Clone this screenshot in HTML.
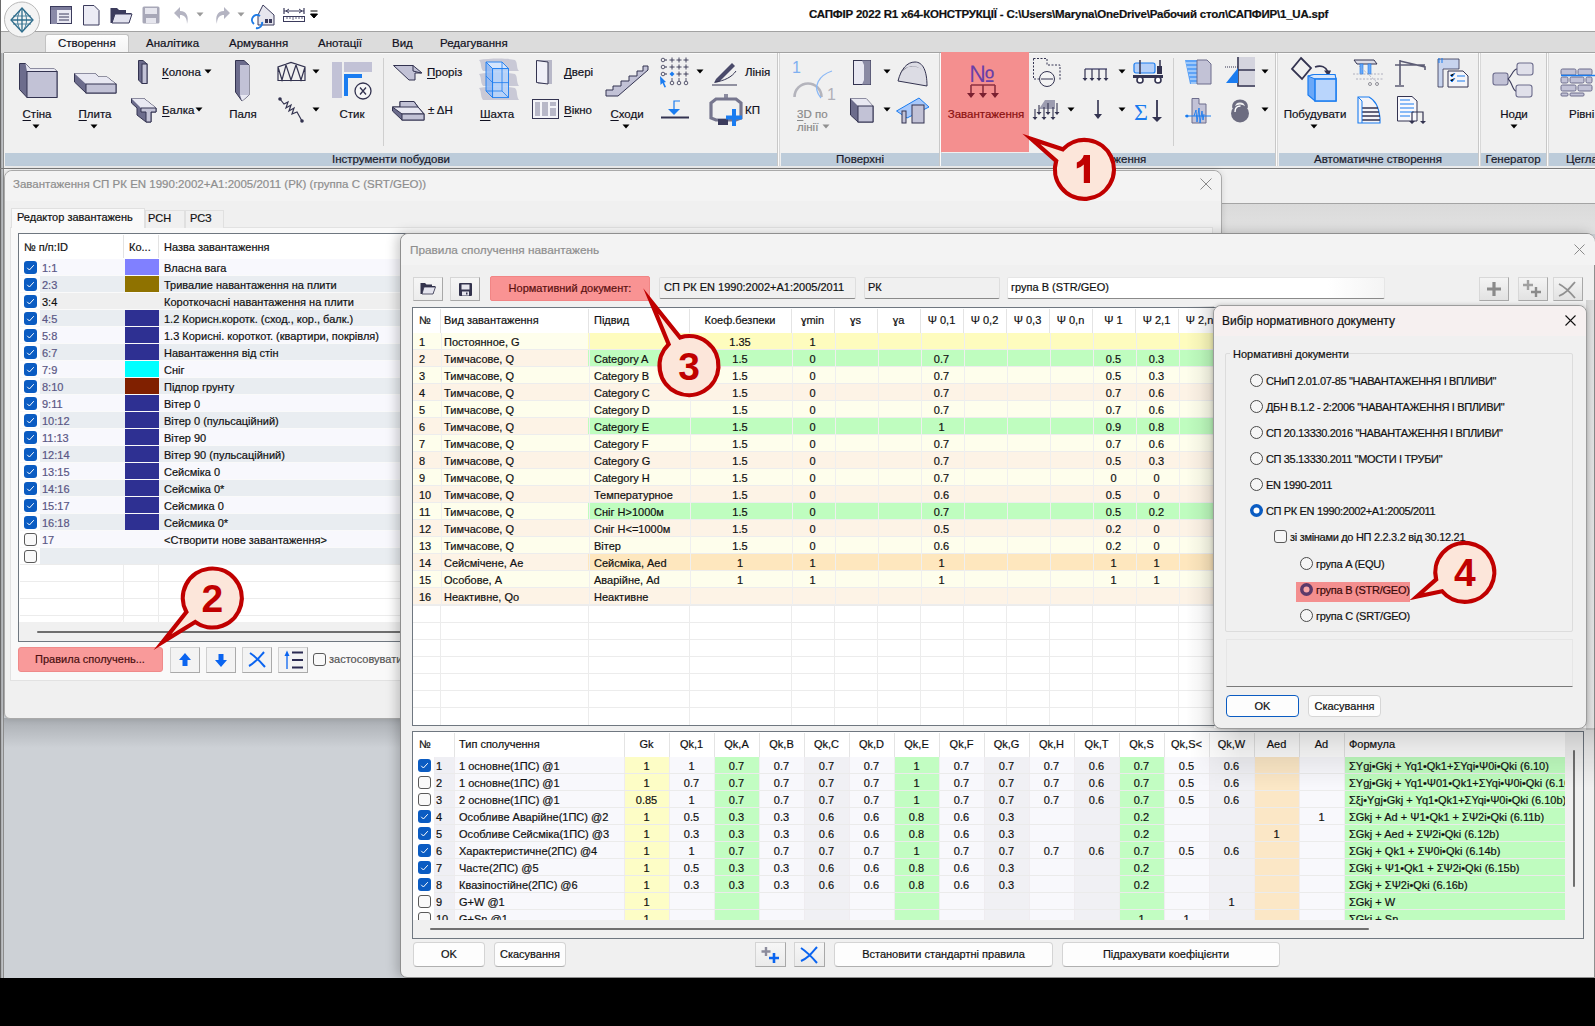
<!DOCTYPE html>
<html><head><meta charset="utf-8">
<style>
*{box-sizing:border-box;margin:0;padding:0}
html,body{width:1595px;height:1026px;overflow:hidden;background:#000}
body{position:relative;font-family:"Liberation Sans",sans-serif;font-size:11px;color:#000}
.a{position:absolute}
.t{position:absolute;white-space:nowrap;line-height:13px;-webkit-text-stroke:0.2px currentColor}
svg{overflow:visible}
</style></head><body>

<div class="a" style="left:0px;top:0px;width:1595px;height:978px;background:#cdd1d6"></div>
<div class="a" style="left:0px;top:0px;width:4px;height:978px;background:linear-gradient(90deg,#6a6a6a 0,#6a6a6a 1px,#a9aaac 1px,#c4c8cc 3px,#8c8c8c 3px)"></div>
<div class="a" style="left:1px;top:0px;width:1594px;height:31px;background:#fff"></div>
<svg class="a" style="left:50px;top:6px;" width="23" height="19" viewBox="0 0 23 19"><rect x="0.5" y="0.5" width="21" height="17" fill="#e9e9f3" stroke="#3b3b5c"/><rect x="1" y="1" width="20" height="3" fill="#7b7b9b"/><rect x="1" y="4" width="6" height="14" fill="#8a8aa8"/><path d="M9 8 H19 M9 11 H19 M9 14 H19" stroke="#3b3b5c" stroke-width="1"/></svg>
<svg class="a" style="left:83px;top:5px;" width="17" height="21" viewBox="0 0 17 21"><path d="M0.5 0.5 H11 L16 5.5 V20 H0.5 Z" fill="#ececf5" stroke="#3b3b5c"/></svg>
<svg class="a" style="left:110px;top:7px;" width="23" height="17" viewBox="0 0 23 17"><path d="M0.5 1 H7 L9 3 H16 V6 H21.5 L19 16 H0.5 Z" fill="#3b3b5c"/><path d="M2 16 L5 7 H22 L19 16 Z" fill="#e2e2ee" stroke="#3b3b5c"/></svg>
<svg class="a" style="left:142px;top:6px;" width="18" height="18" viewBox="0 0 18 18"><rect x="0.5" y="0.5" width="17" height="17" rx="1.5" fill="#a8a8b8"/><rect x="3" y="2" width="12" height="6" fill="#e6e6ee"/><rect x="4" y="12" width="10" height="5" fill="#e6e6ee"/></svg>
<svg class="a" style="left:172px;top:5px;" width="18" height="20" viewBox="0 0 18 20"><path d="M8 2 L2 8 L8 14 V10 C12 10 15 12 15 19 C17 12 15 6 8 6 Z" fill="#b4b4c2"/></svg>
<svg class="a" style="left:196px;top:12px;" width="8" height="5" viewBox="0 0 8 5"><path d="M0.5 0.5 H7.5 L4 4.5 Z" fill="#9a9a9a"/></svg>
<svg class="a" style="left:214px;top:5px;" width="18" height="20" viewBox="0 0 18 20"><path d="M10 2 L16 8 L10 14 V10 C6 10 3 12 3 19 C1 12 3 6 10 6 Z" fill="#b4b4c2"/></svg>
<svg class="a" style="left:237px;top:12px;" width="8" height="5" viewBox="0 0 8 5"><path d="M0.5 0.5 H7.5 L4 4.5 Z" fill="#9a9a9a"/></svg>
<svg class="a" style="left:252px;top:4px;" width="23" height="22" viewBox="0 0 23 22"><path d="M11 1 L22 11 V21 H6 V11 Z" fill="#e6e6ee" stroke="#3b3b5c"/><rect x="13" y="15" width="3" height="4" fill="#3b3b5c"/><rect x="17" y="15" width="3" height="4" fill="#3b3b5c"/><path d="M2 20 A5 5 0 0 1 8 12 M10 18 A5 5 0 0 1 4 24" stroke="#1e7be6" stroke-width="2" fill="none"/></svg>
<svg class="a" style="left:283px;top:8px;" width="22" height="15" viewBox="0 0 22 15"><path d="M1 3 H21 M1 0 V6 M21 0 V6" stroke="#3b3b5c" stroke-width="1.2"/><path d="M3 3 L6 1 M3 3 L6 5 M19 3 L16 1 M19 3 L16 5" stroke="#3b3b5c"/><rect x="0.5" y="8.5" width="21" height="5" fill="#fff" stroke="#3b3b5c"/><path d="M4 9 V11 M7 9 V11 M10 9 V12 M13 9 V11 M16 9 V11 M19 9 V11" stroke="#3b3b5c" stroke-width="0.8"/></svg>
<svg class="a" style="left:310px;top:10px;" width="8" height="10" viewBox="0 0 8 10"><path d="M0.5 1 H7.5 M0.5 4 H7.5 L4 8 Z" stroke="#000" fill="#000" stroke-width="1"/></svg>
<div class="t" style="left:809px;top:8px;font-weight:bold;font-size:11.5px;color:#111;letter-spacing:-0.2px">САПФІР 2022 R1 x64-КОНСТРУКЦІЇ - C:\Users\Maryna\OneDrive\Рабочий стол\САПФИР\1_UA.spf</div>
<div class="a" style="left:1px;top:31px;width:1594px;height:22px;background:#dcdcdc;border-top:1px solid #a2a2a2"></div>
<div class="a" style="left:45px;top:34px;width:84px;height:19px;background:linear-gradient(#fdfdfd,#f3f3f3);border:1px solid #c2c2c2;border-bottom:none;border-radius:3px 3px 0 0"></div>
<div class="t" style="left:58px;top:37px;font-size:11.5px;color:#101020">Створення</div>
<div class="t" style="left:146px;top:37px;font-size:11.5px;color:#101020">Аналітика</div>
<div class="t" style="left:229px;top:37px;font-size:11.5px;color:#101020">Армування</div>
<div class="t" style="left:318px;top:37px;font-size:11.5px;color:#101020">Анотації</div>
<div class="t" style="left:392px;top:37px;font-size:11.5px;color:#101020">Вид</div>
<div class="t" style="left:440px;top:37px;font-size:11.5px;color:#101020">Редагування</div>
<svg class="a" style="left:3px;top:1px;" width="38" height="38" viewBox="0 0 38 38"><circle cx="19" cy="18.5" r="17.5" fill="#f4f4f4" stroke="#b9b9b9" stroke-width="1"/><g fill="none" stroke="#2f6d8c" stroke-width="1.3"><path d="M19 7 L30 19 L19 31 L8 19 Z"/><path d="M19 7 V31 M8 19 H30"/><path d="M19 7 C13 13 13 25 19 31 M19 7 C25 13 25 25 19 31" stroke-width="0.9"/><path d="M10 15 H28 M10 23 H28" stroke-width="0.8"/></g></svg>
<div class="a" style="left:4px;top:52px;width:1591px;height:115px;background:#f0f0f0;border-top:1px solid #a2a2a2"></div>
<div class="a" style="left:4px;top:53px;width:1591px;height:1px;background:#fafafa"></div>
<div class="a" style="left:777px;top:53px;width:3px;height:114px;background:linear-gradient(90deg,#c8c8c8 0,#c8c8c8 1px,#fbfbfb 1px,#fbfbfb 2px,#d8d8d8 2px)"></div>
<div class="a" style="left:939px;top:53px;width:3px;height:114px;background:linear-gradient(90deg,#c8c8c8 0,#c8c8c8 1px,#fbfbfb 1px,#fbfbfb 2px,#d8d8d8 2px)"></div>
<div class="a" style="left:1275px;top:53px;width:3px;height:114px;background:linear-gradient(90deg,#c8c8c8 0,#c8c8c8 1px,#fbfbfb 1px,#fbfbfb 2px,#d8d8d8 2px)"></div>
<div class="a" style="left:1478px;top:53px;width:3px;height:114px;background:linear-gradient(90deg,#c8c8c8 0,#c8c8c8 1px,#fbfbfb 1px,#fbfbfb 2px,#d8d8d8 2px)"></div>
<div class="a" style="left:1546px;top:53px;width:3px;height:114px;background:linear-gradient(90deg,#c8c8c8 0,#c8c8c8 1px,#fbfbfb 1px,#fbfbfb 2px,#d8d8d8 2px)"></div>
<div class="a" style="left:5px;top:153px;width:772px;height:13px;background:#bdccda"></div>
<div class="a" style="left:781px;top:153px;width:158px;height:13px;background:#bdccda"></div>
<div class="a" style="left:941px;top:153px;width:334px;height:13px;background:#bdccda"></div>
<div class="a" style="left:1279px;top:153px;width:199px;height:13px;background:#bdccda"></div>
<div class="a" style="left:1481px;top:153px;width:65px;height:13px;background:#bdccda"></div>
<div class="a" style="left:1549px;top:153px;width:46px;height:13px;background:#bdccda"></div>
<div class="a" style="left:4px;top:166px;width:1591px;height:2px;background:#ececec"></div>
<div class="a" style="left:0px;top:168px;width:1595px;height:1px;background:#7a7a7a"></div>
<div class="a" style="left:4px;top:169px;width:1591px;height:1px;background:#f8f8f8"></div>
<div class="a" style="left:383px;top:58px;width:1px;height:88px;background:#cfcfcf"></div>
<div class="a" style="left:1173px;top:58px;width:1px;height:88px;background:#cfcfcf"></div>
<div class="t" style="left:191.0px;top:153px;width:400px;text-align:center;font-size:11.5px;line-height:13px;color:#1a1a2a">Інструменти побудови</div>
<div class="t" style="left:660.0px;top:153px;width:400px;text-align:center;font-size:11.5px;line-height:13px;color:#1a1a2a">Поверхні</div>
<div class="t" style="left:908.0px;top:153px;width:400px;text-align:center;font-size:11.5px;line-height:13px;color:#1a1a2a">Завантаження</div>
<div class="t" style="left:1178.0px;top:153px;width:400px;text-align:center;font-size:11.5px;line-height:13px;color:#1a1a2a">Автоматичне створення</div>
<div class="t" style="left:1313.0px;top:153px;width:400px;text-align:center;font-size:11.5px;line-height:13px;color:#1a1a2a">Генератор</div>
<div class="t" style="left:1566px;top:153px;font-size:11.5px;line-height:13px;color:#1a1a2a">Цегла</div>
<svg class="a" style="left:19px;top:63px;" width="39" height="36" viewBox="0 0 39 36"><path d="M0.5 0.5 H6.5 L11 5.5 H35 L38 8.5 V34.5 H8 L0.5 26.5 Z" fill="#6c6c8c" stroke="#333350"/><path d="M6.5 0.5 L11 5.5 H35 L38 8.5 H8 Z" fill="#e8e8f2"/><rect x="8" y="8.5" width="30" height="26" fill="#c2c2d6" stroke="#333350"/></svg>
<div class="t" style="left:-163px;top:108px;width:400px;text-align:center;font-size:11.5px;color:#101020"><u style="text-decoration-thickness:1px;text-underline-offset:2px">С</u>тіна</div>
<svg class="a" style="left:32px;top:124px;" width="8" height="5" viewBox="0 0 8 5"><path d="M0.5 0.5 H7.5 L4 4.5 Z" fill="#000"/></svg>
<svg class="a" style="left:74px;top:73px;" width="43" height="21" viewBox="0 0 43 21"><path d="M0.5 0.5 H21 L25 4 H33 L42 11 V20 H12 L0.5 9 Z" fill="#6c6c8c" stroke="#333350"/><path d="M0.5 0.5 H21 L25 4 H33 L42 11 H12 Z" fill="#e8e8f2"/><rect x="12" y="11" width="30" height="9" fill="#c2c2d6" stroke="#333350"/></svg>
<div class="t" style="left:-105px;top:108px;width:400px;text-align:center;font-size:11.5px;color:#101020"><u style="text-decoration-thickness:1px;text-underline-offset:2px">П</u>лита</div>
<svg class="a" style="left:90px;top:124px;" width="8" height="5" viewBox="0 0 8 5"><path d="M0.5 0.5 H7.5 L4 4.5 Z" fill="#000"/></svg>
<svg class="a" style="left:138px;top:60px;" width="10" height="25" viewBox="0 0 10 25"><path d="M0.5 0.5 H5 L9 4 V23.5 H4 L0.5 20 Z" fill="#6c6c8c" stroke="#333350"/><rect x="4" y="4" width="5" height="19.5" fill="#c2c2d6" stroke="#333350"/></svg>
<div class="t" style="left:162px;top:66px;font-size:11.5px;color:#101020"><u style="text-decoration-thickness:1px;text-underline-offset:2px">К</u>олона</div>
<svg class="a" style="left:204px;top:69px;" width="8" height="5" viewBox="0 0 8 5"><path d="M0.5 0.5 H7.5 L4 4.5 Z" fill="#000"/></svg>
<svg class="a" style="left:131px;top:98px;" width="26" height="25" viewBox="0 0 26 25"><path d="M0.5 0.5 H13 L25 10 V14 H20 V24 H15 L6 17 V10 L0.5 5 Z" fill="#6c6c8c" stroke="#333350"/><path d="M0.5 0.5 H13 L25 10 H10 Z" fill="#e8e8f2"/><path d="M10 10 H25 V14 H20 V24 H15 V14 H10 Z" fill="#c2c2d6" stroke="#333350"/></svg>
<div class="t" style="left:162px;top:104px;font-size:11.5px;color:#101020"><u style="text-decoration-thickness:1px;text-underline-offset:2px">Б</u>алка</div>
<svg class="a" style="left:195px;top:107px;" width="8" height="5" viewBox="0 0 8 5"><path d="M0.5 0.5 H7.5 L4 4.5 Z" fill="#000"/></svg>
<svg class="a" style="left:235px;top:60px;" width="15" height="42" viewBox="0 0 15 42"><path d="M0.5 0.5 H9 L14 5 V35 L7 41 L0.5 32 Z" fill="#6c6c8c" stroke="#333350"/><path d="M5 5 H14 V35 H5 Z" fill="#c2c2d6"/><path d="M5 35 H14 L7 41 Z" fill="#e8e8f2"/></svg>
<div class="t" style="left:43.0px;top:108px;width:400px;text-align:center;font-size:11.5px;color:#101020">Паля</div>
<svg class="a" style="left:277px;top:62px;" width="29" height="20" viewBox="0 0 29 20"><path d="M1 18.5 V5 L14 0.5 L28 5 V18.5 Z M1 5 L5 18 L9 3 L14 18 L19 3 L24 18 L28 5" fill="none" stroke="#333350" stroke-width="1.2"/></svg>
<svg class="a" style="left:312px;top:69px;" width="8" height="5" viewBox="0 0 8 5"><path d="M0.5 0.5 H7.5 L4 4.5 Z" fill="#000"/></svg>
<svg class="a" style="left:277px;top:96px;" width="29" height="28" viewBox="0 0 29 28"><circle cx="3" cy="3" r="1.8" fill="#333350"/><circle cx="25" cy="25" r="1.8" fill="#333350"/><path d="M3 3 L7 8 L11 6 L9 12 L14 9 L12 15 L17 12 L15 18 L20 16 L25 25" fill="none" stroke="#333350" stroke-width="1.2"/></svg>
<svg class="a" style="left:312px;top:107px;" width="8" height="5" viewBox="0 0 8 5"><path d="M0.5 0.5 H7.5 L4 4.5 Z" fill="#000"/></svg>
<svg class="a" style="left:332px;top:62px;" width="40" height="38" viewBox="0 0 40 38"><rect x="0" y="0" width="10" height="36" fill="#c2c2d6"/><rect x="12" y="0" width="28" height="10" fill="#c2c2d6"/><path d="M12 12 H30 V16 H16 V34 H12 Z" fill="#1a7cf0"/><circle cx="31" cy="29" r="8" fill="#f7f7f7" stroke="#333350" stroke-width="1.3"/><path d="M28 25.5 L34 32.5 M34 25.5 L28 32.5" stroke="#333350" stroke-width="1.3"/></svg>
<div class="t" style="left:152.0px;top:108px;width:400px;text-align:center;font-size:11.5px;color:#101020">Стик</div>
<svg class="a" style="left:393px;top:65px;" width="30" height="16" viewBox="0 0 30 16"><path d="M0.5 0.5 H20 L29 8 H22 V15 H16 Z" fill="#c2c2d6" stroke="#333350"/><path d="M20 0.5 V6 L28 8" fill="none" stroke="#333350"/></svg>
<div class="t" style="left:427px;top:66px;font-size:11.5px;color:#101020"><u style="text-decoration-thickness:1px;text-underline-offset:2px">П</u>роріз</div>
<svg class="a" style="left:392px;top:101px;" width="33" height="20" viewBox="0 0 33 20"><path d="M0.5 6 H8 V0.5 H22 L26 6 L32 13 V19 H10 L0.5 10 Z" fill="#6c6c8c" stroke="#333350"/><path d="M8 0.5 H22 L26 6 V9 H8 Z" fill="#c2c2d6" stroke="#333350"/><path d="M0.5 6 H26 L32 13 H10 Z" fill="#e8e8f2" stroke="#333350"/><rect x="10" y="13" width="22" height="6" fill="#c2c2d6" stroke="#333350"/></svg>
<div class="t" style="left:428px;top:104px;font-size:11.5px;color:#101020">± ΔH</div>
<svg class="a" style="left:478px;top:58px;" width="41" height="43" viewBox="0 0 41 43"><g fill="#c9c9d6"><path d="M1 2 C12 0 30 0 37 2 C40 5 38 10 41 13 L5 13 C2 9 4 5 1 2 Z"/><path d="M1 16 C12 14 30 14 37 16 C40 19 38 24 41 28 L5 28 C2 24 4 20 1 16 Z"/><path d="M1 30 C12 28 30 28 37 30 C40 33 38 38 41 42 L5 42 C2 38 4 34 1 30 Z"/></g><path d="M8 4 L14.6 10.6 V39.6 L8 33 Z" fill="#8fb9f6" fill-opacity="0.85" stroke="#1a7cf0" stroke-width="0.9"/><path d="M8 4 H24 L30.5 10.6 H14.6 Z" fill="#d4e5fd" stroke="#1a7cf0" stroke-width="0.9"/><rect x="14.6" y="10.6" width="15.9" height="29" fill="#b6d3fb" fill-opacity="0.9" stroke="#1a7cf0" stroke-width="0.9"/><path d="M8 18 L14.6 24.6 H30.5 M24 4 V33 L30.5 39.6 M8 33 H24" fill="none" stroke="#1a7cf0" stroke-width="0.8"/></svg>
<div class="t" style="left:297px;top:108px;width:400px;text-align:center;font-size:11.5px;color:#101020"><u style="text-decoration-thickness:1px;text-underline-offset:2px">Ш</u>ахта</div>
<svg class="a" style="left:536px;top:60px;" width="16" height="25" viewBox="0 0 16 25"><rect x="2" y="0" width="14" height="24" fill="#b8b8c8"/><path d="M0.5 0.5 L12 2 V24 L0.5 22.5 Z" fill="#f0f0f8" stroke="#333350"/></svg>
<div class="t" style="left:564px;top:66px;font-size:11.5px;color:#101020"><u style="text-decoration-thickness:1px;text-underline-offset:2px">Д</u>вері</div>
<svg class="a" style="left:532px;top:99px;" width="27" height="20" viewBox="0 0 27 20"><rect x="0.5" y="0.5" width="26" height="19" fill="#f4f4f8" stroke="#333350"/><rect x="3" y="3" width="5" height="14" fill="#b8b8c8"/><rect x="10" y="3" width="6" height="14" fill="#b8b8c8"/><rect x="18" y="3" width="6" height="4" fill="#b8b8c8"/><rect x="18" y="9" width="6" height="8" fill="#b8b8c8"/></svg>
<div class="t" style="left:564px;top:104px;font-size:11.5px;color:#101020"><u style="text-decoration-thickness:1px;text-underline-offset:2px">В</u>ікно</div>
<svg class="a" style="left:605px;top:65px;" width="44" height="32" viewBox="0 0 44 32"><path d="M1 31 V25 H8 V21 H16 V16 H24 V11 H32 V6 H38 V1 H43 V5 L13 31 Z" fill="#c2c2d6" stroke="#333350"/></svg>
<div class="t" style="left:427px;top:108px;width:400px;text-align:center;font-size:11.5px;color:#101020"><u style="text-decoration-thickness:1px;text-underline-offset:2px">С</u>ходи</div>
<svg class="a" style="left:622px;top:124px;" width="8" height="5" viewBox="0 0 8 5"><path d="M0.5 0.5 H7.5 L4 4.5 Z" fill="#000"/></svg>
<svg class="a" style="left:660px;top:57px;" width="30" height="31" viewBox="0 0 30 31"><circle cx="3" cy="3" r="1.8" fill="none" stroke="#333350" stroke-width="0.8"/><path d="M5 3 H7" stroke="#333350"/><path d="M9.5 3 H14.5 M12 0.5 V5.5" stroke="#333350" stroke-width="0.9"/><path d="M16.5 3 H21.5 M19 0.5 V5.5" stroke="#333350" stroke-width="0.9"/><path d="M23.5 3 H28.5 M26 0.5 V5.5" stroke="#333350" stroke-width="0.9"/><circle cx="3" cy="10" r="1.8" fill="none" stroke="#333350" stroke-width="0.8"/><path d="M5 10 H7" stroke="#333350"/><path d="M9.5 10 H14.5 M12 7.5 V12.5" stroke="#333350" stroke-width="0.9"/><path d="M16.5 10 H21.5 M19 7.5 V12.5" stroke="#333350" stroke-width="0.9"/><path d="M23.5 10 H28.5 M26 7.5 V12.5" stroke="#333350" stroke-width="0.9"/><circle cx="3" cy="17" r="1.8" fill="none" stroke="#333350" stroke-width="0.8"/><path d="M5 17 H7" stroke="#333350"/><path d="M12 14.5 L14.5 17 L12 19.5 L9.5 17 Z" fill="#1a7cf0"/><path d="M16.5 17 H21.5 M19 14.5 V19.5" stroke="#333350" stroke-width="0.9"/><path d="M23.5 17 H28.5 M26 14.5 V19.5" stroke="#333350" stroke-width="0.9"/><circle cx="12" cy="26" r="1.8" fill="none" stroke="#333350" stroke-width="0.8"/><path d="M12 21 V24" stroke="#333350" stroke-width="0.8"/><circle cx="19" cy="26" r="1.8" fill="none" stroke="#333350" stroke-width="0.8"/><path d="M19 21 V24" stroke="#333350" stroke-width="0.8"/><circle cx="26" cy="26" r="1.8" fill="none" stroke="#333350" stroke-width="0.8"/><path d="M26 21 V24" stroke="#333350" stroke-width="0.8"/><path d="M0 19 L6 25 L4 25.5 L6 30 L4.5 30.5 L2.5 26 L0.5 28 Z" fill="#1a7cf0"/></svg>
<svg class="a" style="left:696px;top:69px;" width="8" height="5" viewBox="0 0 8 5"><path d="M0.5 0.5 H7.5 L4 4.5 Z" fill="#000"/></svg>
<svg class="a" style="left:661px;top:100px;" width="29" height="19" viewBox="0 0 29 19"><path d="M0 17.5 H28" stroke="#333350" stroke-width="2"/><path d="M19 1 H13 V9" stroke="#1a7cf0" stroke-width="1.2" fill="none"/><path d="M7 9 H19 L13 15 Z" fill="#1a7cf0"/></svg>
<svg class="a" style="left:712px;top:59px;" width="27" height="26" viewBox="0 0 27 26"><path d="M4 20 L20 4 L23 7 L7 23 L2 24 Z" fill="#4a4a6a"/><path d="M3 23 C12 22 20 18 24 12" stroke="#333350" fill="none"/><path d="M0 26 H25" stroke="#333350"/></svg>
<div class="t" style="left:745px;top:66px;font-size:11.5px;color:#101020">Лінія</div>
<svg class="a" style="left:710px;top:94px;" width="34" height="33" viewBox="0 0 34 33"><rect x="14" y="0" width="4" height="5" fill="#8c8ca0"/><path d="M6 5 H26 L31 9 V24 L26 26 H6 L1 24 V9 Z" fill="none" stroke="#76768e" stroke-width="3.2"/><rect x="8" y="25" width="10" height="6" fill="#3b3b5c"/><path d="M24 15 V32 M16 23.5 H32" stroke="#1a7cf0" stroke-width="4"/></svg>
<div class="t" style="left:745px;top:104px;font-size:11.5px;color:#101020">КП</div>
<svg class="a" style="left:780px;top:50px;" width="60" height="60" viewBox="0 0 60 60"><text x="12" y="22.5" font-family="Liberation Sans" font-size="16" fill="#7fb0f0">1</text><text x="47" y="50" font-family="Liberation Sans" font-size="16" fill="#b0b0b8">1</text><path d="M14.5 47 A13.5 13.5 0 0 1 41.5 47" stroke="#b4b4bc" stroke-width="2.6" fill="none"/><path d="M52 21 C40 25 31 36 41 48" stroke="#8ab8f6" stroke-width="1.3" fill="none"/></svg>
<div class="t" style="left:797px;top:108px;font-size:11.5px;color:#8a8a8a"><u style="text-decoration-thickness:1px;text-underline-offset:2px">3</u>D по</div>
<div class="t" style="left:797px;top:121px;font-size:11.5px;color:#8a8a8a">лінії</div>
<svg class="a" style="left:822px;top:124px;" width="8" height="5" viewBox="0 0 8 5"><path d="M0.5 0.5 H7.5 L4 4.5 Z" fill="#909090"/></svg>
<svg class="a" style="left:853px;top:60px;" width="19" height="26" viewBox="0 0 19 26"><rect x="0.5" y="0.5" width="17" height="24" fill="#e8e8f2" stroke="#333350"/><path d="M9 0.5 H17.5 V24.5 H9 L11 20 V5 Z" fill="#8a8aa4"/></svg>
<svg class="a" style="left:883px;top:69px;" width="8" height="5" viewBox="0 0 8 5"><path d="M0.5 0.5 H7.5 L4 4.5 Z" fill="#000"/></svg>
<svg class="a" style="left:850px;top:98px;" width="24" height="25" viewBox="0 0 24 25"><path d="M0.5 0.5 H16 L23 8 V24 H8 L0.5 17 Z" fill="#6c6c8c" stroke="#333350"/><path d="M0.5 0.5 H16 L23 8 H8 Z" fill="#e8e8f2"/><rect x="8" y="8" width="15" height="16" fill="#c2c2d6" stroke="#333350"/></svg>
<svg class="a" style="left:883px;top:107px;" width="8" height="5" viewBox="0 0 8 5"><path d="M0.5 0.5 H7.5 L4 4.5 Z" fill="#000"/></svg>
<svg class="a" style="left:897px;top:61px;" width="32" height="27" viewBox="0 0 32 27"><path d="M1 20 C4 8 10 1 18 1 C26 1 30 10 30 25 L1 20 Z" fill="#dcdce4" stroke="#333350"/><path d="M3 12 C8 4 20 3 25 9 C22 5 12 4 8 8" fill="#5a5a6a"/></svg>
<svg class="a" style="left:896px;top:97px;" width="34" height="27" viewBox="0 0 34 27"><path d="M0.5 14 L23 1 L33 10 L11 21 Z" fill="#a8c8fa" stroke="#1a7cf0"/><rect x="6" y="14" width="4" height="12" fill="#c2c2d6" stroke="#333350"/><rect x="16" y="8" width="12" height="18" fill="#c2c2d6" stroke="#333350"/></svg>
<div class="a" style="left:941px;top:52px;width:88px;height:100px;background:#f48f8f"></div>
<svg class="a" style="left:966px;top:60px;" width="38" height="38" viewBox="0 0 38 38"><text x="3" y="22" font-family="Liberation Sans" font-size="24" fill="#6a40a8">№</text><path d="M5 25 H29 M5 25 V33 M17 25 V33 M29 25 V33" stroke="#8c3040" stroke-width="1.6" fill="none"/><path d="M1 33 H9 L5 38 Z M13 33 H21 L17 38 Z M25 33 H33 L29 38 Z" fill="#7a2030"/></svg>
<div class="t" style="left:786.0px;top:108px;width:400px;text-align:center;font-size:11.5px;color:#8a1010">Завантаження</div>
<svg class="a" style="left:1033px;top:58px;" width="28" height="29" viewBox="0 0 28 29"><path d="M0.5 0.5 H14 V7 H27 V22" fill="none" stroke="#333350" stroke-dasharray="2 1.5"/><path d="M0.5 0.5 V21 H6" fill="none" stroke="#333350" stroke-dasharray="2 1.5"/><circle cx="14" cy="21" r="7.5" fill="#f4f4f4" stroke="#333350"/><path d="M8 21 H20" stroke="#333350"/></svg>
<svg class="a" style="left:1083px;top:68px;" width="26" height="14" viewBox="0 0 26 14"><path d="M2 1 H24" stroke="#80809a" stroke-width="2"/><path d="M2 1 V11 M9 1 V11 M16 1 V11 M23 1 V11" stroke="#333350" stroke-width="1.2"/><path d="M-0.5 10 H4.5 L2 13 Z M6.5 10 H11.5 L9 13 Z M13.5 10 H18.5 L16 13 Z M20.5 10 H25.5 L23 13 Z" fill="#333350"/></svg>
<svg class="a" style="left:1118px;top:69px;" width="8" height="5" viewBox="0 0 8 5"><path d="M0.5 0.5 H7.5 L4 4.5 Z" fill="#000"/></svg>
<svg class="a" style="left:1133px;top:60px;" width="31" height="24" viewBox="0 0 31 24"><rect x="1" y="3" width="21" height="10" rx="2" fill="#b4cff8" stroke="#1a7cf0" stroke-width="1.2"/><path d="M7 0 V14 M27 0 V14" stroke="#333350" stroke-width="1.5"/><rect x="0" y="15" width="30" height="3" fill="#333350"/><circle cx="7" cy="20" r="3" fill="#fff" stroke="#333350" stroke-width="1.6"/><circle cx="25" cy="20" r="3" fill="#fff" stroke="#333350" stroke-width="1.6"/><path d="M24 6 H29 V14 H24 Z" fill="#333350"/></svg>
<svg class="a" style="left:1033px;top:99px;" width="30" height="22" viewBox="0 0 30 22"><path d="M6 10 L12 1 H22 V10 Z" fill="#9c9cb0"/><path d="M2 10 V19 M11 8 V19 M20 8 V19 M6 6 V14 M15 4 V14 M24 4 V14" stroke="#333350" stroke-width="1.1"/><path d="M-0.5 18 H4.5 L2 21 Z M8.5 18 H13.5 L11 21 Z M17.5 18 H22.5 L20 21 Z M3.5 13 H8.5 L6 16 Z M12.5 13 H17.5 L15 16 Z M21.5 13 H26.5 L24 16 Z" fill="#333350"/></svg>
<svg class="a" style="left:1067px;top:107px;" width="8" height="5" viewBox="0 0 8 5"><path d="M0.5 0.5 H7.5 L4 4.5 Z" fill="#000"/></svg>
<svg class="a" style="left:1093px;top:100px;" width="10" height="20" viewBox="0 0 10 20"><path d="M5 0 V16" stroke="#333350" stroke-width="1.6"/><path d="M1 14 H9 L5 19 Z" fill="#333350"/></svg>
<svg class="a" style="left:1118px;top:107px;" width="8" height="5" viewBox="0 0 8 5"><path d="M0.5 0.5 H7.5 L4 4.5 Z" fill="#000"/></svg>
<svg class="a" style="left:1134px;top:100px;" width="30" height="23" viewBox="0 0 30 23"><text x="0" y="20" font-family="Liberation Serif" font-size="24" fill="#1a7cf0">Σ</text><path d="M23 0 V18" stroke="#333350" stroke-width="1.8"/><path d="M18 17 H28 L23 22 Z" fill="#333350"/></svg>
<svg class="a" style="left:1185px;top:59px;" width="27" height="26" viewBox="0 0 27 26"><path d="M0 1 H12 V25 H5 Z" fill="#5ea3f6"/><path d="M1 4 H12 M2 8 H12 M3 12 H12 M4 16 H12 M5 20 H12 M6 24 H12" stroke="#fff" stroke-width="0.8"/><path d="M12 1 H22 L26 5 V25 H12 Z" fill="#c2c2d6" stroke="#6c6c8c"/></svg>
<svg class="a" style="left:1224px;top:57px;" width="32" height="31" viewBox="0 0 32 31"><rect x="15" y="0" width="16" height="30" fill="#d4d4de"/><path d="M14 0 V29 H31 M14 13 H31" stroke="#333350" stroke-width="1.6" fill="none"/><path d="M1 10 H14" stroke="#333350" stroke-dasharray="1 1"/><path d="M14 11 L2 26 H14 Z" fill="#1a7cf0"/></svg>
<svg class="a" style="left:1261px;top:69px;" width="8" height="5" viewBox="0 0 8 5"><path d="M0.5 0.5 H7.5 L4 4.5 Z" fill="#000"/></svg>
<svg class="a" style="left:1185px;top:98px;" width="27" height="26" viewBox="0 0 27 26"><path d="M7 0.5 H14 V6 H21 V25 H7 Z" fill="#c2c2d6" stroke="#6c6c8c"/><path d="M0 18 H26" stroke="#1a7cf0" stroke-width="1"/><circle cx="2" cy="18" r="1.5" fill="#1a7cf0"/><path d="M9 18 L11 12 L12 24 L14 10 L15 25 L17 13 L18 22 L19 16" stroke="#1a7cf0" fill="none" stroke-width="0.9"/></svg>
<svg class="a" style="left:1230px;top:97px;" width="20" height="27" viewBox="0 0 20 27"><path d="M3.8 11 C2 1.5 18 1.5 16.2 11" stroke="#6c6c80" stroke-width="3" fill="none"/><circle cx="10" cy="16.5" r="9" fill="#6c6c80"/><path d="M5 15 C5 11 7.5 9 10.5 9" stroke="#fff" stroke-width="1.4" fill="none"/></svg>
<svg class="a" style="left:1261px;top:107px;" width="8" height="5" viewBox="0 0 8 5"><path d="M0.5 0.5 H7.5 L4 4.5 Z" fill="#000"/></svg>
<svg class="a" style="left:1291px;top:57px;" width="46" height="46" viewBox="0 0 46 46"><path d="M10 1 L20 11 L11 22 L1 12 Z" fill="none" stroke="#333350" stroke-width="1.8" stroke-linejoin="miter"/><path d="M24 10 C30 8 35 10 37 15" stroke="#333350" stroke-width="1.8" fill="none"/><path d="M33 13.5 H40 L37.5 19.5 Z" fill="#333350"/><path d="M17 19 L23 17.5 H44 L45 22 V44 H24 L17 38 Z" fill="#6aa8f8" stroke="#1a7cf0" stroke-width="1.2"/><path d="M17 19 L23 17.5 H44 L45 22 H24 Z" fill="#d6e6fd" stroke="#1a7cf0" stroke-width="1"/><rect x="24" y="22" width="21" height="22" fill="#b9d5fc" stroke="#1a7cf0" stroke-width="1.5"/></svg>
<div class="t" style="left:1115.0px;top:108px;width:400px;text-align:center;font-size:11.5px;color:#101020">Побудувати</div>
<svg class="a" style="left:1310px;top:124px;" width="8" height="5" viewBox="0 0 8 5"><path d="M0.5 0.5 H7.5 L4 4.5 Z" fill="#000"/></svg>
<svg class="a" style="left:1353px;top:58px;" width="31" height="29" viewBox="0 0 31 29"><path d="M1 2 H21 L24 6 H4 Z" fill="#dcdce6" stroke="#333350"/><rect x="7" y="6" width="3" height="10" fill="#6aa8f8" stroke="#1a7cf0" stroke-width="0.6"/><rect x="15" y="6" width="3" height="10" fill="#6aa8f8" stroke="#1a7cf0" stroke-width="0.6"/><path d="M0 16 H30 M3 21 H30 M6 8 L26 26" stroke="#a0a0b0" stroke-dasharray="2 1.5" stroke-width="0.8"/><circle cx="17" cy="26" r="1.5" fill="none" stroke="#909098"/><circle cx="24" cy="26" r="1.5" fill="none" stroke="#909098"/></svg>
<svg class="a" style="left:1395px;top:59px;" width="31" height="28" viewBox="0 0 31 28"><path d="M5 1 V26 M0 27 H9 M5 2 L30 8 V11 M0 6 H30" stroke="#5c5c74" stroke-width="1.6" fill="none"/></svg>
<svg class="a" style="left:1437px;top:57px;" width="32" height="31" viewBox="0 0 32 31"><path d="M1 2 H22 V12 H6 V30 H1 Z" fill="#c8d4ee" stroke="#333350" stroke-width="0.8"/><path d="M2 1 V6 M5 1 V6" stroke="#1a7cf0"/><path d="M11 14 H26 L31 19 V30 H11 Z" fill="#f4f4f8" stroke="#333350"/><path d="M13 18 L15 20 L18 16 M13 23 L15 25 L18 21 M20 19 H28 M20 24 H28" stroke="#1a7cf0" stroke-width="1"/></svg>
<svg class="a" style="left:1357px;top:96px;" width="25" height="28" viewBox="0 0 25 28"><path d="M1 1 H12 C18 4 22 12 23 22 V27 H1 Z" fill="#f4f4f8" stroke="#1a7cf0" stroke-width="1.1"/><path d="M5 12 H21 M5 16 H22 M5 20 H23 M5 24 H23" stroke="#333350" stroke-width="1.5"/><path d="M1 1 L5 5 V27" stroke="#1a7cf0" fill="none"/></svg>
<svg class="a" style="left:1397px;top:96px;" width="29" height="29" viewBox="0 0 29 29"><path d="M0.5 0.5 H15 L20 5 V25 H0.5 Z" fill="#f8f8fc" stroke="#333350"/><path d="M3 4 H13 M3 8 H17 M3 12 H17 M3 16 H17 M3 20 H13" stroke="#1a7cf0" stroke-width="1.2"/><path d="M15 16 H26 V26 M15 16 V26" stroke="#333350" stroke-width="1.2" fill="none"/><path d="M12 25 H18 L15 28 Z M23 25 H29 L26 28 Z" fill="#333350"/></svg>
<svg class="a" style="left:1491px;top:62px;" width="45" height="38" viewBox="0 0 45 38"><rect x="2" y="11" width="15" height="12" rx="2.5" fill="#c2c2d6" stroke="#6c6c8c" stroke-width="1.1"/><rect x="26" y="1" width="16" height="12" rx="2.5" fill="#e0e0ea" stroke="#6c6c8c" stroke-width="1.1"/><rect x="25" y="23" width="16" height="12" rx="2.5" fill="#e0e0ea" stroke="#6c6c8c" stroke-width="1.1"/><path d="M17 17 C21 14 22 7 26 7 M17 17 C21 20 22 29 25 29" stroke="#3b3b5c" fill="none" stroke-width="1.1"/></svg>
<div class="t" style="left:1314.0px;top:108px;width:400px;text-align:center;font-size:11.5px;color:#101020">Ноди</div>
<svg class="a" style="left:1510px;top:124px;" width="8" height="5" viewBox="0 0 8 5"><path d="M0.5 0.5 H7.5 L4 4.5 Z" fill="#000"/></svg>
<svg class="a" style="left:1560px;top:68px;" width="36" height="29" viewBox="0 0 36 29"><g fill="#c2c2d6" stroke="#6c6c8c" stroke-width="1"><rect x="1" y="1" width="15" height="6" rx="1.5"/><rect x="18" y="1" width="14" height="6" rx="1.5"/><rect x="1" y="9" width="7" height="6" rx="1.5"/><rect x="10" y="9" width="14" height="6" rx="1.5"/><rect x="26" y="9" width="6" height="6" rx="1.5"/><rect x="1" y="17" width="15" height="6" rx="1.5"/><rect x="18" y="17" width="14" height="6" rx="1.5"/><rect x="1" y="25" width="7" height="3" rx="1"/><rect x="10" y="25" width="14" height="3" rx="1"/></g><path d="M1 7.5 H36" stroke="#1a7cf0" stroke-width="1.5"/></svg>
<div class="t" style="left:1569px;top:108px;font-size:11.5px;color:#101020">Рівні</div>
<div class="a" style="left:4px;top:170px;width:1591px;height:34px;background:#f0f0f0"></div>
<div class="a" style="left:4px;top:203px;width:1591px;height:31px;background:linear-gradient(#dadada,#e2e2e2);border-top:1px solid #a4a4a4"></div>
<div class="a" style="left:4px;top:718px;width:396px;height:260px;background:linear-gradient(#a9adb2,#cdd1d6 30px,#cdd1d6)"></div>
<div class="a" style="left:4px;top:170px;width:1218px;height:549px;background:#f0f0f0;border:1px solid #a9a9a9;border-radius:8px 8px 6px 6px;box-shadow:0 0 6px rgba(0,0,0,0.12)"></div>
<div class="a" style="left:5px;top:171px;width:1216px;height:30px;background:#f3f3f3;border-radius:8px 8px 0 0"></div>
<div class="t" style="left:13px;top:178px;font-size:11.5px;color:#8e8e8e">Завантаження СП РК EN 1990:2002+A1:2005/2011 (РК) (группа С (SRT/GEO))</div>
<svg class="a" style="left:1200px;top:178px;" width="12" height="12" viewBox="0 0 12 12"><path d="M0.5 0.5 L11.5 11.5 M11.5 0.5 L0.5 11.5" stroke="#8a8a8a" stroke-width="1"/></svg>
<div class="a" style="left:10px;top:227px;width:1203px;height:454px;background:#f9f9f9;border:1px solid #e2e2e2"></div>
<div class="a" style="left:11px;top:208px;width:134px;height:20px;background:#f9f9f9;border:1px solid #e0e0e0;border-bottom:none"></div>
<div class="a" style="left:145px;top:210px;width:40px;height:18px;background:#f0f0f0;border:1px solid #e0e0e0;border-bottom:none"></div>
<div class="a" style="left:185px;top:210px;width:39px;height:18px;background:#f0f0f0;border:1px solid #e0e0e0;border-bottom:none"></div>
<div class="t" style="left:17px;top:211px;font-size:11px;color:#111">Редактор завантажень</div>
<div class="t" style="left:148px;top:212px;font-size:11px;color:#111">РСН</div>
<div class="t" style="left:190px;top:212px;font-size:11px;color:#111">РСЗ</div>
<div class="a" style="left:18px;top:233px;width:1190px;height:409px;background:#fff;border:1px solid #6f7780;border-right:none"></div>
<div class="a" style="left:123px;top:235px;width:1px;height:23px;background:#e3e3e3"></div>
<div class="a" style="left:158px;top:235px;width:1px;height:23px;background:#e3e3e3"></div>
<div class="t" style="left:24px;top:241px;font-size:11px;color:#111">№ п/п:ID</div>
<div class="t" style="left:129px;top:241px;font-size:11px;color:#111">Ко...</div>
<div class="t" style="left:164px;top:241px;font-size:11px;color:#111">Назва завантаження</div>
<div class="a" style="left:40px;top:259px;width:1168px;height:17px;background:#f8f8fd"></div>
<div class="a" style="left:24px;top:261px;width:13px;height:13px"><svg width="13" height="13" viewBox="0 0 13 13"><rect x="0" y="0" width="13" height="13" rx="3" fill="#0b5cc2"/><path d="M3.2 6.8 L5.4 9 L9.8 4.2" stroke="#fff" stroke-width="1" fill="none"/></svg></div>
<div class="a" style="left:125px;top:259px;width:34px;height:17px;background:#8080ff"></div>
<div class="t" style="left:42px;top:262px;font-size:11px;color:#5a5785">1:1</div>
<div class="t" style="left:164px;top:262px;font-size:11px;color:#111">Власна вага</div>
<div class="a" style="left:20px;top:275px;width:1188px;height:1px;background:#fafafa"></div>
<div class="a" style="left:40px;top:276px;width:1168px;height:17px;background:#e9edf1"></div>
<div class="a" style="left:24px;top:278px;width:13px;height:13px"><svg width="13" height="13" viewBox="0 0 13 13"><rect x="0" y="0" width="13" height="13" rx="3" fill="#0b5cc2"/><path d="M3.2 6.8 L5.4 9 L9.8 4.2" stroke="#fff" stroke-width="1" fill="none"/></svg></div>
<div class="a" style="left:125px;top:276px;width:34px;height:17px;background:#8f7200"></div>
<div class="t" style="left:42px;top:279px;font-size:11px;color:#5a5785">2:3</div>
<div class="t" style="left:164px;top:279px;font-size:11px;color:#111">Тривалие навантаження на плити</div>
<div class="a" style="left:20px;top:292px;width:1188px;height:1px;background:#fafafa"></div>
<div class="a" style="left:40px;top:293px;width:1168px;height:17px;background:#efefef"></div>
<div class="a" style="left:24px;top:295px;width:13px;height:13px"><svg width="13" height="13" viewBox="0 0 13 13"><rect x="0" y="0" width="13" height="13" rx="3" fill="#0b5cc2"/><path d="M3.2 6.8 L5.4 9 L9.8 4.2" stroke="#fff" stroke-width="1" fill="none"/></svg></div>
<div class="t" style="left:42px;top:296px;font-size:11px;color:#111">3:4</div>
<div class="t" style="left:164px;top:296px;font-size:11px;color:#111">Короткочасні навантаження на плити</div>
<div class="a" style="left:20px;top:309px;width:1188px;height:1px;background:#fafafa"></div>
<div class="a" style="left:40px;top:310px;width:1168px;height:17px;background:#e9edf1"></div>
<div class="a" style="left:24px;top:312px;width:13px;height:13px"><svg width="13" height="13" viewBox="0 0 13 13"><rect x="0" y="0" width="13" height="13" rx="3" fill="#0b5cc2"/><path d="M3.2 6.8 L5.4 9 L9.8 4.2" stroke="#fff" stroke-width="1" fill="none"/></svg></div>
<div class="a" style="left:125px;top:310px;width:34px;height:17px;background:#2e3092"></div>
<div class="t" style="left:42px;top:313px;font-size:11px;color:#5a5785">4:5</div>
<div class="t" style="left:164px;top:313px;font-size:11px;color:#111">1.2 Корисн.коротк. (сход., кор., балк.)</div>
<div class="a" style="left:20px;top:326px;width:1188px;height:1px;background:#fafafa"></div>
<div class="a" style="left:40px;top:327px;width:1168px;height:17px;background:#f8f8fd"></div>
<div class="a" style="left:24px;top:329px;width:13px;height:13px"><svg width="13" height="13" viewBox="0 0 13 13"><rect x="0" y="0" width="13" height="13" rx="3" fill="#0b5cc2"/><path d="M3.2 6.8 L5.4 9 L9.8 4.2" stroke="#fff" stroke-width="1" fill="none"/></svg></div>
<div class="a" style="left:125px;top:327px;width:34px;height:17px;background:#2e3092"></div>
<div class="t" style="left:42px;top:330px;font-size:11px;color:#5a5785">5:8</div>
<div class="t" style="left:164px;top:330px;font-size:11px;color:#111">1.3 Корисні. короткот. (квартири, покрівля)</div>
<div class="a" style="left:20px;top:343px;width:1188px;height:1px;background:#fafafa"></div>
<div class="a" style="left:40px;top:344px;width:1168px;height:17px;background:#e9edf1"></div>
<div class="a" style="left:24px;top:346px;width:13px;height:13px"><svg width="13" height="13" viewBox="0 0 13 13"><rect x="0" y="0" width="13" height="13" rx="3" fill="#0b5cc2"/><path d="M3.2 6.8 L5.4 9 L9.8 4.2" stroke="#fff" stroke-width="1" fill="none"/></svg></div>
<div class="a" style="left:125px;top:344px;width:34px;height:17px;background:#2e3092"></div>
<div class="t" style="left:42px;top:347px;font-size:11px;color:#5a5785">6:7</div>
<div class="t" style="left:164px;top:347px;font-size:11px;color:#111">Навантаження від стін</div>
<div class="a" style="left:20px;top:360px;width:1188px;height:1px;background:#fafafa"></div>
<div class="a" style="left:40px;top:361px;width:1168px;height:17px;background:#f8f8fd"></div>
<div class="a" style="left:24px;top:363px;width:13px;height:13px"><svg width="13" height="13" viewBox="0 0 13 13"><rect x="0" y="0" width="13" height="13" rx="3" fill="#0b5cc2"/><path d="M3.2 6.8 L5.4 9 L9.8 4.2" stroke="#fff" stroke-width="1" fill="none"/></svg></div>
<div class="a" style="left:125px;top:361px;width:34px;height:17px;background:#00ffff"></div>
<div class="t" style="left:42px;top:364px;font-size:11px;color:#5a5785">7:9</div>
<div class="t" style="left:164px;top:364px;font-size:11px;color:#111">Сніг</div>
<div class="a" style="left:20px;top:377px;width:1188px;height:1px;background:#fafafa"></div>
<div class="a" style="left:40px;top:378px;width:1168px;height:17px;background:#e9edf1"></div>
<div class="a" style="left:24px;top:380px;width:13px;height:13px"><svg width="13" height="13" viewBox="0 0 13 13"><rect x="0" y="0" width="13" height="13" rx="3" fill="#0b5cc2"/><path d="M3.2 6.8 L5.4 9 L9.8 4.2" stroke="#fff" stroke-width="1" fill="none"/></svg></div>
<div class="a" style="left:125px;top:378px;width:34px;height:17px;background:#802000"></div>
<div class="t" style="left:42px;top:381px;font-size:11px;color:#5a5785">8:10</div>
<div class="t" style="left:164px;top:381px;font-size:11px;color:#111">Підпор грунту</div>
<div class="a" style="left:20px;top:394px;width:1188px;height:1px;background:#fafafa"></div>
<div class="a" style="left:40px;top:395px;width:1168px;height:17px;background:#f8f8fd"></div>
<div class="a" style="left:24px;top:397px;width:13px;height:13px"><svg width="13" height="13" viewBox="0 0 13 13"><rect x="0" y="0" width="13" height="13" rx="3" fill="#0b5cc2"/><path d="M3.2 6.8 L5.4 9 L9.8 4.2" stroke="#fff" stroke-width="1" fill="none"/></svg></div>
<div class="a" style="left:125px;top:395px;width:34px;height:17px;background:#2e3092"></div>
<div class="t" style="left:42px;top:398px;font-size:11px;color:#5a5785">9:11</div>
<div class="t" style="left:164px;top:398px;font-size:11px;color:#111">Вітер 0</div>
<div class="a" style="left:20px;top:411px;width:1188px;height:1px;background:#fafafa"></div>
<div class="a" style="left:40px;top:412px;width:1168px;height:17px;background:#e9edf1"></div>
<div class="a" style="left:24px;top:414px;width:13px;height:13px"><svg width="13" height="13" viewBox="0 0 13 13"><rect x="0" y="0" width="13" height="13" rx="3" fill="#0b5cc2"/><path d="M3.2 6.8 L5.4 9 L9.8 4.2" stroke="#fff" stroke-width="1" fill="none"/></svg></div>
<div class="a" style="left:125px;top:412px;width:34px;height:17px;background:#2e3092"></div>
<div class="t" style="left:42px;top:415px;font-size:11px;color:#5a5785">10:12</div>
<div class="t" style="left:164px;top:415px;font-size:11px;color:#111">Вітер 0 (пульсаційний)</div>
<div class="a" style="left:20px;top:428px;width:1188px;height:1px;background:#fafafa"></div>
<div class="a" style="left:40px;top:429px;width:1168px;height:17px;background:#f8f8fd"></div>
<div class="a" style="left:24px;top:431px;width:13px;height:13px"><svg width="13" height="13" viewBox="0 0 13 13"><rect x="0" y="0" width="13" height="13" rx="3" fill="#0b5cc2"/><path d="M3.2 6.8 L5.4 9 L9.8 4.2" stroke="#fff" stroke-width="1" fill="none"/></svg></div>
<div class="a" style="left:125px;top:429px;width:34px;height:17px;background:#2e3092"></div>
<div class="t" style="left:42px;top:432px;font-size:11px;color:#5a5785">11:13</div>
<div class="t" style="left:164px;top:432px;font-size:11px;color:#111">Вітер 90</div>
<div class="a" style="left:20px;top:445px;width:1188px;height:1px;background:#fafafa"></div>
<div class="a" style="left:40px;top:446px;width:1168px;height:17px;background:#e9edf1"></div>
<div class="a" style="left:24px;top:448px;width:13px;height:13px"><svg width="13" height="13" viewBox="0 0 13 13"><rect x="0" y="0" width="13" height="13" rx="3" fill="#0b5cc2"/><path d="M3.2 6.8 L5.4 9 L9.8 4.2" stroke="#fff" stroke-width="1" fill="none"/></svg></div>
<div class="a" style="left:125px;top:446px;width:34px;height:17px;background:#2e3092"></div>
<div class="t" style="left:42px;top:449px;font-size:11px;color:#5a5785">12:14</div>
<div class="t" style="left:164px;top:449px;font-size:11px;color:#111">Вітер 90 (пульсаційний)</div>
<div class="a" style="left:20px;top:462px;width:1188px;height:1px;background:#fafafa"></div>
<div class="a" style="left:40px;top:463px;width:1168px;height:17px;background:#f8f8fd"></div>
<div class="a" style="left:24px;top:465px;width:13px;height:13px"><svg width="13" height="13" viewBox="0 0 13 13"><rect x="0" y="0" width="13" height="13" rx="3" fill="#0b5cc2"/><path d="M3.2 6.8 L5.4 9 L9.8 4.2" stroke="#fff" stroke-width="1" fill="none"/></svg></div>
<div class="a" style="left:125px;top:463px;width:34px;height:17px;background:#2e3092"></div>
<div class="t" style="left:42px;top:466px;font-size:11px;color:#5a5785">13:15</div>
<div class="t" style="left:164px;top:466px;font-size:11px;color:#111">Сейсміка 0</div>
<div class="a" style="left:20px;top:479px;width:1188px;height:1px;background:#fafafa"></div>
<div class="a" style="left:40px;top:480px;width:1168px;height:17px;background:#e9edf1"></div>
<div class="a" style="left:24px;top:482px;width:13px;height:13px"><svg width="13" height="13" viewBox="0 0 13 13"><rect x="0" y="0" width="13" height="13" rx="3" fill="#0b5cc2"/><path d="M3.2 6.8 L5.4 9 L9.8 4.2" stroke="#fff" stroke-width="1" fill="none"/></svg></div>
<div class="a" style="left:125px;top:480px;width:34px;height:17px;background:#2e3092"></div>
<div class="t" style="left:42px;top:483px;font-size:11px;color:#5a5785">14:16</div>
<div class="t" style="left:164px;top:483px;font-size:11px;color:#111">Сейсміка 0*</div>
<div class="a" style="left:20px;top:496px;width:1188px;height:1px;background:#fafafa"></div>
<div class="a" style="left:40px;top:497px;width:1168px;height:17px;background:#f8f8fd"></div>
<div class="a" style="left:24px;top:499px;width:13px;height:13px"><svg width="13" height="13" viewBox="0 0 13 13"><rect x="0" y="0" width="13" height="13" rx="3" fill="#0b5cc2"/><path d="M3.2 6.8 L5.4 9 L9.8 4.2" stroke="#fff" stroke-width="1" fill="none"/></svg></div>
<div class="a" style="left:125px;top:497px;width:34px;height:17px;background:#2e3092"></div>
<div class="t" style="left:42px;top:500px;font-size:11px;color:#5a5785">15:17</div>
<div class="t" style="left:164px;top:500px;font-size:11px;color:#111">Сейсмика 0</div>
<div class="a" style="left:20px;top:513px;width:1188px;height:1px;background:#fafafa"></div>
<div class="a" style="left:40px;top:514px;width:1168px;height:17px;background:#e9edf1"></div>
<div class="a" style="left:24px;top:516px;width:13px;height:13px"><svg width="13" height="13" viewBox="0 0 13 13"><rect x="0" y="0" width="13" height="13" rx="3" fill="#0b5cc2"/><path d="M3.2 6.8 L5.4 9 L9.8 4.2" stroke="#fff" stroke-width="1" fill="none"/></svg></div>
<div class="a" style="left:125px;top:514px;width:34px;height:17px;background:#2e3092"></div>
<div class="t" style="left:42px;top:517px;font-size:11px;color:#5a5785">16:18</div>
<div class="t" style="left:164px;top:517px;font-size:11px;color:#111">Сейсмика 0*</div>
<div class="a" style="left:20px;top:530px;width:1188px;height:1px;background:#fafafa"></div>
<div class="a" style="left:40px;top:531px;width:1168px;height:17px;background:#f8f8fd"></div>
<div class="a" style="left:24px;top:533px;width:13px;height:13px"><svg width="13" height="13" viewBox="0 0 13 13"><rect x="0.5" y="0.5" width="12" height="12" rx="2.5" fill="#f9f9f9" stroke="#5a5a5a" stroke-width="1"/></svg></div>
<div class="t" style="left:42px;top:534px;font-size:11px;color:#5a5785">17</div>
<div class="t" style="left:164px;top:534px;font-size:11px;color:#111">&lt;Створити нове завантаження&gt;</div>
<div class="a" style="left:20px;top:547px;width:1188px;height:1px;background:#fafafa"></div>
<div class="a" style="left:40px;top:548px;width:1168px;height:17px;background:#e9edf1"></div>
<div class="a" style="left:20px;top:548px;width:20px;height:17px;background:#fff"></div>
<div class="a" style="left:24px;top:550px;width:13px;height:13px"><svg width="13" height="13" viewBox="0 0 13 13"><rect x="0.5" y="0.5" width="12" height="12" rx="2.5" fill="#f9f9f9" stroke="#5a5a5a" stroke-width="1"/></svg></div>
<div class="t" style="left:42px;top:551px;font-size:11px;color:#5a5785"></div>
<div class="t" style="left:164px;top:551px;font-size:11px;color:#111"></div>
<div class="a" style="left:20px;top:564px;width:1188px;height:1px;background:#fafafa"></div>
<div class="a" style="left:20px;top:564px;width:1188px;height:1px;background:#ececec"></div>
<div class="a" style="left:20px;top:581px;width:1188px;height:1px;background:#ececec"></div>
<div class="a" style="left:20px;top:598px;width:1188px;height:1px;background:#ececec"></div>
<div class="a" style="left:20px;top:615px;width:1188px;height:1px;background:#ececec"></div>
<div class="a" style="left:123px;top:564px;width:1px;height:58px;background:#ececec"></div>
<div class="a" style="left:158px;top:564px;width:1px;height:58px;background:#ececec"></div>
<div class="a" style="left:19px;top:622px;width:1189px;height:19px;background:#f0f0f0"></div>
<div class="a" style="left:37px;top:631px;width:1172px;height:2px;background:#6e6e6e;border-radius:1px"></div>
<div class="a" style="left:18px;top:641px;width:1190px;height:1px;background:#6f7780"></div>
<div class="a" style="left:18px;top:647px;width:145px;height:25px;background:#f99a9a;border:1px solid #ef8a8a;border-radius:3px"></div>
<div class="t" style="left:-110.0px;top:653px;width:400px;text-align:center;font-size:11px;color:#4a1010">Правила сполучень...</div>
<div class="a" style="left:170px;top:647px;width:30px;height:26px;background:#f3f3f3;border:1px solid #d0d0d0;border-bottom:1px solid #aaa;border-right:1px solid #aaa"></div>
<div class="a" style="left:206px;top:647px;width:30px;height:26px;background:#f3f3f3;border:1px solid #d0d0d0;border-bottom:1px solid #aaa;border-right:1px solid #aaa"></div>
<div class="a" style="left:242px;top:647px;width:30px;height:26px;background:#f3f3f3;border:1px solid #d0d0d0;border-bottom:1px solid #aaa;border-right:1px solid #aaa"></div>
<div class="a" style="left:278px;top:647px;width:30px;height:26px;background:#f3f3f3;border:1px solid #d0d0d0;border-bottom:1px solid #aaa;border-right:1px solid #aaa"></div>
<svg class="a" style="left:178px;top:653px;" width="14" height="14" viewBox="0 0 14 14"><path d="M7 0 L13 7 H9.5 V13 H4.5 V7 H1 Z" fill="#0a64f0"/></svg>
<svg class="a" style="left:214px;top:653px;" width="14" height="14" viewBox="0 0 14 14"><path d="M7 14 L13 7 H9.5 V1 H4.5 V7 H1 Z" fill="#0a64f0"/></svg>
<svg class="a" style="left:248px;top:651px;" width="18" height="17" viewBox="0 0 18 17"><path d="M2 2 C8 6 12 10 17 16 M16 1 C10 8 7 12 1 15" stroke="#0a64f0" stroke-width="2" fill="none"/></svg>
<svg class="a" style="left:283px;top:650px;" width="21" height="20" viewBox="0 0 21 20"><path d="M4 3 V19" stroke="#0a64f0" stroke-width="1.3"/><path d="M1.5 6 L4 0.5 L6.5 6 Z" fill="#0a64f0"/><path d="M9 2.5 H20 M9 10 H20 M9 17.5 H20" stroke="#2b2b52" stroke-width="2"/></svg>
<div class="a" style="left:313px;top:653px;width:13px;height:13px"><svg width="13" height="13" viewBox="0 0 13 13"><rect x="0.5" y="0.5" width="12" height="12" rx="2.5" fill="#f9f9f9" stroke="#5a5a5a" stroke-width="1"/></svg></div>
<div class="t" style="left:329px;top:653px;font-size:11px;color:#555">застосовувати</div>
<div class="a" style="left:400px;top:233px;width:1195px;height:745px;background:#f0f0f0;border:1px solid #8f8f8f;border-radius:8px 8px 0 7px;box-shadow:-3px 0 12px rgba(0,0,0,0.22)"></div>
<div class="a" style="left:401px;top:234px;width:1194px;height:31px;background:#f3f3f3;border-radius:8px 8px 0 0"></div>
<div class="t" style="left:410px;top:244px;font-size:11.8px;color:#8e8e8e">Правила сполучення навантажень</div>
<svg class="a" style="left:1574px;top:244px;" width="11" height="11" viewBox="0 0 11 11"><path d="M0.5 0.5 L10.5 10.5 M10.5 0.5 L0.5 10.5" stroke="#8a8a8a" stroke-width="1"/></svg>
<div class="a" style="left:413px;top:277px;width:30px;height:24px;background:linear-gradient(#f6f6f6,#ececec);border:1px solid #d6d6d6;border-right:1px solid #a8a8a8;border-bottom:1px solid #a8a8a8"></div>
<div class="a" style="left:450px;top:277px;width:30px;height:24px;background:linear-gradient(#f6f6f6,#ececec);border:1px solid #d6d6d6;border-right:1px solid #a8a8a8;border-bottom:1px solid #a8a8a8"></div>
<svg class="a" style="left:420px;top:282px;" width="16" height="13" viewBox="0 0 16 13"><path d="M0.5 1 H5 L6.5 2.5 H12 V4 H15.5 L13 12 H0.5 Z" fill="#33334d"/><path d="M2 12 L4 5 H15.5 L13 12 Z" fill="#e4e4ee" stroke="#33334d" stroke-width="0.8"/></svg>
<svg class="a" style="left:459px;top:283px;" width="13" height="13" viewBox="0 0 13 13"><rect x="0" y="0" width="13" height="13" rx="1" fill="#33334d"/><rect x="2.5" y="1.5" width="8" height="5" fill="#e6e6ee"/><rect x="3" y="8.5" width="7" height="4" fill="#e6e6ee"/><rect x="7" y="9.5" width="1.5" height="2" fill="#33334d"/></svg>
<div class="a" style="left:490px;top:276px;width:160px;height:25px;background:#f99393;border:1px solid #f18585;border-radius:2px"></div>
<div class="t" style="left:370.0px;top:282px;width:400px;text-align:center;font-size:11px;color:#5a1010">Нормативний документ:</div>
<div class="a" style="left:659px;top:277px;width:197px;height:22px;background:#f0f0f0;border:1px solid #dedede;border-bottom:1px solid #8a8a8a;border-radius:2px"></div>
<div class="t" style="left:664px;top:281px;font-size:11px;color:#111">СП РК EN 1990:2002+A1:2005/2011</div>
<div class="a" style="left:864px;top:277px;width:136px;height:22px;background:#f0f0f0;border:1px solid #dedede;border-bottom:1px solid #8a8a8a;border-radius:2px"></div>
<div class="t" style="left:868px;top:281px;font-size:11px;color:#111">РК</div>
<div class="a" style="left:1007px;top:277px;width:378px;height:22px;background:linear-gradient(90deg,#fff 85%,#f4f4f4);border:1px solid #e6e6e6;border-bottom:1px solid #8a8a8a;border-radius:2px"></div>
<div class="t" style="left:1011px;top:281px;font-size:11px;color:#111">група В (STR/GEO)</div>
<div class="a" style="left:1479px;top:277px;width:30px;height:24px;background:linear-gradient(#f4f4f4,#e2e2e2);border:1px solid #d8d8d8;border-right:1px solid #a8a8a8;border-bottom:1px solid #a8a8a8"></div>
<div class="a" style="left:1518px;top:277px;width:30px;height:24px;background:linear-gradient(#f4f4f4,#e2e2e2);border:1px solid #d8d8d8;border-right:1px solid #a8a8a8;border-bottom:1px solid #a8a8a8"></div>
<div class="a" style="left:1553px;top:277px;width:30px;height:24px;background:linear-gradient(#f4f4f4,#e2e2e2);border:1px solid #d8d8d8;border-right:1px solid #a8a8a8;border-bottom:1px solid #a8a8a8"></div>
<svg class="a" style="left:1486px;top:281px;" width="16" height="16" viewBox="0 0 16 16"><path d="M8 1 V15 M1 8 H15" stroke="#8a8a8a" stroke-width="3.2"/></svg>
<svg class="a" style="left:1522px;top:279px;" width="22" height="20" viewBox="0 0 22 20"><path d="M6 1 V11 M1 6 H11" stroke="#a0a0a0" stroke-width="2.4"/><path d="M14 8 V18 M9 13 H19" stroke="#8a8a8a" stroke-width="2.4"/></svg>
<svg class="a" style="left:1558px;top:281px;" width="20" height="18" viewBox="0 0 20 18"><path d="M1 3 C7 6 11 10 17 17 M17 1 C11 8 8 12 1 15" stroke="#909090" stroke-width="1.8" fill="none"/></svg>
<div class="a" style="left:412px;top:307px;width:1171px;height:419px;background:#fff;border:1px solid #6f7780;border-right:none"></div>
<div class="a" style="left:440px;top:309px;width:1px;height:24px;background:#e4e4e4"></div>
<div class="a" style="left:588px;top:309px;width:1px;height:24px;background:#e4e4e4"></div>
<div class="a" style="left:689px;top:309px;width:1px;height:24px;background:#e4e4e4"></div>
<div class="a" style="left:791px;top:309px;width:1px;height:24px;background:#e4e4e4"></div>
<div class="a" style="left:834px;top:309px;width:1px;height:24px;background:#e4e4e4"></div>
<div class="a" style="left:877px;top:309px;width:1px;height:24px;background:#e4e4e4"></div>
<div class="a" style="left:920px;top:309px;width:1px;height:24px;background:#e4e4e4"></div>
<div class="a" style="left:963px;top:309px;width:1px;height:24px;background:#e4e4e4"></div>
<div class="a" style="left:1006px;top:309px;width:1px;height:24px;background:#e4e4e4"></div>
<div class="a" style="left:1049px;top:309px;width:1px;height:24px;background:#e4e4e4"></div>
<div class="a" style="left:1092px;top:309px;width:1px;height:24px;background:#e4e4e4"></div>
<div class="a" style="left:1135px;top:309px;width:1px;height:24px;background:#e4e4e4"></div>
<div class="a" style="left:1178px;top:309px;width:1px;height:24px;background:#e4e4e4"></div>
<div class="a" style="left:1221px;top:309px;width:1px;height:24px;background:#e4e4e4"></div>
<div class="a" style="left:1264px;top:309px;width:1px;height:24px;background:#e4e4e4"></div>
<div class="a" style="left:1307px;top:309px;width:1px;height:24px;background:#e4e4e4"></div>
<div class="a" style="left:1350px;top:309px;width:1px;height:24px;background:#e4e4e4"></div>
<div class="a" style="left:1393px;top:309px;width:1px;height:24px;background:#e4e4e4"></div>
<div class="a" style="left:1436px;top:309px;width:1px;height:24px;background:#e4e4e4"></div>
<div class="a" style="left:1479px;top:309px;width:1px;height:24px;background:#e4e4e4"></div>
<div class="a" style="left:1522px;top:309px;width:1px;height:24px;background:#e4e4e4"></div>
<div class="a" style="left:1565px;top:309px;width:1px;height:24px;background:#e4e4e4"></div>
<div class="t" style="left:419px;top:314px;font-size:11px;color:#111">№</div>
<div class="t" style="left:444px;top:314px;font-size:11px;color:#111">Вид завантаження</div>
<div class="t" style="left:594px;top:314px;font-size:11px;color:#111">Підвид</div>
<div class="t" style="left:690.0px;top:314px;width:100px;text-align:center;font-size:11px;color:#111">Коеф.безпеки</div>
<div class="t" style="left:762.5px;top:314px;width:100px;text-align:center;font-size:11px;color:#111">ɣmin</div>
<div class="t" style="left:805.5px;top:314px;width:100px;text-align:center;font-size:11px;color:#111">ɣs</div>
<div class="t" style="left:848.5px;top:314px;width:100px;text-align:center;font-size:11px;color:#111">ɣa</div>
<div class="t" style="left:891.5px;top:314px;width:100px;text-align:center;font-size:11px;color:#111">Ψ 0,1</div>
<div class="t" style="left:934.5px;top:314px;width:100px;text-align:center;font-size:11px;color:#111">Ψ 0,2</div>
<div class="t" style="left:977.5px;top:314px;width:100px;text-align:center;font-size:11px;color:#111">Ψ 0,3</div>
<div class="t" style="left:1020.5px;top:314px;width:100px;text-align:center;font-size:11px;color:#111">Ψ 0,n</div>
<div class="t" style="left:1063.5px;top:314px;width:100px;text-align:center;font-size:11px;color:#111">Ψ 1</div>
<div class="t" style="left:1106.5px;top:314px;width:100px;text-align:center;font-size:11px;color:#111">Ψ 2,1</div>
<div class="t" style="left:1149.5px;top:314px;width:100px;text-align:center;font-size:11px;color:#111">Ψ 2,n</div>
<div class="a" style="left:413px;top:333px;width:1170px;height:17px;background:#fefeec"></div>
<div class="a" style="left:588px;top:333px;width:995px;height:17px;background:#fefcbe"></div>
<div class="a" style="left:413px;top:349px;width:1170px;height:1px;background:#ededed"></div>
<div class="a" style="left:441px;top:333px;width:1px;height:17px;background:#efefef"></div>
<div class="a" style="left:589px;top:333px;width:1px;height:17px;background:#efefef"></div>
<div class="a" style="left:690px;top:333px;width:1px;height:17px;background:#efefef"></div>
<div class="a" style="left:792px;top:333px;width:1px;height:17px;background:#efefef"></div>
<div class="a" style="left:835px;top:333px;width:1px;height:17px;background:#efefef"></div>
<div class="a" style="left:878px;top:333px;width:1px;height:17px;background:#efefef"></div>
<div class="a" style="left:921px;top:333px;width:1px;height:17px;background:#efefef"></div>
<div class="a" style="left:964px;top:333px;width:1px;height:17px;background:#efefef"></div>
<div class="a" style="left:1007px;top:333px;width:1px;height:17px;background:#efefef"></div>
<div class="a" style="left:1050px;top:333px;width:1px;height:17px;background:#efefef"></div>
<div class="a" style="left:1093px;top:333px;width:1px;height:17px;background:#efefef"></div>
<div class="a" style="left:1136px;top:333px;width:1px;height:17px;background:#efefef"></div>
<div class="a" style="left:1179px;top:333px;width:1px;height:17px;background:#efefef"></div>
<div class="a" style="left:1222px;top:333px;width:1px;height:17px;background:#efefef"></div>
<div class="a" style="left:1265px;top:333px;width:1px;height:17px;background:#efefef"></div>
<div class="a" style="left:1308px;top:333px;width:1px;height:17px;background:#efefef"></div>
<div class="a" style="left:1351px;top:333px;width:1px;height:17px;background:#efefef"></div>
<div class="a" style="left:1394px;top:333px;width:1px;height:17px;background:#efefef"></div>
<div class="a" style="left:1437px;top:333px;width:1px;height:17px;background:#efefef"></div>
<div class="a" style="left:1480px;top:333px;width:1px;height:17px;background:#efefef"></div>
<div class="a" style="left:1523px;top:333px;width:1px;height:17px;background:#efefef"></div>
<div class="a" style="left:1566px;top:333px;width:1px;height:17px;background:#efefef"></div>
<div class="t" style="left:419px;top:336px;font-size:11px;color:#111">1</div>
<div class="t" style="left:444px;top:336px;font-size:11px;color:#111">Постоянное, G</div>
<div class="t" style="left:594px;top:336px;font-size:11px;color:#111"></div>
<div class="t" style="left:690.0px;top:336px;width:100px;text-align:center;font-size:11px;color:#111">1.35</div>
<div class="t" style="left:762.5px;top:336px;width:100px;text-align:center;font-size:11px;color:#111">1</div>
<div class="a" style="left:413px;top:350px;width:1170px;height:17px;background:#fdf3e6"></div>
<div class="a" style="left:588px;top:350px;width:995px;height:17px;background:#bffdbf"></div>
<div class="a" style="left:413px;top:366px;width:1170px;height:1px;background:#ededed"></div>
<div class="a" style="left:441px;top:350px;width:1px;height:17px;background:#efefef"></div>
<div class="a" style="left:589px;top:350px;width:1px;height:17px;background:#efefef"></div>
<div class="a" style="left:690px;top:350px;width:1px;height:17px;background:#efefef"></div>
<div class="a" style="left:792px;top:350px;width:1px;height:17px;background:#efefef"></div>
<div class="a" style="left:835px;top:350px;width:1px;height:17px;background:#efefef"></div>
<div class="a" style="left:878px;top:350px;width:1px;height:17px;background:#efefef"></div>
<div class="a" style="left:921px;top:350px;width:1px;height:17px;background:#efefef"></div>
<div class="a" style="left:964px;top:350px;width:1px;height:17px;background:#efefef"></div>
<div class="a" style="left:1007px;top:350px;width:1px;height:17px;background:#efefef"></div>
<div class="a" style="left:1050px;top:350px;width:1px;height:17px;background:#efefef"></div>
<div class="a" style="left:1093px;top:350px;width:1px;height:17px;background:#efefef"></div>
<div class="a" style="left:1136px;top:350px;width:1px;height:17px;background:#efefef"></div>
<div class="a" style="left:1179px;top:350px;width:1px;height:17px;background:#efefef"></div>
<div class="a" style="left:1222px;top:350px;width:1px;height:17px;background:#efefef"></div>
<div class="a" style="left:1265px;top:350px;width:1px;height:17px;background:#efefef"></div>
<div class="a" style="left:1308px;top:350px;width:1px;height:17px;background:#efefef"></div>
<div class="a" style="left:1351px;top:350px;width:1px;height:17px;background:#efefef"></div>
<div class="a" style="left:1394px;top:350px;width:1px;height:17px;background:#efefef"></div>
<div class="a" style="left:1437px;top:350px;width:1px;height:17px;background:#efefef"></div>
<div class="a" style="left:1480px;top:350px;width:1px;height:17px;background:#efefef"></div>
<div class="a" style="left:1523px;top:350px;width:1px;height:17px;background:#efefef"></div>
<div class="a" style="left:1566px;top:350px;width:1px;height:17px;background:#efefef"></div>
<div class="t" style="left:419px;top:353px;font-size:11px;color:#111">2</div>
<div class="t" style="left:444px;top:353px;font-size:11px;color:#111">Тимчасове, Q</div>
<div class="t" style="left:594px;top:353px;font-size:11px;color:#111">Category A</div>
<div class="t" style="left:690.0px;top:353px;width:100px;text-align:center;font-size:11px;color:#111">1.5</div>
<div class="t" style="left:762.5px;top:353px;width:100px;text-align:center;font-size:11px;color:#111">0</div>
<div class="t" style="left:891.5px;top:353px;width:100px;text-align:center;font-size:11px;color:#111">0.7</div>
<div class="t" style="left:1063.5px;top:353px;width:100px;text-align:center;font-size:11px;color:#111">0.5</div>
<div class="t" style="left:1106.5px;top:353px;width:100px;text-align:center;font-size:11px;color:#111">0.3</div>
<div class="a" style="left:413px;top:367px;width:1170px;height:17px;background:#fefeec"></div>
<div class="a" style="left:413px;top:383px;width:1170px;height:1px;background:#ededed"></div>
<div class="a" style="left:441px;top:367px;width:1px;height:17px;background:#efefef"></div>
<div class="a" style="left:589px;top:367px;width:1px;height:17px;background:#efefef"></div>
<div class="a" style="left:690px;top:367px;width:1px;height:17px;background:#efefef"></div>
<div class="a" style="left:792px;top:367px;width:1px;height:17px;background:#efefef"></div>
<div class="a" style="left:835px;top:367px;width:1px;height:17px;background:#efefef"></div>
<div class="a" style="left:878px;top:367px;width:1px;height:17px;background:#efefef"></div>
<div class="a" style="left:921px;top:367px;width:1px;height:17px;background:#efefef"></div>
<div class="a" style="left:964px;top:367px;width:1px;height:17px;background:#efefef"></div>
<div class="a" style="left:1007px;top:367px;width:1px;height:17px;background:#efefef"></div>
<div class="a" style="left:1050px;top:367px;width:1px;height:17px;background:#efefef"></div>
<div class="a" style="left:1093px;top:367px;width:1px;height:17px;background:#efefef"></div>
<div class="a" style="left:1136px;top:367px;width:1px;height:17px;background:#efefef"></div>
<div class="a" style="left:1179px;top:367px;width:1px;height:17px;background:#efefef"></div>
<div class="a" style="left:1222px;top:367px;width:1px;height:17px;background:#efefef"></div>
<div class="a" style="left:1265px;top:367px;width:1px;height:17px;background:#efefef"></div>
<div class="a" style="left:1308px;top:367px;width:1px;height:17px;background:#efefef"></div>
<div class="a" style="left:1351px;top:367px;width:1px;height:17px;background:#efefef"></div>
<div class="a" style="left:1394px;top:367px;width:1px;height:17px;background:#efefef"></div>
<div class="a" style="left:1437px;top:367px;width:1px;height:17px;background:#efefef"></div>
<div class="a" style="left:1480px;top:367px;width:1px;height:17px;background:#efefef"></div>
<div class="a" style="left:1523px;top:367px;width:1px;height:17px;background:#efefef"></div>
<div class="a" style="left:1566px;top:367px;width:1px;height:17px;background:#efefef"></div>
<div class="t" style="left:419px;top:370px;font-size:11px;color:#111">3</div>
<div class="t" style="left:444px;top:370px;font-size:11px;color:#111">Тимчасове, Q</div>
<div class="t" style="left:594px;top:370px;font-size:11px;color:#111">Category B</div>
<div class="t" style="left:690.0px;top:370px;width:100px;text-align:center;font-size:11px;color:#111">1.5</div>
<div class="t" style="left:762.5px;top:370px;width:100px;text-align:center;font-size:11px;color:#111">0</div>
<div class="t" style="left:891.5px;top:370px;width:100px;text-align:center;font-size:11px;color:#111">0.7</div>
<div class="t" style="left:1063.5px;top:370px;width:100px;text-align:center;font-size:11px;color:#111">0.5</div>
<div class="t" style="left:1106.5px;top:370px;width:100px;text-align:center;font-size:11px;color:#111">0.3</div>
<div class="a" style="left:413px;top:384px;width:1170px;height:17px;background:#fdf3e6"></div>
<div class="a" style="left:413px;top:400px;width:1170px;height:1px;background:#ededed"></div>
<div class="a" style="left:441px;top:384px;width:1px;height:17px;background:#efefef"></div>
<div class="a" style="left:589px;top:384px;width:1px;height:17px;background:#efefef"></div>
<div class="a" style="left:690px;top:384px;width:1px;height:17px;background:#efefef"></div>
<div class="a" style="left:792px;top:384px;width:1px;height:17px;background:#efefef"></div>
<div class="a" style="left:835px;top:384px;width:1px;height:17px;background:#efefef"></div>
<div class="a" style="left:878px;top:384px;width:1px;height:17px;background:#efefef"></div>
<div class="a" style="left:921px;top:384px;width:1px;height:17px;background:#efefef"></div>
<div class="a" style="left:964px;top:384px;width:1px;height:17px;background:#efefef"></div>
<div class="a" style="left:1007px;top:384px;width:1px;height:17px;background:#efefef"></div>
<div class="a" style="left:1050px;top:384px;width:1px;height:17px;background:#efefef"></div>
<div class="a" style="left:1093px;top:384px;width:1px;height:17px;background:#efefef"></div>
<div class="a" style="left:1136px;top:384px;width:1px;height:17px;background:#efefef"></div>
<div class="a" style="left:1179px;top:384px;width:1px;height:17px;background:#efefef"></div>
<div class="a" style="left:1222px;top:384px;width:1px;height:17px;background:#efefef"></div>
<div class="a" style="left:1265px;top:384px;width:1px;height:17px;background:#efefef"></div>
<div class="a" style="left:1308px;top:384px;width:1px;height:17px;background:#efefef"></div>
<div class="a" style="left:1351px;top:384px;width:1px;height:17px;background:#efefef"></div>
<div class="a" style="left:1394px;top:384px;width:1px;height:17px;background:#efefef"></div>
<div class="a" style="left:1437px;top:384px;width:1px;height:17px;background:#efefef"></div>
<div class="a" style="left:1480px;top:384px;width:1px;height:17px;background:#efefef"></div>
<div class="a" style="left:1523px;top:384px;width:1px;height:17px;background:#efefef"></div>
<div class="a" style="left:1566px;top:384px;width:1px;height:17px;background:#efefef"></div>
<div class="t" style="left:419px;top:387px;font-size:11px;color:#111">4</div>
<div class="t" style="left:444px;top:387px;font-size:11px;color:#111">Тимчасове, Q</div>
<div class="t" style="left:594px;top:387px;font-size:11px;color:#111">Category C</div>
<div class="t" style="left:690.0px;top:387px;width:100px;text-align:center;font-size:11px;color:#111">1.5</div>
<div class="t" style="left:762.5px;top:387px;width:100px;text-align:center;font-size:11px;color:#111">0</div>
<div class="t" style="left:891.5px;top:387px;width:100px;text-align:center;font-size:11px;color:#111">0.7</div>
<div class="t" style="left:1063.5px;top:387px;width:100px;text-align:center;font-size:11px;color:#111">0.7</div>
<div class="t" style="left:1106.5px;top:387px;width:100px;text-align:center;font-size:11px;color:#111">0.6</div>
<div class="a" style="left:413px;top:401px;width:1170px;height:17px;background:#fefeec"></div>
<div class="a" style="left:413px;top:417px;width:1170px;height:1px;background:#ededed"></div>
<div class="a" style="left:441px;top:401px;width:1px;height:17px;background:#efefef"></div>
<div class="a" style="left:589px;top:401px;width:1px;height:17px;background:#efefef"></div>
<div class="a" style="left:690px;top:401px;width:1px;height:17px;background:#efefef"></div>
<div class="a" style="left:792px;top:401px;width:1px;height:17px;background:#efefef"></div>
<div class="a" style="left:835px;top:401px;width:1px;height:17px;background:#efefef"></div>
<div class="a" style="left:878px;top:401px;width:1px;height:17px;background:#efefef"></div>
<div class="a" style="left:921px;top:401px;width:1px;height:17px;background:#efefef"></div>
<div class="a" style="left:964px;top:401px;width:1px;height:17px;background:#efefef"></div>
<div class="a" style="left:1007px;top:401px;width:1px;height:17px;background:#efefef"></div>
<div class="a" style="left:1050px;top:401px;width:1px;height:17px;background:#efefef"></div>
<div class="a" style="left:1093px;top:401px;width:1px;height:17px;background:#efefef"></div>
<div class="a" style="left:1136px;top:401px;width:1px;height:17px;background:#efefef"></div>
<div class="a" style="left:1179px;top:401px;width:1px;height:17px;background:#efefef"></div>
<div class="a" style="left:1222px;top:401px;width:1px;height:17px;background:#efefef"></div>
<div class="a" style="left:1265px;top:401px;width:1px;height:17px;background:#efefef"></div>
<div class="a" style="left:1308px;top:401px;width:1px;height:17px;background:#efefef"></div>
<div class="a" style="left:1351px;top:401px;width:1px;height:17px;background:#efefef"></div>
<div class="a" style="left:1394px;top:401px;width:1px;height:17px;background:#efefef"></div>
<div class="a" style="left:1437px;top:401px;width:1px;height:17px;background:#efefef"></div>
<div class="a" style="left:1480px;top:401px;width:1px;height:17px;background:#efefef"></div>
<div class="a" style="left:1523px;top:401px;width:1px;height:17px;background:#efefef"></div>
<div class="a" style="left:1566px;top:401px;width:1px;height:17px;background:#efefef"></div>
<div class="t" style="left:419px;top:404px;font-size:11px;color:#111">5</div>
<div class="t" style="left:444px;top:404px;font-size:11px;color:#111">Тимчасове, Q</div>
<div class="t" style="left:594px;top:404px;font-size:11px;color:#111">Category D</div>
<div class="t" style="left:690.0px;top:404px;width:100px;text-align:center;font-size:11px;color:#111">1.5</div>
<div class="t" style="left:762.5px;top:404px;width:100px;text-align:center;font-size:11px;color:#111">0</div>
<div class="t" style="left:891.5px;top:404px;width:100px;text-align:center;font-size:11px;color:#111">0.7</div>
<div class="t" style="left:1063.5px;top:404px;width:100px;text-align:center;font-size:11px;color:#111">0.7</div>
<div class="t" style="left:1106.5px;top:404px;width:100px;text-align:center;font-size:11px;color:#111">0.6</div>
<div class="a" style="left:413px;top:418px;width:1170px;height:17px;background:#fdf3e6"></div>
<div class="a" style="left:588px;top:418px;width:995px;height:17px;background:#bffdbf"></div>
<div class="a" style="left:413px;top:434px;width:1170px;height:1px;background:#ededed"></div>
<div class="a" style="left:441px;top:418px;width:1px;height:17px;background:#efefef"></div>
<div class="a" style="left:589px;top:418px;width:1px;height:17px;background:#efefef"></div>
<div class="a" style="left:690px;top:418px;width:1px;height:17px;background:#efefef"></div>
<div class="a" style="left:792px;top:418px;width:1px;height:17px;background:#efefef"></div>
<div class="a" style="left:835px;top:418px;width:1px;height:17px;background:#efefef"></div>
<div class="a" style="left:878px;top:418px;width:1px;height:17px;background:#efefef"></div>
<div class="a" style="left:921px;top:418px;width:1px;height:17px;background:#efefef"></div>
<div class="a" style="left:964px;top:418px;width:1px;height:17px;background:#efefef"></div>
<div class="a" style="left:1007px;top:418px;width:1px;height:17px;background:#efefef"></div>
<div class="a" style="left:1050px;top:418px;width:1px;height:17px;background:#efefef"></div>
<div class="a" style="left:1093px;top:418px;width:1px;height:17px;background:#efefef"></div>
<div class="a" style="left:1136px;top:418px;width:1px;height:17px;background:#efefef"></div>
<div class="a" style="left:1179px;top:418px;width:1px;height:17px;background:#efefef"></div>
<div class="a" style="left:1222px;top:418px;width:1px;height:17px;background:#efefef"></div>
<div class="a" style="left:1265px;top:418px;width:1px;height:17px;background:#efefef"></div>
<div class="a" style="left:1308px;top:418px;width:1px;height:17px;background:#efefef"></div>
<div class="a" style="left:1351px;top:418px;width:1px;height:17px;background:#efefef"></div>
<div class="a" style="left:1394px;top:418px;width:1px;height:17px;background:#efefef"></div>
<div class="a" style="left:1437px;top:418px;width:1px;height:17px;background:#efefef"></div>
<div class="a" style="left:1480px;top:418px;width:1px;height:17px;background:#efefef"></div>
<div class="a" style="left:1523px;top:418px;width:1px;height:17px;background:#efefef"></div>
<div class="a" style="left:1566px;top:418px;width:1px;height:17px;background:#efefef"></div>
<div class="t" style="left:419px;top:421px;font-size:11px;color:#111">6</div>
<div class="t" style="left:444px;top:421px;font-size:11px;color:#111">Тимчасове, Q</div>
<div class="t" style="left:594px;top:421px;font-size:11px;color:#111">Category E</div>
<div class="t" style="left:690.0px;top:421px;width:100px;text-align:center;font-size:11px;color:#111">1.5</div>
<div class="t" style="left:762.5px;top:421px;width:100px;text-align:center;font-size:11px;color:#111">0</div>
<div class="t" style="left:891.5px;top:421px;width:100px;text-align:center;font-size:11px;color:#111">1</div>
<div class="t" style="left:1063.5px;top:421px;width:100px;text-align:center;font-size:11px;color:#111">0.9</div>
<div class="t" style="left:1106.5px;top:421px;width:100px;text-align:center;font-size:11px;color:#111">0.8</div>
<div class="a" style="left:413px;top:435px;width:1170px;height:17px;background:#fefeec"></div>
<div class="a" style="left:413px;top:451px;width:1170px;height:1px;background:#ededed"></div>
<div class="a" style="left:441px;top:435px;width:1px;height:17px;background:#efefef"></div>
<div class="a" style="left:589px;top:435px;width:1px;height:17px;background:#efefef"></div>
<div class="a" style="left:690px;top:435px;width:1px;height:17px;background:#efefef"></div>
<div class="a" style="left:792px;top:435px;width:1px;height:17px;background:#efefef"></div>
<div class="a" style="left:835px;top:435px;width:1px;height:17px;background:#efefef"></div>
<div class="a" style="left:878px;top:435px;width:1px;height:17px;background:#efefef"></div>
<div class="a" style="left:921px;top:435px;width:1px;height:17px;background:#efefef"></div>
<div class="a" style="left:964px;top:435px;width:1px;height:17px;background:#efefef"></div>
<div class="a" style="left:1007px;top:435px;width:1px;height:17px;background:#efefef"></div>
<div class="a" style="left:1050px;top:435px;width:1px;height:17px;background:#efefef"></div>
<div class="a" style="left:1093px;top:435px;width:1px;height:17px;background:#efefef"></div>
<div class="a" style="left:1136px;top:435px;width:1px;height:17px;background:#efefef"></div>
<div class="a" style="left:1179px;top:435px;width:1px;height:17px;background:#efefef"></div>
<div class="a" style="left:1222px;top:435px;width:1px;height:17px;background:#efefef"></div>
<div class="a" style="left:1265px;top:435px;width:1px;height:17px;background:#efefef"></div>
<div class="a" style="left:1308px;top:435px;width:1px;height:17px;background:#efefef"></div>
<div class="a" style="left:1351px;top:435px;width:1px;height:17px;background:#efefef"></div>
<div class="a" style="left:1394px;top:435px;width:1px;height:17px;background:#efefef"></div>
<div class="a" style="left:1437px;top:435px;width:1px;height:17px;background:#efefef"></div>
<div class="a" style="left:1480px;top:435px;width:1px;height:17px;background:#efefef"></div>
<div class="a" style="left:1523px;top:435px;width:1px;height:17px;background:#efefef"></div>
<div class="a" style="left:1566px;top:435px;width:1px;height:17px;background:#efefef"></div>
<div class="t" style="left:419px;top:438px;font-size:11px;color:#111">7</div>
<div class="t" style="left:444px;top:438px;font-size:11px;color:#111">Тимчасове, Q</div>
<div class="t" style="left:594px;top:438px;font-size:11px;color:#111">Category F</div>
<div class="t" style="left:690.0px;top:438px;width:100px;text-align:center;font-size:11px;color:#111">1.5</div>
<div class="t" style="left:762.5px;top:438px;width:100px;text-align:center;font-size:11px;color:#111">0</div>
<div class="t" style="left:891.5px;top:438px;width:100px;text-align:center;font-size:11px;color:#111">0.7</div>
<div class="t" style="left:1063.5px;top:438px;width:100px;text-align:center;font-size:11px;color:#111">0.7</div>
<div class="t" style="left:1106.5px;top:438px;width:100px;text-align:center;font-size:11px;color:#111">0.6</div>
<div class="a" style="left:413px;top:452px;width:1170px;height:17px;background:#fdf3e6"></div>
<div class="a" style="left:413px;top:468px;width:1170px;height:1px;background:#ededed"></div>
<div class="a" style="left:441px;top:452px;width:1px;height:17px;background:#efefef"></div>
<div class="a" style="left:589px;top:452px;width:1px;height:17px;background:#efefef"></div>
<div class="a" style="left:690px;top:452px;width:1px;height:17px;background:#efefef"></div>
<div class="a" style="left:792px;top:452px;width:1px;height:17px;background:#efefef"></div>
<div class="a" style="left:835px;top:452px;width:1px;height:17px;background:#efefef"></div>
<div class="a" style="left:878px;top:452px;width:1px;height:17px;background:#efefef"></div>
<div class="a" style="left:921px;top:452px;width:1px;height:17px;background:#efefef"></div>
<div class="a" style="left:964px;top:452px;width:1px;height:17px;background:#efefef"></div>
<div class="a" style="left:1007px;top:452px;width:1px;height:17px;background:#efefef"></div>
<div class="a" style="left:1050px;top:452px;width:1px;height:17px;background:#efefef"></div>
<div class="a" style="left:1093px;top:452px;width:1px;height:17px;background:#efefef"></div>
<div class="a" style="left:1136px;top:452px;width:1px;height:17px;background:#efefef"></div>
<div class="a" style="left:1179px;top:452px;width:1px;height:17px;background:#efefef"></div>
<div class="a" style="left:1222px;top:452px;width:1px;height:17px;background:#efefef"></div>
<div class="a" style="left:1265px;top:452px;width:1px;height:17px;background:#efefef"></div>
<div class="a" style="left:1308px;top:452px;width:1px;height:17px;background:#efefef"></div>
<div class="a" style="left:1351px;top:452px;width:1px;height:17px;background:#efefef"></div>
<div class="a" style="left:1394px;top:452px;width:1px;height:17px;background:#efefef"></div>
<div class="a" style="left:1437px;top:452px;width:1px;height:17px;background:#efefef"></div>
<div class="a" style="left:1480px;top:452px;width:1px;height:17px;background:#efefef"></div>
<div class="a" style="left:1523px;top:452px;width:1px;height:17px;background:#efefef"></div>
<div class="a" style="left:1566px;top:452px;width:1px;height:17px;background:#efefef"></div>
<div class="t" style="left:419px;top:455px;font-size:11px;color:#111">8</div>
<div class="t" style="left:444px;top:455px;font-size:11px;color:#111">Тимчасове, Q</div>
<div class="t" style="left:594px;top:455px;font-size:11px;color:#111">Category G</div>
<div class="t" style="left:690.0px;top:455px;width:100px;text-align:center;font-size:11px;color:#111">1.5</div>
<div class="t" style="left:762.5px;top:455px;width:100px;text-align:center;font-size:11px;color:#111">0</div>
<div class="t" style="left:891.5px;top:455px;width:100px;text-align:center;font-size:11px;color:#111">0.7</div>
<div class="t" style="left:1063.5px;top:455px;width:100px;text-align:center;font-size:11px;color:#111">0.5</div>
<div class="t" style="left:1106.5px;top:455px;width:100px;text-align:center;font-size:11px;color:#111">0.3</div>
<div class="a" style="left:413px;top:469px;width:1170px;height:17px;background:#fefeec"></div>
<div class="a" style="left:413px;top:485px;width:1170px;height:1px;background:#ededed"></div>
<div class="a" style="left:441px;top:469px;width:1px;height:17px;background:#efefef"></div>
<div class="a" style="left:589px;top:469px;width:1px;height:17px;background:#efefef"></div>
<div class="a" style="left:690px;top:469px;width:1px;height:17px;background:#efefef"></div>
<div class="a" style="left:792px;top:469px;width:1px;height:17px;background:#efefef"></div>
<div class="a" style="left:835px;top:469px;width:1px;height:17px;background:#efefef"></div>
<div class="a" style="left:878px;top:469px;width:1px;height:17px;background:#efefef"></div>
<div class="a" style="left:921px;top:469px;width:1px;height:17px;background:#efefef"></div>
<div class="a" style="left:964px;top:469px;width:1px;height:17px;background:#efefef"></div>
<div class="a" style="left:1007px;top:469px;width:1px;height:17px;background:#efefef"></div>
<div class="a" style="left:1050px;top:469px;width:1px;height:17px;background:#efefef"></div>
<div class="a" style="left:1093px;top:469px;width:1px;height:17px;background:#efefef"></div>
<div class="a" style="left:1136px;top:469px;width:1px;height:17px;background:#efefef"></div>
<div class="a" style="left:1179px;top:469px;width:1px;height:17px;background:#efefef"></div>
<div class="a" style="left:1222px;top:469px;width:1px;height:17px;background:#efefef"></div>
<div class="a" style="left:1265px;top:469px;width:1px;height:17px;background:#efefef"></div>
<div class="a" style="left:1308px;top:469px;width:1px;height:17px;background:#efefef"></div>
<div class="a" style="left:1351px;top:469px;width:1px;height:17px;background:#efefef"></div>
<div class="a" style="left:1394px;top:469px;width:1px;height:17px;background:#efefef"></div>
<div class="a" style="left:1437px;top:469px;width:1px;height:17px;background:#efefef"></div>
<div class="a" style="left:1480px;top:469px;width:1px;height:17px;background:#efefef"></div>
<div class="a" style="left:1523px;top:469px;width:1px;height:17px;background:#efefef"></div>
<div class="a" style="left:1566px;top:469px;width:1px;height:17px;background:#efefef"></div>
<div class="t" style="left:419px;top:472px;font-size:11px;color:#111">9</div>
<div class="t" style="left:444px;top:472px;font-size:11px;color:#111">Тимчасове, Q</div>
<div class="t" style="left:594px;top:472px;font-size:11px;color:#111">Category H</div>
<div class="t" style="left:690.0px;top:472px;width:100px;text-align:center;font-size:11px;color:#111">1.5</div>
<div class="t" style="left:762.5px;top:472px;width:100px;text-align:center;font-size:11px;color:#111">0</div>
<div class="t" style="left:891.5px;top:472px;width:100px;text-align:center;font-size:11px;color:#111">0.7</div>
<div class="t" style="left:1063.5px;top:472px;width:100px;text-align:center;font-size:11px;color:#111">0</div>
<div class="t" style="left:1106.5px;top:472px;width:100px;text-align:center;font-size:11px;color:#111">0</div>
<div class="a" style="left:413px;top:486px;width:1170px;height:17px;background:#fdf3e6"></div>
<div class="a" style="left:413px;top:502px;width:1170px;height:1px;background:#ededed"></div>
<div class="a" style="left:441px;top:486px;width:1px;height:17px;background:#efefef"></div>
<div class="a" style="left:589px;top:486px;width:1px;height:17px;background:#efefef"></div>
<div class="a" style="left:690px;top:486px;width:1px;height:17px;background:#efefef"></div>
<div class="a" style="left:792px;top:486px;width:1px;height:17px;background:#efefef"></div>
<div class="a" style="left:835px;top:486px;width:1px;height:17px;background:#efefef"></div>
<div class="a" style="left:878px;top:486px;width:1px;height:17px;background:#efefef"></div>
<div class="a" style="left:921px;top:486px;width:1px;height:17px;background:#efefef"></div>
<div class="a" style="left:964px;top:486px;width:1px;height:17px;background:#efefef"></div>
<div class="a" style="left:1007px;top:486px;width:1px;height:17px;background:#efefef"></div>
<div class="a" style="left:1050px;top:486px;width:1px;height:17px;background:#efefef"></div>
<div class="a" style="left:1093px;top:486px;width:1px;height:17px;background:#efefef"></div>
<div class="a" style="left:1136px;top:486px;width:1px;height:17px;background:#efefef"></div>
<div class="a" style="left:1179px;top:486px;width:1px;height:17px;background:#efefef"></div>
<div class="a" style="left:1222px;top:486px;width:1px;height:17px;background:#efefef"></div>
<div class="a" style="left:1265px;top:486px;width:1px;height:17px;background:#efefef"></div>
<div class="a" style="left:1308px;top:486px;width:1px;height:17px;background:#efefef"></div>
<div class="a" style="left:1351px;top:486px;width:1px;height:17px;background:#efefef"></div>
<div class="a" style="left:1394px;top:486px;width:1px;height:17px;background:#efefef"></div>
<div class="a" style="left:1437px;top:486px;width:1px;height:17px;background:#efefef"></div>
<div class="a" style="left:1480px;top:486px;width:1px;height:17px;background:#efefef"></div>
<div class="a" style="left:1523px;top:486px;width:1px;height:17px;background:#efefef"></div>
<div class="a" style="left:1566px;top:486px;width:1px;height:17px;background:#efefef"></div>
<div class="t" style="left:419px;top:489px;font-size:11px;color:#111">10</div>
<div class="t" style="left:444px;top:489px;font-size:11px;color:#111">Тимчасове, Q</div>
<div class="t" style="left:594px;top:489px;font-size:11px;color:#111">Температурное</div>
<div class="t" style="left:690.0px;top:489px;width:100px;text-align:center;font-size:11px;color:#111">1.5</div>
<div class="t" style="left:762.5px;top:489px;width:100px;text-align:center;font-size:11px;color:#111">0</div>
<div class="t" style="left:891.5px;top:489px;width:100px;text-align:center;font-size:11px;color:#111">0.6</div>
<div class="t" style="left:1063.5px;top:489px;width:100px;text-align:center;font-size:11px;color:#111">0.5</div>
<div class="t" style="left:1106.5px;top:489px;width:100px;text-align:center;font-size:11px;color:#111">0</div>
<div class="a" style="left:413px;top:503px;width:1170px;height:17px;background:#fefeec"></div>
<div class="a" style="left:588px;top:503px;width:995px;height:17px;background:#bffdbf"></div>
<div class="a" style="left:413px;top:519px;width:1170px;height:1px;background:#ededed"></div>
<div class="a" style="left:441px;top:503px;width:1px;height:17px;background:#efefef"></div>
<div class="a" style="left:589px;top:503px;width:1px;height:17px;background:#efefef"></div>
<div class="a" style="left:690px;top:503px;width:1px;height:17px;background:#efefef"></div>
<div class="a" style="left:792px;top:503px;width:1px;height:17px;background:#efefef"></div>
<div class="a" style="left:835px;top:503px;width:1px;height:17px;background:#efefef"></div>
<div class="a" style="left:878px;top:503px;width:1px;height:17px;background:#efefef"></div>
<div class="a" style="left:921px;top:503px;width:1px;height:17px;background:#efefef"></div>
<div class="a" style="left:964px;top:503px;width:1px;height:17px;background:#efefef"></div>
<div class="a" style="left:1007px;top:503px;width:1px;height:17px;background:#efefef"></div>
<div class="a" style="left:1050px;top:503px;width:1px;height:17px;background:#efefef"></div>
<div class="a" style="left:1093px;top:503px;width:1px;height:17px;background:#efefef"></div>
<div class="a" style="left:1136px;top:503px;width:1px;height:17px;background:#efefef"></div>
<div class="a" style="left:1179px;top:503px;width:1px;height:17px;background:#efefef"></div>
<div class="a" style="left:1222px;top:503px;width:1px;height:17px;background:#efefef"></div>
<div class="a" style="left:1265px;top:503px;width:1px;height:17px;background:#efefef"></div>
<div class="a" style="left:1308px;top:503px;width:1px;height:17px;background:#efefef"></div>
<div class="a" style="left:1351px;top:503px;width:1px;height:17px;background:#efefef"></div>
<div class="a" style="left:1394px;top:503px;width:1px;height:17px;background:#efefef"></div>
<div class="a" style="left:1437px;top:503px;width:1px;height:17px;background:#efefef"></div>
<div class="a" style="left:1480px;top:503px;width:1px;height:17px;background:#efefef"></div>
<div class="a" style="left:1523px;top:503px;width:1px;height:17px;background:#efefef"></div>
<div class="a" style="left:1566px;top:503px;width:1px;height:17px;background:#efefef"></div>
<div class="t" style="left:419px;top:506px;font-size:11px;color:#111">11</div>
<div class="t" style="left:444px;top:506px;font-size:11px;color:#111">Тимчасове, Q</div>
<div class="t" style="left:594px;top:506px;font-size:11px;color:#111">Сніг H&gt;1000м</div>
<div class="t" style="left:690.0px;top:506px;width:100px;text-align:center;font-size:11px;color:#111">1.5</div>
<div class="t" style="left:762.5px;top:506px;width:100px;text-align:center;font-size:11px;color:#111">0</div>
<div class="t" style="left:891.5px;top:506px;width:100px;text-align:center;font-size:11px;color:#111">0.7</div>
<div class="t" style="left:1063.5px;top:506px;width:100px;text-align:center;font-size:11px;color:#111">0.5</div>
<div class="t" style="left:1106.5px;top:506px;width:100px;text-align:center;font-size:11px;color:#111">0.2</div>
<div class="a" style="left:413px;top:520px;width:1170px;height:17px;background:#fdf3e6"></div>
<div class="a" style="left:413px;top:536px;width:1170px;height:1px;background:#ededed"></div>
<div class="a" style="left:441px;top:520px;width:1px;height:17px;background:#efefef"></div>
<div class="a" style="left:589px;top:520px;width:1px;height:17px;background:#efefef"></div>
<div class="a" style="left:690px;top:520px;width:1px;height:17px;background:#efefef"></div>
<div class="a" style="left:792px;top:520px;width:1px;height:17px;background:#efefef"></div>
<div class="a" style="left:835px;top:520px;width:1px;height:17px;background:#efefef"></div>
<div class="a" style="left:878px;top:520px;width:1px;height:17px;background:#efefef"></div>
<div class="a" style="left:921px;top:520px;width:1px;height:17px;background:#efefef"></div>
<div class="a" style="left:964px;top:520px;width:1px;height:17px;background:#efefef"></div>
<div class="a" style="left:1007px;top:520px;width:1px;height:17px;background:#efefef"></div>
<div class="a" style="left:1050px;top:520px;width:1px;height:17px;background:#efefef"></div>
<div class="a" style="left:1093px;top:520px;width:1px;height:17px;background:#efefef"></div>
<div class="a" style="left:1136px;top:520px;width:1px;height:17px;background:#efefef"></div>
<div class="a" style="left:1179px;top:520px;width:1px;height:17px;background:#efefef"></div>
<div class="a" style="left:1222px;top:520px;width:1px;height:17px;background:#efefef"></div>
<div class="a" style="left:1265px;top:520px;width:1px;height:17px;background:#efefef"></div>
<div class="a" style="left:1308px;top:520px;width:1px;height:17px;background:#efefef"></div>
<div class="a" style="left:1351px;top:520px;width:1px;height:17px;background:#efefef"></div>
<div class="a" style="left:1394px;top:520px;width:1px;height:17px;background:#efefef"></div>
<div class="a" style="left:1437px;top:520px;width:1px;height:17px;background:#efefef"></div>
<div class="a" style="left:1480px;top:520px;width:1px;height:17px;background:#efefef"></div>
<div class="a" style="left:1523px;top:520px;width:1px;height:17px;background:#efefef"></div>
<div class="a" style="left:1566px;top:520px;width:1px;height:17px;background:#efefef"></div>
<div class="t" style="left:419px;top:523px;font-size:11px;color:#111">12</div>
<div class="t" style="left:444px;top:523px;font-size:11px;color:#111">Тимчасове, Q</div>
<div class="t" style="left:594px;top:523px;font-size:11px;color:#111">Сніг H&lt;=1000м</div>
<div class="t" style="left:690.0px;top:523px;width:100px;text-align:center;font-size:11px;color:#111">1.5</div>
<div class="t" style="left:762.5px;top:523px;width:100px;text-align:center;font-size:11px;color:#111">0</div>
<div class="t" style="left:891.5px;top:523px;width:100px;text-align:center;font-size:11px;color:#111">0.5</div>
<div class="t" style="left:1063.5px;top:523px;width:100px;text-align:center;font-size:11px;color:#111">0.2</div>
<div class="t" style="left:1106.5px;top:523px;width:100px;text-align:center;font-size:11px;color:#111">0</div>
<div class="a" style="left:413px;top:537px;width:1170px;height:17px;background:#fefeec"></div>
<div class="a" style="left:413px;top:553px;width:1170px;height:1px;background:#ededed"></div>
<div class="a" style="left:441px;top:537px;width:1px;height:17px;background:#efefef"></div>
<div class="a" style="left:589px;top:537px;width:1px;height:17px;background:#efefef"></div>
<div class="a" style="left:690px;top:537px;width:1px;height:17px;background:#efefef"></div>
<div class="a" style="left:792px;top:537px;width:1px;height:17px;background:#efefef"></div>
<div class="a" style="left:835px;top:537px;width:1px;height:17px;background:#efefef"></div>
<div class="a" style="left:878px;top:537px;width:1px;height:17px;background:#efefef"></div>
<div class="a" style="left:921px;top:537px;width:1px;height:17px;background:#efefef"></div>
<div class="a" style="left:964px;top:537px;width:1px;height:17px;background:#efefef"></div>
<div class="a" style="left:1007px;top:537px;width:1px;height:17px;background:#efefef"></div>
<div class="a" style="left:1050px;top:537px;width:1px;height:17px;background:#efefef"></div>
<div class="a" style="left:1093px;top:537px;width:1px;height:17px;background:#efefef"></div>
<div class="a" style="left:1136px;top:537px;width:1px;height:17px;background:#efefef"></div>
<div class="a" style="left:1179px;top:537px;width:1px;height:17px;background:#efefef"></div>
<div class="a" style="left:1222px;top:537px;width:1px;height:17px;background:#efefef"></div>
<div class="a" style="left:1265px;top:537px;width:1px;height:17px;background:#efefef"></div>
<div class="a" style="left:1308px;top:537px;width:1px;height:17px;background:#efefef"></div>
<div class="a" style="left:1351px;top:537px;width:1px;height:17px;background:#efefef"></div>
<div class="a" style="left:1394px;top:537px;width:1px;height:17px;background:#efefef"></div>
<div class="a" style="left:1437px;top:537px;width:1px;height:17px;background:#efefef"></div>
<div class="a" style="left:1480px;top:537px;width:1px;height:17px;background:#efefef"></div>
<div class="a" style="left:1523px;top:537px;width:1px;height:17px;background:#efefef"></div>
<div class="a" style="left:1566px;top:537px;width:1px;height:17px;background:#efefef"></div>
<div class="t" style="left:419px;top:540px;font-size:11px;color:#111">13</div>
<div class="t" style="left:444px;top:540px;font-size:11px;color:#111">Тимчасове, Q</div>
<div class="t" style="left:594px;top:540px;font-size:11px;color:#111">Вітер</div>
<div class="t" style="left:690.0px;top:540px;width:100px;text-align:center;font-size:11px;color:#111">1.5</div>
<div class="t" style="left:762.5px;top:540px;width:100px;text-align:center;font-size:11px;color:#111">0</div>
<div class="t" style="left:891.5px;top:540px;width:100px;text-align:center;font-size:11px;color:#111">0.6</div>
<div class="t" style="left:1063.5px;top:540px;width:100px;text-align:center;font-size:11px;color:#111">0.2</div>
<div class="t" style="left:1106.5px;top:540px;width:100px;text-align:center;font-size:11px;color:#111">0</div>
<div class="a" style="left:413px;top:554px;width:1170px;height:17px;background:#fdf3e6"></div>
<div class="a" style="left:588px;top:554px;width:995px;height:17px;background:#fee7be"></div>
<div class="a" style="left:413px;top:570px;width:1170px;height:1px;background:#ededed"></div>
<div class="a" style="left:441px;top:554px;width:1px;height:17px;background:#efefef"></div>
<div class="a" style="left:589px;top:554px;width:1px;height:17px;background:#efefef"></div>
<div class="a" style="left:690px;top:554px;width:1px;height:17px;background:#efefef"></div>
<div class="a" style="left:792px;top:554px;width:1px;height:17px;background:#efefef"></div>
<div class="a" style="left:835px;top:554px;width:1px;height:17px;background:#efefef"></div>
<div class="a" style="left:878px;top:554px;width:1px;height:17px;background:#efefef"></div>
<div class="a" style="left:921px;top:554px;width:1px;height:17px;background:#efefef"></div>
<div class="a" style="left:964px;top:554px;width:1px;height:17px;background:#efefef"></div>
<div class="a" style="left:1007px;top:554px;width:1px;height:17px;background:#efefef"></div>
<div class="a" style="left:1050px;top:554px;width:1px;height:17px;background:#efefef"></div>
<div class="a" style="left:1093px;top:554px;width:1px;height:17px;background:#efefef"></div>
<div class="a" style="left:1136px;top:554px;width:1px;height:17px;background:#efefef"></div>
<div class="a" style="left:1179px;top:554px;width:1px;height:17px;background:#efefef"></div>
<div class="a" style="left:1222px;top:554px;width:1px;height:17px;background:#efefef"></div>
<div class="a" style="left:1265px;top:554px;width:1px;height:17px;background:#efefef"></div>
<div class="a" style="left:1308px;top:554px;width:1px;height:17px;background:#efefef"></div>
<div class="a" style="left:1351px;top:554px;width:1px;height:17px;background:#efefef"></div>
<div class="a" style="left:1394px;top:554px;width:1px;height:17px;background:#efefef"></div>
<div class="a" style="left:1437px;top:554px;width:1px;height:17px;background:#efefef"></div>
<div class="a" style="left:1480px;top:554px;width:1px;height:17px;background:#efefef"></div>
<div class="a" style="left:1523px;top:554px;width:1px;height:17px;background:#efefef"></div>
<div class="a" style="left:1566px;top:554px;width:1px;height:17px;background:#efefef"></div>
<div class="t" style="left:419px;top:557px;font-size:11px;color:#111">14</div>
<div class="t" style="left:444px;top:557px;font-size:11px;color:#111">Сейсмічене, Ae</div>
<div class="t" style="left:594px;top:557px;font-size:11px;color:#111">Сейсміка, Aed</div>
<div class="t" style="left:690.0px;top:557px;width:100px;text-align:center;font-size:11px;color:#111">1</div>
<div class="t" style="left:762.5px;top:557px;width:100px;text-align:center;font-size:11px;color:#111">1</div>
<div class="t" style="left:891.5px;top:557px;width:100px;text-align:center;font-size:11px;color:#111">1</div>
<div class="t" style="left:1063.5px;top:557px;width:100px;text-align:center;font-size:11px;color:#111">1</div>
<div class="t" style="left:1106.5px;top:557px;width:100px;text-align:center;font-size:11px;color:#111">1</div>
<div class="a" style="left:413px;top:571px;width:1170px;height:17px;background:#fefeec"></div>
<div class="a" style="left:413px;top:587px;width:1170px;height:1px;background:#ededed"></div>
<div class="a" style="left:441px;top:571px;width:1px;height:17px;background:#efefef"></div>
<div class="a" style="left:589px;top:571px;width:1px;height:17px;background:#efefef"></div>
<div class="a" style="left:690px;top:571px;width:1px;height:17px;background:#efefef"></div>
<div class="a" style="left:792px;top:571px;width:1px;height:17px;background:#efefef"></div>
<div class="a" style="left:835px;top:571px;width:1px;height:17px;background:#efefef"></div>
<div class="a" style="left:878px;top:571px;width:1px;height:17px;background:#efefef"></div>
<div class="a" style="left:921px;top:571px;width:1px;height:17px;background:#efefef"></div>
<div class="a" style="left:964px;top:571px;width:1px;height:17px;background:#efefef"></div>
<div class="a" style="left:1007px;top:571px;width:1px;height:17px;background:#efefef"></div>
<div class="a" style="left:1050px;top:571px;width:1px;height:17px;background:#efefef"></div>
<div class="a" style="left:1093px;top:571px;width:1px;height:17px;background:#efefef"></div>
<div class="a" style="left:1136px;top:571px;width:1px;height:17px;background:#efefef"></div>
<div class="a" style="left:1179px;top:571px;width:1px;height:17px;background:#efefef"></div>
<div class="a" style="left:1222px;top:571px;width:1px;height:17px;background:#efefef"></div>
<div class="a" style="left:1265px;top:571px;width:1px;height:17px;background:#efefef"></div>
<div class="a" style="left:1308px;top:571px;width:1px;height:17px;background:#efefef"></div>
<div class="a" style="left:1351px;top:571px;width:1px;height:17px;background:#efefef"></div>
<div class="a" style="left:1394px;top:571px;width:1px;height:17px;background:#efefef"></div>
<div class="a" style="left:1437px;top:571px;width:1px;height:17px;background:#efefef"></div>
<div class="a" style="left:1480px;top:571px;width:1px;height:17px;background:#efefef"></div>
<div class="a" style="left:1523px;top:571px;width:1px;height:17px;background:#efefef"></div>
<div class="a" style="left:1566px;top:571px;width:1px;height:17px;background:#efefef"></div>
<div class="t" style="left:419px;top:574px;font-size:11px;color:#111">15</div>
<div class="t" style="left:444px;top:574px;font-size:11px;color:#111">Особове, A</div>
<div class="t" style="left:594px;top:574px;font-size:11px;color:#111">Аварійне, Ad</div>
<div class="t" style="left:690.0px;top:574px;width:100px;text-align:center;font-size:11px;color:#111">1</div>
<div class="t" style="left:762.5px;top:574px;width:100px;text-align:center;font-size:11px;color:#111">1</div>
<div class="t" style="left:891.5px;top:574px;width:100px;text-align:center;font-size:11px;color:#111">1</div>
<div class="t" style="left:1063.5px;top:574px;width:100px;text-align:center;font-size:11px;color:#111">1</div>
<div class="t" style="left:1106.5px;top:574px;width:100px;text-align:center;font-size:11px;color:#111">1</div>
<div class="a" style="left:413px;top:588px;width:1170px;height:17px;background:#fdf3e6"></div>
<div class="a" style="left:413px;top:604px;width:1170px;height:1px;background:#ededed"></div>
<div class="a" style="left:441px;top:588px;width:1px;height:17px;background:#efefef"></div>
<div class="a" style="left:589px;top:588px;width:1px;height:17px;background:#efefef"></div>
<div class="a" style="left:690px;top:588px;width:1px;height:17px;background:#efefef"></div>
<div class="a" style="left:792px;top:588px;width:1px;height:17px;background:#efefef"></div>
<div class="a" style="left:835px;top:588px;width:1px;height:17px;background:#efefef"></div>
<div class="a" style="left:878px;top:588px;width:1px;height:17px;background:#efefef"></div>
<div class="a" style="left:921px;top:588px;width:1px;height:17px;background:#efefef"></div>
<div class="a" style="left:964px;top:588px;width:1px;height:17px;background:#efefef"></div>
<div class="a" style="left:1007px;top:588px;width:1px;height:17px;background:#efefef"></div>
<div class="a" style="left:1050px;top:588px;width:1px;height:17px;background:#efefef"></div>
<div class="a" style="left:1093px;top:588px;width:1px;height:17px;background:#efefef"></div>
<div class="a" style="left:1136px;top:588px;width:1px;height:17px;background:#efefef"></div>
<div class="a" style="left:1179px;top:588px;width:1px;height:17px;background:#efefef"></div>
<div class="a" style="left:1222px;top:588px;width:1px;height:17px;background:#efefef"></div>
<div class="a" style="left:1265px;top:588px;width:1px;height:17px;background:#efefef"></div>
<div class="a" style="left:1308px;top:588px;width:1px;height:17px;background:#efefef"></div>
<div class="a" style="left:1351px;top:588px;width:1px;height:17px;background:#efefef"></div>
<div class="a" style="left:1394px;top:588px;width:1px;height:17px;background:#efefef"></div>
<div class="a" style="left:1437px;top:588px;width:1px;height:17px;background:#efefef"></div>
<div class="a" style="left:1480px;top:588px;width:1px;height:17px;background:#efefef"></div>
<div class="a" style="left:1523px;top:588px;width:1px;height:17px;background:#efefef"></div>
<div class="a" style="left:1566px;top:588px;width:1px;height:17px;background:#efefef"></div>
<div class="t" style="left:419px;top:591px;font-size:11px;color:#111">16</div>
<div class="t" style="left:444px;top:591px;font-size:11px;color:#111">Неактивне, Qo</div>
<div class="t" style="left:594px;top:591px;font-size:11px;color:#111">Неактивне</div>
<div class="a" style="left:413px;top:605px;width:1170px;height:1px;background:#ececec"></div>
<div class="a" style="left:413px;top:622px;width:1170px;height:1px;background:#ececec"></div>
<div class="a" style="left:413px;top:639px;width:1170px;height:1px;background:#ececec"></div>
<div class="a" style="left:413px;top:656px;width:1170px;height:1px;background:#ececec"></div>
<div class="a" style="left:413px;top:673px;width:1170px;height:1px;background:#ececec"></div>
<div class="a" style="left:413px;top:690px;width:1170px;height:1px;background:#ececec"></div>
<div class="a" style="left:413px;top:707px;width:1170px;height:1px;background:#ececec"></div>
<div class="a" style="left:440px;top:605px;width:1px;height:120px;background:#ececec"></div>
<div class="a" style="left:588px;top:605px;width:1px;height:120px;background:#ececec"></div>
<div class="a" style="left:689px;top:605px;width:1px;height:120px;background:#ececec"></div>
<div class="a" style="left:791px;top:605px;width:1px;height:120px;background:#ececec"></div>
<div class="a" style="left:834px;top:605px;width:1px;height:120px;background:#ececec"></div>
<div class="a" style="left:877px;top:605px;width:1px;height:120px;background:#ececec"></div>
<div class="a" style="left:920px;top:605px;width:1px;height:120px;background:#ececec"></div>
<div class="a" style="left:963px;top:605px;width:1px;height:120px;background:#ececec"></div>
<div class="a" style="left:1006px;top:605px;width:1px;height:120px;background:#ececec"></div>
<div class="a" style="left:1049px;top:605px;width:1px;height:120px;background:#ececec"></div>
<div class="a" style="left:1092px;top:605px;width:1px;height:120px;background:#ececec"></div>
<div class="a" style="left:1135px;top:605px;width:1px;height:120px;background:#ececec"></div>
<div class="a" style="left:1178px;top:605px;width:1px;height:120px;background:#ececec"></div>
<div class="a" style="left:1221px;top:605px;width:1px;height:120px;background:#ececec"></div>
<div class="a" style="left:1264px;top:605px;width:1px;height:120px;background:#ececec"></div>
<div class="a" style="left:1307px;top:605px;width:1px;height:120px;background:#ececec"></div>
<div class="a" style="left:1350px;top:605px;width:1px;height:120px;background:#ececec"></div>
<div class="a" style="left:1393px;top:605px;width:1px;height:120px;background:#ececec"></div>
<div class="a" style="left:1436px;top:605px;width:1px;height:120px;background:#ececec"></div>
<div class="a" style="left:1479px;top:605px;width:1px;height:120px;background:#ececec"></div>
<div class="a" style="left:1522px;top:605px;width:1px;height:120px;background:#ececec"></div>
<div class="a" style="left:1565px;top:605px;width:1px;height:120px;background:#ececec"></div>
<div class="a" style="left:412px;top:731px;width:1172px;height:208px;background:#f0f0f0;border:1px solid #6f7780"></div>
<div class="a" style="left:413px;top:732px;width:1152px;height:25px;background:#fff"></div>
<div class="a" style="left:454px;top:733px;width:1px;height:24px;background:#e4e4e4"></div>
<div class="a" style="left:624px;top:733px;width:1px;height:24px;background:#e4e4e4"></div>
<div class="a" style="left:669px;top:733px;width:1px;height:24px;background:#e4e4e4"></div>
<div class="a" style="left:714px;top:733px;width:1px;height:24px;background:#e4e4e4"></div>
<div class="a" style="left:759px;top:733px;width:1px;height:24px;background:#e4e4e4"></div>
<div class="a" style="left:804px;top:733px;width:1px;height:24px;background:#e4e4e4"></div>
<div class="a" style="left:849px;top:733px;width:1px;height:24px;background:#e4e4e4"></div>
<div class="a" style="left:894px;top:733px;width:1px;height:24px;background:#e4e4e4"></div>
<div class="a" style="left:939px;top:733px;width:1px;height:24px;background:#e4e4e4"></div>
<div class="a" style="left:984px;top:733px;width:1px;height:24px;background:#e4e4e4"></div>
<div class="a" style="left:1029px;top:733px;width:1px;height:24px;background:#e4e4e4"></div>
<div class="a" style="left:1074px;top:733px;width:1px;height:24px;background:#e4e4e4"></div>
<div class="a" style="left:1119px;top:733px;width:1px;height:24px;background:#e4e4e4"></div>
<div class="a" style="left:1164px;top:733px;width:1px;height:24px;background:#e4e4e4"></div>
<div class="a" style="left:1209px;top:733px;width:1px;height:24px;background:#e4e4e4"></div>
<div class="a" style="left:1254px;top:733px;width:1px;height:24px;background:#e4e4e4"></div>
<div class="a" style="left:1299px;top:733px;width:1px;height:24px;background:#e4e4e4"></div>
<div class="a" style="left:1344px;top:733px;width:1px;height:24px;background:#e4e4e4"></div>
<div class="t" style="left:419px;top:738px;font-size:11px;color:#111">№</div>
<div class="t" style="left:459px;top:738px;font-size:11px;color:#111">Тип сполучення</div>
<div class="t" style="left:596.5px;top:738px;width:100px;text-align:center;font-size:11px;color:#111">Gk</div>
<div class="t" style="left:641.5px;top:738px;width:100px;text-align:center;font-size:11px;color:#111">Qk,1</div>
<div class="t" style="left:686.5px;top:738px;width:100px;text-align:center;font-size:11px;color:#111">Qk,A</div>
<div class="t" style="left:731.5px;top:738px;width:100px;text-align:center;font-size:11px;color:#111">Qk,B</div>
<div class="t" style="left:776.5px;top:738px;width:100px;text-align:center;font-size:11px;color:#111">Qk,C</div>
<div class="t" style="left:821.5px;top:738px;width:100px;text-align:center;font-size:11px;color:#111">Qk,D</div>
<div class="t" style="left:866.5px;top:738px;width:100px;text-align:center;font-size:11px;color:#111">Qk,E</div>
<div class="t" style="left:911.5px;top:738px;width:100px;text-align:center;font-size:11px;color:#111">Qk,F</div>
<div class="t" style="left:956.5px;top:738px;width:100px;text-align:center;font-size:11px;color:#111">Qk,G</div>
<div class="t" style="left:1001.5px;top:738px;width:100px;text-align:center;font-size:11px;color:#111">Qk,H</div>
<div class="t" style="left:1046.5px;top:738px;width:100px;text-align:center;font-size:11px;color:#111">Qk,T</div>
<div class="t" style="left:1091.5px;top:738px;width:100px;text-align:center;font-size:11px;color:#111">Qk,S</div>
<div class="t" style="left:1136.5px;top:738px;width:100px;text-align:center;font-size:11px;color:#111">Qk,S&lt;</div>
<div class="t" style="left:1181.5px;top:738px;width:100px;text-align:center;font-size:11px;color:#111">Qk,W</div>
<div class="t" style="left:1226.5px;top:738px;width:100px;text-align:center;font-size:11px;color:#111">Aed</div>
<div class="t" style="left:1271.5px;top:738px;width:100px;text-align:center;font-size:11px;color:#111">Ad</div>
<div class="t" style="left:1349px;top:738px;font-size:11px;color:#111">Формула</div>
<div class="a" style="left:413px;top:757px;width:1152px;height:163px;overflow:hidden">
<div class="a" style="left:0px;top:0px;width:21px;height:17px;background:#fff"></div>
<div class="a" style="left:21px;top:0px;width:20px;height:17px;background:#efeff4"></div>
<div class="a" style="left:41px;top:0px;width:170px;height:17px;background:#f8f8fc"></div>
<div class="a" style="left:211px;top:0px;width:45px;height:17px;background:#fdfdc6"></div>
<div class="a" style="left:256px;top:0px;width:45px;height:17px;background:#f8f8fc"></div>
<div class="a" style="left:301px;top:0px;width:45px;height:17px;background:#c2fdc2"></div>
<div class="a" style="left:346px;top:0px;width:45px;height:17px;background:#f8f8fc"></div>
<div class="a" style="left:391px;top:0px;width:45px;height:17px;background:#f0f0f4"></div>
<div class="a" style="left:436px;top:0px;width:45px;height:17px;background:#f8f8fc"></div>
<div class="a" style="left:481px;top:0px;width:45px;height:17px;background:#c2fdc2"></div>
<div class="a" style="left:526px;top:0px;width:45px;height:17px;background:#f8f8fc"></div>
<div class="a" style="left:571px;top:0px;width:45px;height:17px;background:#f0f0f4"></div>
<div class="a" style="left:616px;top:0px;width:45px;height:17px;background:#f8f8fc"></div>
<div class="a" style="left:661px;top:0px;width:45px;height:17px;background:#f0f0f4"></div>
<div class="a" style="left:706px;top:0px;width:45px;height:17px;background:#c2fdc2"></div>
<div class="a" style="left:751px;top:0px;width:45px;height:17px;background:#f8f8fc"></div>
<div class="a" style="left:796px;top:0px;width:45px;height:17px;background:#f0f0f4"></div>
<div class="a" style="left:841px;top:0px;width:45px;height:17px;background:#fbe7c6"></div>
<div class="a" style="left:886px;top:0px;width:45px;height:17px;background:#f8f8fc"></div>
<div class="a" style="left:931px;top:0px;width:221px;height:17px;background:#bffcbf"></div>
<div class="a" style="left:21px;top:16px;width:1131px;height:1px;background:#ebebeb"></div>
<div class="a" style="left:21px;top:0px;width:1px;height:16px;background:#efecf0"></div>
<div class="a" style="left:41px;top:0px;width:1px;height:16px;background:#efecf0"></div>
<div class="a" style="left:211px;top:0px;width:1px;height:16px;background:#efecf0"></div>
<div class="a" style="left:256px;top:0px;width:1px;height:16px;background:#efecf0"></div>
<div class="a" style="left:301px;top:0px;width:1px;height:16px;background:#efecf0"></div>
<div class="a" style="left:346px;top:0px;width:1px;height:16px;background:#efecf0"></div>
<div class="a" style="left:391px;top:0px;width:1px;height:16px;background:#efecf0"></div>
<div class="a" style="left:436px;top:0px;width:1px;height:16px;background:#efecf0"></div>
<div class="a" style="left:481px;top:0px;width:1px;height:16px;background:#efecf0"></div>
<div class="a" style="left:526px;top:0px;width:1px;height:16px;background:#efecf0"></div>
<div class="a" style="left:571px;top:0px;width:1px;height:16px;background:#efecf0"></div>
<div class="a" style="left:616px;top:0px;width:1px;height:16px;background:#efecf0"></div>
<div class="a" style="left:661px;top:0px;width:1px;height:16px;background:#efecf0"></div>
<div class="a" style="left:706px;top:0px;width:1px;height:16px;background:#efecf0"></div>
<div class="a" style="left:751px;top:0px;width:1px;height:16px;background:#efecf0"></div>
<div class="a" style="left:796px;top:0px;width:1px;height:16px;background:#efecf0"></div>
<div class="a" style="left:841px;top:0px;width:1px;height:16px;background:#efecf0"></div>
<div class="a" style="left:886px;top:0px;width:1px;height:16px;background:#efecf0"></div>
<div class="a" style="left:931px;top:0px;width:1px;height:16px;background:#efecf0"></div>
<div class="a" style="left:5px;top:2px;width:13px;height:13px"><svg width="13" height="13" viewBox="0 0 13 13"><rect x="0" y="0" width="13" height="13" rx="3" fill="#0b5cc2"/><path d="M3.2 6.8 L5.4 9 L9.8 4.2" stroke="#fff" stroke-width="1" fill="none"/></svg></div>
<div class="t" style="left:23px;top:3px;font-size:11px;color:#111">1</div>
<div class="t" style="left:46px;top:3px;font-size:11px;color:#111">1 основне(1ПС) @1</div>
<div class="t" style="left:203.5px;top:3px;width:60px;text-align:center;font-size:11px;color:#111">1</div>
<div class="t" style="left:248.5px;top:3px;width:60px;text-align:center;font-size:11px;color:#111">1</div>
<div class="t" style="left:293.5px;top:3px;width:60px;text-align:center;font-size:11px;color:#111">0.7</div>
<div class="t" style="left:338.5px;top:3px;width:60px;text-align:center;font-size:11px;color:#111">0.7</div>
<div class="t" style="left:383.5px;top:3px;width:60px;text-align:center;font-size:11px;color:#111">0.7</div>
<div class="t" style="left:428.5px;top:3px;width:60px;text-align:center;font-size:11px;color:#111">0.7</div>
<div class="t" style="left:473.5px;top:3px;width:60px;text-align:center;font-size:11px;color:#111">1</div>
<div class="t" style="left:518.5px;top:3px;width:60px;text-align:center;font-size:11px;color:#111">0.7</div>
<div class="t" style="left:563.5px;top:3px;width:60px;text-align:center;font-size:11px;color:#111">0.7</div>
<div class="t" style="left:608.5px;top:3px;width:60px;text-align:center;font-size:11px;color:#111">0.7</div>
<div class="t" style="left:653.5px;top:3px;width:60px;text-align:center;font-size:11px;color:#111">0.6</div>
<div class="t" style="left:698.5px;top:3px;width:60px;text-align:center;font-size:11px;color:#111">0.7</div>
<div class="t" style="left:743.5px;top:3px;width:60px;text-align:center;font-size:11px;color:#111">0.5</div>
<div class="t" style="left:788.5px;top:3px;width:60px;text-align:center;font-size:11px;color:#111">0.6</div>
<div class="a" style="left:931px;top:0px;width:221px;height:17px;overflow:hidden"><div class="t" style="left:5px;top:3px;font-size:11px;color:#111;letter-spacing:0px">ΣYgj•Gkj + Yq1•Qk1+ΣYqi•Ψ0i•Qki (6.10)</div></div>
<div class="a" style="left:0px;top:17px;width:21px;height:17px;background:#fff"></div>
<div class="a" style="left:21px;top:17px;width:20px;height:17px;background:#efeff4"></div>
<div class="a" style="left:41px;top:17px;width:170px;height:17px;background:#f8f8fc"></div>
<div class="a" style="left:211px;top:17px;width:45px;height:17px;background:#fdfdc6"></div>
<div class="a" style="left:256px;top:17px;width:45px;height:17px;background:#f8f8fc"></div>
<div class="a" style="left:301px;top:17px;width:45px;height:17px;background:#c2fdc2"></div>
<div class="a" style="left:346px;top:17px;width:45px;height:17px;background:#f8f8fc"></div>
<div class="a" style="left:391px;top:17px;width:45px;height:17px;background:#f0f0f4"></div>
<div class="a" style="left:436px;top:17px;width:45px;height:17px;background:#f8f8fc"></div>
<div class="a" style="left:481px;top:17px;width:45px;height:17px;background:#c2fdc2"></div>
<div class="a" style="left:526px;top:17px;width:45px;height:17px;background:#f8f8fc"></div>
<div class="a" style="left:571px;top:17px;width:45px;height:17px;background:#f0f0f4"></div>
<div class="a" style="left:616px;top:17px;width:45px;height:17px;background:#f8f8fc"></div>
<div class="a" style="left:661px;top:17px;width:45px;height:17px;background:#f0f0f4"></div>
<div class="a" style="left:706px;top:17px;width:45px;height:17px;background:#c2fdc2"></div>
<div class="a" style="left:751px;top:17px;width:45px;height:17px;background:#f8f8fc"></div>
<div class="a" style="left:796px;top:17px;width:45px;height:17px;background:#f0f0f4"></div>
<div class="a" style="left:841px;top:17px;width:45px;height:17px;background:#fbe7c6"></div>
<div class="a" style="left:886px;top:17px;width:45px;height:17px;background:#f8f8fc"></div>
<div class="a" style="left:931px;top:17px;width:221px;height:17px;background:#bffcbf"></div>
<div class="a" style="left:21px;top:33px;width:1131px;height:1px;background:#ebebeb"></div>
<div class="a" style="left:21px;top:17px;width:1px;height:16px;background:#efecf0"></div>
<div class="a" style="left:41px;top:17px;width:1px;height:16px;background:#efecf0"></div>
<div class="a" style="left:211px;top:17px;width:1px;height:16px;background:#efecf0"></div>
<div class="a" style="left:256px;top:17px;width:1px;height:16px;background:#efecf0"></div>
<div class="a" style="left:301px;top:17px;width:1px;height:16px;background:#efecf0"></div>
<div class="a" style="left:346px;top:17px;width:1px;height:16px;background:#efecf0"></div>
<div class="a" style="left:391px;top:17px;width:1px;height:16px;background:#efecf0"></div>
<div class="a" style="left:436px;top:17px;width:1px;height:16px;background:#efecf0"></div>
<div class="a" style="left:481px;top:17px;width:1px;height:16px;background:#efecf0"></div>
<div class="a" style="left:526px;top:17px;width:1px;height:16px;background:#efecf0"></div>
<div class="a" style="left:571px;top:17px;width:1px;height:16px;background:#efecf0"></div>
<div class="a" style="left:616px;top:17px;width:1px;height:16px;background:#efecf0"></div>
<div class="a" style="left:661px;top:17px;width:1px;height:16px;background:#efecf0"></div>
<div class="a" style="left:706px;top:17px;width:1px;height:16px;background:#efecf0"></div>
<div class="a" style="left:751px;top:17px;width:1px;height:16px;background:#efecf0"></div>
<div class="a" style="left:796px;top:17px;width:1px;height:16px;background:#efecf0"></div>
<div class="a" style="left:841px;top:17px;width:1px;height:16px;background:#efecf0"></div>
<div class="a" style="left:886px;top:17px;width:1px;height:16px;background:#efecf0"></div>
<div class="a" style="left:931px;top:17px;width:1px;height:16px;background:#efecf0"></div>
<div class="a" style="left:5px;top:19px;width:13px;height:13px"><svg width="13" height="13" viewBox="0 0 13 13"><rect x="0.5" y="0.5" width="12" height="12" rx="2.5" fill="#f9f9f9" stroke="#5a5a5a" stroke-width="1"/></svg></div>
<div class="t" style="left:23px;top:20px;font-size:11px;color:#111">2</div>
<div class="t" style="left:46px;top:20px;font-size:11px;color:#111">1 основне(1ПС) @1</div>
<div class="t" style="left:203.5px;top:20px;width:60px;text-align:center;font-size:11px;color:#111">1</div>
<div class="t" style="left:248.5px;top:20px;width:60px;text-align:center;font-size:11px;color:#111">0.7</div>
<div class="t" style="left:293.5px;top:20px;width:60px;text-align:center;font-size:11px;color:#111">0.7</div>
<div class="t" style="left:338.5px;top:20px;width:60px;text-align:center;font-size:11px;color:#111">0.7</div>
<div class="t" style="left:383.5px;top:20px;width:60px;text-align:center;font-size:11px;color:#111">0.7</div>
<div class="t" style="left:428.5px;top:20px;width:60px;text-align:center;font-size:11px;color:#111">0.7</div>
<div class="t" style="left:473.5px;top:20px;width:60px;text-align:center;font-size:11px;color:#111">1</div>
<div class="t" style="left:518.5px;top:20px;width:60px;text-align:center;font-size:11px;color:#111">0.7</div>
<div class="t" style="left:563.5px;top:20px;width:60px;text-align:center;font-size:11px;color:#111">0.7</div>
<div class="t" style="left:608.5px;top:20px;width:60px;text-align:center;font-size:11px;color:#111">0.7</div>
<div class="t" style="left:653.5px;top:20px;width:60px;text-align:center;font-size:11px;color:#111">0.6</div>
<div class="t" style="left:698.5px;top:20px;width:60px;text-align:center;font-size:11px;color:#111">0.7</div>
<div class="t" style="left:743.5px;top:20px;width:60px;text-align:center;font-size:11px;color:#111">0.5</div>
<div class="t" style="left:788.5px;top:20px;width:60px;text-align:center;font-size:11px;color:#111">0.6</div>
<div class="a" style="left:931px;top:17px;width:221px;height:17px;overflow:hidden"><div class="t" style="left:5px;top:3px;font-size:11px;color:#111;letter-spacing:0px">ΣYgj•Gkj + Yq1•Ψ01•Qk1+ΣYqi•Ψ0i•Qki (6.10)</div></div>
<div class="a" style="left:0px;top:34px;width:21px;height:17px;background:#fff"></div>
<div class="a" style="left:21px;top:34px;width:20px;height:17px;background:#efeff4"></div>
<div class="a" style="left:41px;top:34px;width:170px;height:17px;background:#f8f8fc"></div>
<div class="a" style="left:211px;top:34px;width:45px;height:17px;background:#fdfdc6"></div>
<div class="a" style="left:256px;top:34px;width:45px;height:17px;background:#f8f8fc"></div>
<div class="a" style="left:301px;top:34px;width:45px;height:17px;background:#c2fdc2"></div>
<div class="a" style="left:346px;top:34px;width:45px;height:17px;background:#f8f8fc"></div>
<div class="a" style="left:391px;top:34px;width:45px;height:17px;background:#f0f0f4"></div>
<div class="a" style="left:436px;top:34px;width:45px;height:17px;background:#f8f8fc"></div>
<div class="a" style="left:481px;top:34px;width:45px;height:17px;background:#c2fdc2"></div>
<div class="a" style="left:526px;top:34px;width:45px;height:17px;background:#f8f8fc"></div>
<div class="a" style="left:571px;top:34px;width:45px;height:17px;background:#f0f0f4"></div>
<div class="a" style="left:616px;top:34px;width:45px;height:17px;background:#f8f8fc"></div>
<div class="a" style="left:661px;top:34px;width:45px;height:17px;background:#f0f0f4"></div>
<div class="a" style="left:706px;top:34px;width:45px;height:17px;background:#c2fdc2"></div>
<div class="a" style="left:751px;top:34px;width:45px;height:17px;background:#f8f8fc"></div>
<div class="a" style="left:796px;top:34px;width:45px;height:17px;background:#f0f0f4"></div>
<div class="a" style="left:841px;top:34px;width:45px;height:17px;background:#fbe7c6"></div>
<div class="a" style="left:886px;top:34px;width:45px;height:17px;background:#f8f8fc"></div>
<div class="a" style="left:931px;top:34px;width:221px;height:17px;background:#bffcbf"></div>
<div class="a" style="left:21px;top:50px;width:1131px;height:1px;background:#ebebeb"></div>
<div class="a" style="left:21px;top:34px;width:1px;height:16px;background:#efecf0"></div>
<div class="a" style="left:41px;top:34px;width:1px;height:16px;background:#efecf0"></div>
<div class="a" style="left:211px;top:34px;width:1px;height:16px;background:#efecf0"></div>
<div class="a" style="left:256px;top:34px;width:1px;height:16px;background:#efecf0"></div>
<div class="a" style="left:301px;top:34px;width:1px;height:16px;background:#efecf0"></div>
<div class="a" style="left:346px;top:34px;width:1px;height:16px;background:#efecf0"></div>
<div class="a" style="left:391px;top:34px;width:1px;height:16px;background:#efecf0"></div>
<div class="a" style="left:436px;top:34px;width:1px;height:16px;background:#efecf0"></div>
<div class="a" style="left:481px;top:34px;width:1px;height:16px;background:#efecf0"></div>
<div class="a" style="left:526px;top:34px;width:1px;height:16px;background:#efecf0"></div>
<div class="a" style="left:571px;top:34px;width:1px;height:16px;background:#efecf0"></div>
<div class="a" style="left:616px;top:34px;width:1px;height:16px;background:#efecf0"></div>
<div class="a" style="left:661px;top:34px;width:1px;height:16px;background:#efecf0"></div>
<div class="a" style="left:706px;top:34px;width:1px;height:16px;background:#efecf0"></div>
<div class="a" style="left:751px;top:34px;width:1px;height:16px;background:#efecf0"></div>
<div class="a" style="left:796px;top:34px;width:1px;height:16px;background:#efecf0"></div>
<div class="a" style="left:841px;top:34px;width:1px;height:16px;background:#efecf0"></div>
<div class="a" style="left:886px;top:34px;width:1px;height:16px;background:#efecf0"></div>
<div class="a" style="left:931px;top:34px;width:1px;height:16px;background:#efecf0"></div>
<div class="a" style="left:5px;top:36px;width:13px;height:13px"><svg width="13" height="13" viewBox="0 0 13 13"><rect x="0.5" y="0.5" width="12" height="12" rx="2.5" fill="#f9f9f9" stroke="#5a5a5a" stroke-width="1"/></svg></div>
<div class="t" style="left:23px;top:37px;font-size:11px;color:#111">3</div>
<div class="t" style="left:46px;top:37px;font-size:11px;color:#111">2 основне(1ПС) @1</div>
<div class="t" style="left:203.5px;top:37px;width:60px;text-align:center;font-size:11px;color:#111">0.85</div>
<div class="t" style="left:248.5px;top:37px;width:60px;text-align:center;font-size:11px;color:#111">1</div>
<div class="t" style="left:293.5px;top:37px;width:60px;text-align:center;font-size:11px;color:#111">0.7</div>
<div class="t" style="left:338.5px;top:37px;width:60px;text-align:center;font-size:11px;color:#111">0.7</div>
<div class="t" style="left:383.5px;top:37px;width:60px;text-align:center;font-size:11px;color:#111">0.7</div>
<div class="t" style="left:428.5px;top:37px;width:60px;text-align:center;font-size:11px;color:#111">0.7</div>
<div class="t" style="left:473.5px;top:37px;width:60px;text-align:center;font-size:11px;color:#111">1</div>
<div class="t" style="left:518.5px;top:37px;width:60px;text-align:center;font-size:11px;color:#111">0.7</div>
<div class="t" style="left:563.5px;top:37px;width:60px;text-align:center;font-size:11px;color:#111">0.7</div>
<div class="t" style="left:608.5px;top:37px;width:60px;text-align:center;font-size:11px;color:#111">0.7</div>
<div class="t" style="left:653.5px;top:37px;width:60px;text-align:center;font-size:11px;color:#111">0.6</div>
<div class="t" style="left:698.5px;top:37px;width:60px;text-align:center;font-size:11px;color:#111">0.7</div>
<div class="t" style="left:743.5px;top:37px;width:60px;text-align:center;font-size:11px;color:#111">0.5</div>
<div class="t" style="left:788.5px;top:37px;width:60px;text-align:center;font-size:11px;color:#111">0.6</div>
<div class="a" style="left:931px;top:34px;width:221px;height:17px;overflow:hidden"><div class="t" style="left:5px;top:3px;font-size:11px;color:#111;letter-spacing:0px">Σξj•Ygj•Gkj + Yq1•Qk1+ΣYqi•Ψ0i•Qki (6.10b)</div></div>
<div class="a" style="left:0px;top:51px;width:21px;height:17px;background:#fff"></div>
<div class="a" style="left:21px;top:51px;width:20px;height:17px;background:#efeff4"></div>
<div class="a" style="left:41px;top:51px;width:170px;height:17px;background:#f8f8fc"></div>
<div class="a" style="left:211px;top:51px;width:45px;height:17px;background:#fdfdc6"></div>
<div class="a" style="left:256px;top:51px;width:45px;height:17px;background:#f8f8fc"></div>
<div class="a" style="left:301px;top:51px;width:45px;height:17px;background:#c2fdc2"></div>
<div class="a" style="left:346px;top:51px;width:45px;height:17px;background:#f8f8fc"></div>
<div class="a" style="left:391px;top:51px;width:45px;height:17px;background:#f0f0f4"></div>
<div class="a" style="left:436px;top:51px;width:45px;height:17px;background:#f8f8fc"></div>
<div class="a" style="left:481px;top:51px;width:45px;height:17px;background:#c2fdc2"></div>
<div class="a" style="left:526px;top:51px;width:45px;height:17px;background:#f8f8fc"></div>
<div class="a" style="left:571px;top:51px;width:45px;height:17px;background:#f0f0f4"></div>
<div class="a" style="left:616px;top:51px;width:45px;height:17px;background:#f8f8fc"></div>
<div class="a" style="left:661px;top:51px;width:45px;height:17px;background:#f0f0f4"></div>
<div class="a" style="left:706px;top:51px;width:45px;height:17px;background:#c2fdc2"></div>
<div class="a" style="left:751px;top:51px;width:45px;height:17px;background:#f8f8fc"></div>
<div class="a" style="left:796px;top:51px;width:45px;height:17px;background:#f0f0f4"></div>
<div class="a" style="left:841px;top:51px;width:45px;height:17px;background:#fbe7c6"></div>
<div class="a" style="left:886px;top:51px;width:45px;height:17px;background:#f8f8fc"></div>
<div class="a" style="left:931px;top:51px;width:221px;height:17px;background:#bffcbf"></div>
<div class="a" style="left:21px;top:67px;width:1131px;height:1px;background:#ebebeb"></div>
<div class="a" style="left:21px;top:51px;width:1px;height:16px;background:#efecf0"></div>
<div class="a" style="left:41px;top:51px;width:1px;height:16px;background:#efecf0"></div>
<div class="a" style="left:211px;top:51px;width:1px;height:16px;background:#efecf0"></div>
<div class="a" style="left:256px;top:51px;width:1px;height:16px;background:#efecf0"></div>
<div class="a" style="left:301px;top:51px;width:1px;height:16px;background:#efecf0"></div>
<div class="a" style="left:346px;top:51px;width:1px;height:16px;background:#efecf0"></div>
<div class="a" style="left:391px;top:51px;width:1px;height:16px;background:#efecf0"></div>
<div class="a" style="left:436px;top:51px;width:1px;height:16px;background:#efecf0"></div>
<div class="a" style="left:481px;top:51px;width:1px;height:16px;background:#efecf0"></div>
<div class="a" style="left:526px;top:51px;width:1px;height:16px;background:#efecf0"></div>
<div class="a" style="left:571px;top:51px;width:1px;height:16px;background:#efecf0"></div>
<div class="a" style="left:616px;top:51px;width:1px;height:16px;background:#efecf0"></div>
<div class="a" style="left:661px;top:51px;width:1px;height:16px;background:#efecf0"></div>
<div class="a" style="left:706px;top:51px;width:1px;height:16px;background:#efecf0"></div>
<div class="a" style="left:751px;top:51px;width:1px;height:16px;background:#efecf0"></div>
<div class="a" style="left:796px;top:51px;width:1px;height:16px;background:#efecf0"></div>
<div class="a" style="left:841px;top:51px;width:1px;height:16px;background:#efecf0"></div>
<div class="a" style="left:886px;top:51px;width:1px;height:16px;background:#efecf0"></div>
<div class="a" style="left:931px;top:51px;width:1px;height:16px;background:#efecf0"></div>
<div class="a" style="left:5px;top:53px;width:13px;height:13px"><svg width="13" height="13" viewBox="0 0 13 13"><rect x="0" y="0" width="13" height="13" rx="3" fill="#0b5cc2"/><path d="M3.2 6.8 L5.4 9 L9.8 4.2" stroke="#fff" stroke-width="1" fill="none"/></svg></div>
<div class="t" style="left:23px;top:54px;font-size:11px;color:#111">4</div>
<div class="t" style="left:46px;top:54px;font-size:11px;color:#111">Особливе Аварійне(1ПС) @2</div>
<div class="t" style="left:203.5px;top:54px;width:60px;text-align:center;font-size:11px;color:#111">1</div>
<div class="t" style="left:248.5px;top:54px;width:60px;text-align:center;font-size:11px;color:#111">0.5</div>
<div class="t" style="left:293.5px;top:54px;width:60px;text-align:center;font-size:11px;color:#111">0.3</div>
<div class="t" style="left:338.5px;top:54px;width:60px;text-align:center;font-size:11px;color:#111">0.3</div>
<div class="t" style="left:383.5px;top:54px;width:60px;text-align:center;font-size:11px;color:#111">0.6</div>
<div class="t" style="left:428.5px;top:54px;width:60px;text-align:center;font-size:11px;color:#111">0.6</div>
<div class="t" style="left:473.5px;top:54px;width:60px;text-align:center;font-size:11px;color:#111">0.8</div>
<div class="t" style="left:518.5px;top:54px;width:60px;text-align:center;font-size:11px;color:#111">0.6</div>
<div class="t" style="left:563.5px;top:54px;width:60px;text-align:center;font-size:11px;color:#111">0.3</div>
<div class="t" style="left:698.5px;top:54px;width:60px;text-align:center;font-size:11px;color:#111">0.2</div>
<div class="t" style="left:878.5px;top:54px;width:60px;text-align:center;font-size:11px;color:#111">1</div>
<div class="a" style="left:931px;top:51px;width:221px;height:17px;overflow:hidden"><div class="t" style="left:5px;top:3px;font-size:11px;color:#111;letter-spacing:0px">ΣGkj + Ad + Ψ1•Qk1 + ΣΨ2i•Qki (6.11b)</div></div>
<div class="a" style="left:0px;top:68px;width:21px;height:17px;background:#fff"></div>
<div class="a" style="left:21px;top:68px;width:20px;height:17px;background:#efeff4"></div>
<div class="a" style="left:41px;top:68px;width:170px;height:17px;background:#f8f8fc"></div>
<div class="a" style="left:211px;top:68px;width:45px;height:17px;background:#fdfdc6"></div>
<div class="a" style="left:256px;top:68px;width:45px;height:17px;background:#f8f8fc"></div>
<div class="a" style="left:301px;top:68px;width:45px;height:17px;background:#c2fdc2"></div>
<div class="a" style="left:346px;top:68px;width:45px;height:17px;background:#f8f8fc"></div>
<div class="a" style="left:391px;top:68px;width:45px;height:17px;background:#f0f0f4"></div>
<div class="a" style="left:436px;top:68px;width:45px;height:17px;background:#f8f8fc"></div>
<div class="a" style="left:481px;top:68px;width:45px;height:17px;background:#c2fdc2"></div>
<div class="a" style="left:526px;top:68px;width:45px;height:17px;background:#f8f8fc"></div>
<div class="a" style="left:571px;top:68px;width:45px;height:17px;background:#f0f0f4"></div>
<div class="a" style="left:616px;top:68px;width:45px;height:17px;background:#f8f8fc"></div>
<div class="a" style="left:661px;top:68px;width:45px;height:17px;background:#f0f0f4"></div>
<div class="a" style="left:706px;top:68px;width:45px;height:17px;background:#c2fdc2"></div>
<div class="a" style="left:751px;top:68px;width:45px;height:17px;background:#f8f8fc"></div>
<div class="a" style="left:796px;top:68px;width:45px;height:17px;background:#f0f0f4"></div>
<div class="a" style="left:841px;top:68px;width:45px;height:17px;background:#fbe7c6"></div>
<div class="a" style="left:886px;top:68px;width:45px;height:17px;background:#f8f8fc"></div>
<div class="a" style="left:931px;top:68px;width:221px;height:17px;background:#bffcbf"></div>
<div class="a" style="left:21px;top:84px;width:1131px;height:1px;background:#ebebeb"></div>
<div class="a" style="left:21px;top:68px;width:1px;height:16px;background:#efecf0"></div>
<div class="a" style="left:41px;top:68px;width:1px;height:16px;background:#efecf0"></div>
<div class="a" style="left:211px;top:68px;width:1px;height:16px;background:#efecf0"></div>
<div class="a" style="left:256px;top:68px;width:1px;height:16px;background:#efecf0"></div>
<div class="a" style="left:301px;top:68px;width:1px;height:16px;background:#efecf0"></div>
<div class="a" style="left:346px;top:68px;width:1px;height:16px;background:#efecf0"></div>
<div class="a" style="left:391px;top:68px;width:1px;height:16px;background:#efecf0"></div>
<div class="a" style="left:436px;top:68px;width:1px;height:16px;background:#efecf0"></div>
<div class="a" style="left:481px;top:68px;width:1px;height:16px;background:#efecf0"></div>
<div class="a" style="left:526px;top:68px;width:1px;height:16px;background:#efecf0"></div>
<div class="a" style="left:571px;top:68px;width:1px;height:16px;background:#efecf0"></div>
<div class="a" style="left:616px;top:68px;width:1px;height:16px;background:#efecf0"></div>
<div class="a" style="left:661px;top:68px;width:1px;height:16px;background:#efecf0"></div>
<div class="a" style="left:706px;top:68px;width:1px;height:16px;background:#efecf0"></div>
<div class="a" style="left:751px;top:68px;width:1px;height:16px;background:#efecf0"></div>
<div class="a" style="left:796px;top:68px;width:1px;height:16px;background:#efecf0"></div>
<div class="a" style="left:841px;top:68px;width:1px;height:16px;background:#efecf0"></div>
<div class="a" style="left:886px;top:68px;width:1px;height:16px;background:#efecf0"></div>
<div class="a" style="left:931px;top:68px;width:1px;height:16px;background:#efecf0"></div>
<div class="a" style="left:5px;top:70px;width:13px;height:13px"><svg width="13" height="13" viewBox="0 0 13 13"><rect x="0" y="0" width="13" height="13" rx="3" fill="#0b5cc2"/><path d="M3.2 6.8 L5.4 9 L9.8 4.2" stroke="#fff" stroke-width="1" fill="none"/></svg></div>
<div class="t" style="left:23px;top:71px;font-size:11px;color:#111">5</div>
<div class="t" style="left:46px;top:71px;font-size:11px;color:#111">Особливе Сейсміка(1ПС) @3</div>
<div class="t" style="left:203.5px;top:71px;width:60px;text-align:center;font-size:11px;color:#111">1</div>
<div class="t" style="left:248.5px;top:71px;width:60px;text-align:center;font-size:11px;color:#111">0.3</div>
<div class="t" style="left:293.5px;top:71px;width:60px;text-align:center;font-size:11px;color:#111">0.3</div>
<div class="t" style="left:338.5px;top:71px;width:60px;text-align:center;font-size:11px;color:#111">0.3</div>
<div class="t" style="left:383.5px;top:71px;width:60px;text-align:center;font-size:11px;color:#111">0.6</div>
<div class="t" style="left:428.5px;top:71px;width:60px;text-align:center;font-size:11px;color:#111">0.6</div>
<div class="t" style="left:473.5px;top:71px;width:60px;text-align:center;font-size:11px;color:#111">0.8</div>
<div class="t" style="left:518.5px;top:71px;width:60px;text-align:center;font-size:11px;color:#111">0.6</div>
<div class="t" style="left:563.5px;top:71px;width:60px;text-align:center;font-size:11px;color:#111">0.3</div>
<div class="t" style="left:698.5px;top:71px;width:60px;text-align:center;font-size:11px;color:#111">0.2</div>
<div class="t" style="left:833.5px;top:71px;width:60px;text-align:center;font-size:11px;color:#111">1</div>
<div class="a" style="left:931px;top:68px;width:221px;height:17px;overflow:hidden"><div class="t" style="left:5px;top:3px;font-size:11px;color:#111;letter-spacing:0px">ΣGkj + Aed + ΣΨ2i•Qki (6.12b)</div></div>
<div class="a" style="left:0px;top:85px;width:21px;height:17px;background:#fff"></div>
<div class="a" style="left:21px;top:85px;width:20px;height:17px;background:#efeff4"></div>
<div class="a" style="left:41px;top:85px;width:170px;height:17px;background:#f8f8fc"></div>
<div class="a" style="left:211px;top:85px;width:45px;height:17px;background:#fdfdc6"></div>
<div class="a" style="left:256px;top:85px;width:45px;height:17px;background:#f8f8fc"></div>
<div class="a" style="left:301px;top:85px;width:45px;height:17px;background:#c2fdc2"></div>
<div class="a" style="left:346px;top:85px;width:45px;height:17px;background:#f8f8fc"></div>
<div class="a" style="left:391px;top:85px;width:45px;height:17px;background:#f0f0f4"></div>
<div class="a" style="left:436px;top:85px;width:45px;height:17px;background:#f8f8fc"></div>
<div class="a" style="left:481px;top:85px;width:45px;height:17px;background:#c2fdc2"></div>
<div class="a" style="left:526px;top:85px;width:45px;height:17px;background:#f8f8fc"></div>
<div class="a" style="left:571px;top:85px;width:45px;height:17px;background:#f0f0f4"></div>
<div class="a" style="left:616px;top:85px;width:45px;height:17px;background:#f8f8fc"></div>
<div class="a" style="left:661px;top:85px;width:45px;height:17px;background:#f0f0f4"></div>
<div class="a" style="left:706px;top:85px;width:45px;height:17px;background:#c2fdc2"></div>
<div class="a" style="left:751px;top:85px;width:45px;height:17px;background:#f8f8fc"></div>
<div class="a" style="left:796px;top:85px;width:45px;height:17px;background:#f0f0f4"></div>
<div class="a" style="left:841px;top:85px;width:45px;height:17px;background:#fbe7c6"></div>
<div class="a" style="left:886px;top:85px;width:45px;height:17px;background:#f8f8fc"></div>
<div class="a" style="left:931px;top:85px;width:221px;height:17px;background:#bffcbf"></div>
<div class="a" style="left:21px;top:101px;width:1131px;height:1px;background:#ebebeb"></div>
<div class="a" style="left:21px;top:85px;width:1px;height:16px;background:#efecf0"></div>
<div class="a" style="left:41px;top:85px;width:1px;height:16px;background:#efecf0"></div>
<div class="a" style="left:211px;top:85px;width:1px;height:16px;background:#efecf0"></div>
<div class="a" style="left:256px;top:85px;width:1px;height:16px;background:#efecf0"></div>
<div class="a" style="left:301px;top:85px;width:1px;height:16px;background:#efecf0"></div>
<div class="a" style="left:346px;top:85px;width:1px;height:16px;background:#efecf0"></div>
<div class="a" style="left:391px;top:85px;width:1px;height:16px;background:#efecf0"></div>
<div class="a" style="left:436px;top:85px;width:1px;height:16px;background:#efecf0"></div>
<div class="a" style="left:481px;top:85px;width:1px;height:16px;background:#efecf0"></div>
<div class="a" style="left:526px;top:85px;width:1px;height:16px;background:#efecf0"></div>
<div class="a" style="left:571px;top:85px;width:1px;height:16px;background:#efecf0"></div>
<div class="a" style="left:616px;top:85px;width:1px;height:16px;background:#efecf0"></div>
<div class="a" style="left:661px;top:85px;width:1px;height:16px;background:#efecf0"></div>
<div class="a" style="left:706px;top:85px;width:1px;height:16px;background:#efecf0"></div>
<div class="a" style="left:751px;top:85px;width:1px;height:16px;background:#efecf0"></div>
<div class="a" style="left:796px;top:85px;width:1px;height:16px;background:#efecf0"></div>
<div class="a" style="left:841px;top:85px;width:1px;height:16px;background:#efecf0"></div>
<div class="a" style="left:886px;top:85px;width:1px;height:16px;background:#efecf0"></div>
<div class="a" style="left:931px;top:85px;width:1px;height:16px;background:#efecf0"></div>
<div class="a" style="left:5px;top:87px;width:13px;height:13px"><svg width="13" height="13" viewBox="0 0 13 13"><rect x="0" y="0" width="13" height="13" rx="3" fill="#0b5cc2"/><path d="M3.2 6.8 L5.4 9 L9.8 4.2" stroke="#fff" stroke-width="1" fill="none"/></svg></div>
<div class="t" style="left:23px;top:88px;font-size:11px;color:#111">6</div>
<div class="t" style="left:46px;top:88px;font-size:11px;color:#111">Характеристичне(2ПС) @4</div>
<div class="t" style="left:203.5px;top:88px;width:60px;text-align:center;font-size:11px;color:#111">1</div>
<div class="t" style="left:248.5px;top:88px;width:60px;text-align:center;font-size:11px;color:#111">1</div>
<div class="t" style="left:293.5px;top:88px;width:60px;text-align:center;font-size:11px;color:#111">0.7</div>
<div class="t" style="left:338.5px;top:88px;width:60px;text-align:center;font-size:11px;color:#111">0.7</div>
<div class="t" style="left:383.5px;top:88px;width:60px;text-align:center;font-size:11px;color:#111">0.7</div>
<div class="t" style="left:428.5px;top:88px;width:60px;text-align:center;font-size:11px;color:#111">0.7</div>
<div class="t" style="left:473.5px;top:88px;width:60px;text-align:center;font-size:11px;color:#111">1</div>
<div class="t" style="left:518.5px;top:88px;width:60px;text-align:center;font-size:11px;color:#111">0.7</div>
<div class="t" style="left:563.5px;top:88px;width:60px;text-align:center;font-size:11px;color:#111">0.7</div>
<div class="t" style="left:608.5px;top:88px;width:60px;text-align:center;font-size:11px;color:#111">0.7</div>
<div class="t" style="left:653.5px;top:88px;width:60px;text-align:center;font-size:11px;color:#111">0.6</div>
<div class="t" style="left:698.5px;top:88px;width:60px;text-align:center;font-size:11px;color:#111">0.7</div>
<div class="t" style="left:743.5px;top:88px;width:60px;text-align:center;font-size:11px;color:#111">0.5</div>
<div class="t" style="left:788.5px;top:88px;width:60px;text-align:center;font-size:11px;color:#111">0.6</div>
<div class="a" style="left:931px;top:85px;width:221px;height:17px;overflow:hidden"><div class="t" style="left:5px;top:3px;font-size:11px;color:#111;letter-spacing:0px">ΣGkj + Qk1 + ΣΨ0i•Qki (6.14b)</div></div>
<div class="a" style="left:0px;top:102px;width:21px;height:17px;background:#fff"></div>
<div class="a" style="left:21px;top:102px;width:20px;height:17px;background:#efeff4"></div>
<div class="a" style="left:41px;top:102px;width:170px;height:17px;background:#f8f8fc"></div>
<div class="a" style="left:211px;top:102px;width:45px;height:17px;background:#fdfdc6"></div>
<div class="a" style="left:256px;top:102px;width:45px;height:17px;background:#f8f8fc"></div>
<div class="a" style="left:301px;top:102px;width:45px;height:17px;background:#c2fdc2"></div>
<div class="a" style="left:346px;top:102px;width:45px;height:17px;background:#f8f8fc"></div>
<div class="a" style="left:391px;top:102px;width:45px;height:17px;background:#f0f0f4"></div>
<div class="a" style="left:436px;top:102px;width:45px;height:17px;background:#f8f8fc"></div>
<div class="a" style="left:481px;top:102px;width:45px;height:17px;background:#c2fdc2"></div>
<div class="a" style="left:526px;top:102px;width:45px;height:17px;background:#f8f8fc"></div>
<div class="a" style="left:571px;top:102px;width:45px;height:17px;background:#f0f0f4"></div>
<div class="a" style="left:616px;top:102px;width:45px;height:17px;background:#f8f8fc"></div>
<div class="a" style="left:661px;top:102px;width:45px;height:17px;background:#f0f0f4"></div>
<div class="a" style="left:706px;top:102px;width:45px;height:17px;background:#c2fdc2"></div>
<div class="a" style="left:751px;top:102px;width:45px;height:17px;background:#f8f8fc"></div>
<div class="a" style="left:796px;top:102px;width:45px;height:17px;background:#f0f0f4"></div>
<div class="a" style="left:841px;top:102px;width:45px;height:17px;background:#fbe7c6"></div>
<div class="a" style="left:886px;top:102px;width:45px;height:17px;background:#f8f8fc"></div>
<div class="a" style="left:931px;top:102px;width:221px;height:17px;background:#bffcbf"></div>
<div class="a" style="left:21px;top:118px;width:1131px;height:1px;background:#ebebeb"></div>
<div class="a" style="left:21px;top:102px;width:1px;height:16px;background:#efecf0"></div>
<div class="a" style="left:41px;top:102px;width:1px;height:16px;background:#efecf0"></div>
<div class="a" style="left:211px;top:102px;width:1px;height:16px;background:#efecf0"></div>
<div class="a" style="left:256px;top:102px;width:1px;height:16px;background:#efecf0"></div>
<div class="a" style="left:301px;top:102px;width:1px;height:16px;background:#efecf0"></div>
<div class="a" style="left:346px;top:102px;width:1px;height:16px;background:#efecf0"></div>
<div class="a" style="left:391px;top:102px;width:1px;height:16px;background:#efecf0"></div>
<div class="a" style="left:436px;top:102px;width:1px;height:16px;background:#efecf0"></div>
<div class="a" style="left:481px;top:102px;width:1px;height:16px;background:#efecf0"></div>
<div class="a" style="left:526px;top:102px;width:1px;height:16px;background:#efecf0"></div>
<div class="a" style="left:571px;top:102px;width:1px;height:16px;background:#efecf0"></div>
<div class="a" style="left:616px;top:102px;width:1px;height:16px;background:#efecf0"></div>
<div class="a" style="left:661px;top:102px;width:1px;height:16px;background:#efecf0"></div>
<div class="a" style="left:706px;top:102px;width:1px;height:16px;background:#efecf0"></div>
<div class="a" style="left:751px;top:102px;width:1px;height:16px;background:#efecf0"></div>
<div class="a" style="left:796px;top:102px;width:1px;height:16px;background:#efecf0"></div>
<div class="a" style="left:841px;top:102px;width:1px;height:16px;background:#efecf0"></div>
<div class="a" style="left:886px;top:102px;width:1px;height:16px;background:#efecf0"></div>
<div class="a" style="left:931px;top:102px;width:1px;height:16px;background:#efecf0"></div>
<div class="a" style="left:5px;top:104px;width:13px;height:13px"><svg width="13" height="13" viewBox="0 0 13 13"><rect x="0" y="0" width="13" height="13" rx="3" fill="#0b5cc2"/><path d="M3.2 6.8 L5.4 9 L9.8 4.2" stroke="#fff" stroke-width="1" fill="none"/></svg></div>
<div class="t" style="left:23px;top:105px;font-size:11px;color:#111">7</div>
<div class="t" style="left:46px;top:105px;font-size:11px;color:#111">Часте(2ПС) @5</div>
<div class="t" style="left:203.5px;top:105px;width:60px;text-align:center;font-size:11px;color:#111">1</div>
<div class="t" style="left:248.5px;top:105px;width:60px;text-align:center;font-size:11px;color:#111">0.5</div>
<div class="t" style="left:293.5px;top:105px;width:60px;text-align:center;font-size:11px;color:#111">0.3</div>
<div class="t" style="left:338.5px;top:105px;width:60px;text-align:center;font-size:11px;color:#111">0.3</div>
<div class="t" style="left:383.5px;top:105px;width:60px;text-align:center;font-size:11px;color:#111">0.6</div>
<div class="t" style="left:428.5px;top:105px;width:60px;text-align:center;font-size:11px;color:#111">0.6</div>
<div class="t" style="left:473.5px;top:105px;width:60px;text-align:center;font-size:11px;color:#111">0.8</div>
<div class="t" style="left:518.5px;top:105px;width:60px;text-align:center;font-size:11px;color:#111">0.6</div>
<div class="t" style="left:563.5px;top:105px;width:60px;text-align:center;font-size:11px;color:#111">0.3</div>
<div class="t" style="left:698.5px;top:105px;width:60px;text-align:center;font-size:11px;color:#111">0.2</div>
<div class="a" style="left:931px;top:102px;width:221px;height:17px;overflow:hidden"><div class="t" style="left:5px;top:3px;font-size:11px;color:#111;letter-spacing:0px">ΣGkj + Ψ1•Qk1 + ΣΨ2i•Qki (6.15b)</div></div>
<div class="a" style="left:0px;top:119px;width:21px;height:17px;background:#fff"></div>
<div class="a" style="left:21px;top:119px;width:20px;height:17px;background:#efeff4"></div>
<div class="a" style="left:41px;top:119px;width:170px;height:17px;background:#f8f8fc"></div>
<div class="a" style="left:211px;top:119px;width:45px;height:17px;background:#fdfdc6"></div>
<div class="a" style="left:256px;top:119px;width:45px;height:17px;background:#f8f8fc"></div>
<div class="a" style="left:301px;top:119px;width:45px;height:17px;background:#c2fdc2"></div>
<div class="a" style="left:346px;top:119px;width:45px;height:17px;background:#f8f8fc"></div>
<div class="a" style="left:391px;top:119px;width:45px;height:17px;background:#f0f0f4"></div>
<div class="a" style="left:436px;top:119px;width:45px;height:17px;background:#f8f8fc"></div>
<div class="a" style="left:481px;top:119px;width:45px;height:17px;background:#c2fdc2"></div>
<div class="a" style="left:526px;top:119px;width:45px;height:17px;background:#f8f8fc"></div>
<div class="a" style="left:571px;top:119px;width:45px;height:17px;background:#f0f0f4"></div>
<div class="a" style="left:616px;top:119px;width:45px;height:17px;background:#f8f8fc"></div>
<div class="a" style="left:661px;top:119px;width:45px;height:17px;background:#f0f0f4"></div>
<div class="a" style="left:706px;top:119px;width:45px;height:17px;background:#c2fdc2"></div>
<div class="a" style="left:751px;top:119px;width:45px;height:17px;background:#f8f8fc"></div>
<div class="a" style="left:796px;top:119px;width:45px;height:17px;background:#f0f0f4"></div>
<div class="a" style="left:841px;top:119px;width:45px;height:17px;background:#fbe7c6"></div>
<div class="a" style="left:886px;top:119px;width:45px;height:17px;background:#f8f8fc"></div>
<div class="a" style="left:931px;top:119px;width:221px;height:17px;background:#bffcbf"></div>
<div class="a" style="left:21px;top:135px;width:1131px;height:1px;background:#ebebeb"></div>
<div class="a" style="left:21px;top:119px;width:1px;height:16px;background:#efecf0"></div>
<div class="a" style="left:41px;top:119px;width:1px;height:16px;background:#efecf0"></div>
<div class="a" style="left:211px;top:119px;width:1px;height:16px;background:#efecf0"></div>
<div class="a" style="left:256px;top:119px;width:1px;height:16px;background:#efecf0"></div>
<div class="a" style="left:301px;top:119px;width:1px;height:16px;background:#efecf0"></div>
<div class="a" style="left:346px;top:119px;width:1px;height:16px;background:#efecf0"></div>
<div class="a" style="left:391px;top:119px;width:1px;height:16px;background:#efecf0"></div>
<div class="a" style="left:436px;top:119px;width:1px;height:16px;background:#efecf0"></div>
<div class="a" style="left:481px;top:119px;width:1px;height:16px;background:#efecf0"></div>
<div class="a" style="left:526px;top:119px;width:1px;height:16px;background:#efecf0"></div>
<div class="a" style="left:571px;top:119px;width:1px;height:16px;background:#efecf0"></div>
<div class="a" style="left:616px;top:119px;width:1px;height:16px;background:#efecf0"></div>
<div class="a" style="left:661px;top:119px;width:1px;height:16px;background:#efecf0"></div>
<div class="a" style="left:706px;top:119px;width:1px;height:16px;background:#efecf0"></div>
<div class="a" style="left:751px;top:119px;width:1px;height:16px;background:#efecf0"></div>
<div class="a" style="left:796px;top:119px;width:1px;height:16px;background:#efecf0"></div>
<div class="a" style="left:841px;top:119px;width:1px;height:16px;background:#efecf0"></div>
<div class="a" style="left:886px;top:119px;width:1px;height:16px;background:#efecf0"></div>
<div class="a" style="left:931px;top:119px;width:1px;height:16px;background:#efecf0"></div>
<div class="a" style="left:5px;top:121px;width:13px;height:13px"><svg width="13" height="13" viewBox="0 0 13 13"><rect x="0" y="0" width="13" height="13" rx="3" fill="#0b5cc2"/><path d="M3.2 6.8 L5.4 9 L9.8 4.2" stroke="#fff" stroke-width="1" fill="none"/></svg></div>
<div class="t" style="left:23px;top:122px;font-size:11px;color:#111">8</div>
<div class="t" style="left:46px;top:122px;font-size:11px;color:#111">Квазіпостійне(2ПС) @6</div>
<div class="t" style="left:203.5px;top:122px;width:60px;text-align:center;font-size:11px;color:#111">1</div>
<div class="t" style="left:248.5px;top:122px;width:60px;text-align:center;font-size:11px;color:#111">0.3</div>
<div class="t" style="left:293.5px;top:122px;width:60px;text-align:center;font-size:11px;color:#111">0.3</div>
<div class="t" style="left:338.5px;top:122px;width:60px;text-align:center;font-size:11px;color:#111">0.3</div>
<div class="t" style="left:383.5px;top:122px;width:60px;text-align:center;font-size:11px;color:#111">0.6</div>
<div class="t" style="left:428.5px;top:122px;width:60px;text-align:center;font-size:11px;color:#111">0.6</div>
<div class="t" style="left:473.5px;top:122px;width:60px;text-align:center;font-size:11px;color:#111">0.8</div>
<div class="t" style="left:518.5px;top:122px;width:60px;text-align:center;font-size:11px;color:#111">0.6</div>
<div class="t" style="left:563.5px;top:122px;width:60px;text-align:center;font-size:11px;color:#111">0.3</div>
<div class="t" style="left:698.5px;top:122px;width:60px;text-align:center;font-size:11px;color:#111">0.2</div>
<div class="a" style="left:931px;top:119px;width:221px;height:17px;overflow:hidden"><div class="t" style="left:5px;top:3px;font-size:11px;color:#111;letter-spacing:0px">ΣGkj + ΣΨ2i•Qki (6.16b)</div></div>
<div class="a" style="left:0px;top:136px;width:21px;height:17px;background:#fff"></div>
<div class="a" style="left:21px;top:136px;width:20px;height:17px;background:#efeff4"></div>
<div class="a" style="left:41px;top:136px;width:170px;height:17px;background:#f8f8fc"></div>
<div class="a" style="left:211px;top:136px;width:45px;height:17px;background:#fdfdc6"></div>
<div class="a" style="left:256px;top:136px;width:45px;height:17px;background:#f8f8fc"></div>
<div class="a" style="left:301px;top:136px;width:45px;height:17px;background:#c2fdc2"></div>
<div class="a" style="left:346px;top:136px;width:45px;height:17px;background:#f8f8fc"></div>
<div class="a" style="left:391px;top:136px;width:45px;height:17px;background:#f0f0f4"></div>
<div class="a" style="left:436px;top:136px;width:45px;height:17px;background:#f8f8fc"></div>
<div class="a" style="left:481px;top:136px;width:45px;height:17px;background:#c2fdc2"></div>
<div class="a" style="left:526px;top:136px;width:45px;height:17px;background:#f8f8fc"></div>
<div class="a" style="left:571px;top:136px;width:45px;height:17px;background:#f0f0f4"></div>
<div class="a" style="left:616px;top:136px;width:45px;height:17px;background:#f8f8fc"></div>
<div class="a" style="left:661px;top:136px;width:45px;height:17px;background:#f0f0f4"></div>
<div class="a" style="left:706px;top:136px;width:45px;height:17px;background:#c2fdc2"></div>
<div class="a" style="left:751px;top:136px;width:45px;height:17px;background:#f8f8fc"></div>
<div class="a" style="left:796px;top:136px;width:45px;height:17px;background:#f0f0f4"></div>
<div class="a" style="left:841px;top:136px;width:45px;height:17px;background:#fbe7c6"></div>
<div class="a" style="left:886px;top:136px;width:45px;height:17px;background:#f8f8fc"></div>
<div class="a" style="left:931px;top:136px;width:221px;height:17px;background:#bffcbf"></div>
<div class="a" style="left:21px;top:152px;width:1131px;height:1px;background:#ebebeb"></div>
<div class="a" style="left:21px;top:136px;width:1px;height:16px;background:#efecf0"></div>
<div class="a" style="left:41px;top:136px;width:1px;height:16px;background:#efecf0"></div>
<div class="a" style="left:211px;top:136px;width:1px;height:16px;background:#efecf0"></div>
<div class="a" style="left:256px;top:136px;width:1px;height:16px;background:#efecf0"></div>
<div class="a" style="left:301px;top:136px;width:1px;height:16px;background:#efecf0"></div>
<div class="a" style="left:346px;top:136px;width:1px;height:16px;background:#efecf0"></div>
<div class="a" style="left:391px;top:136px;width:1px;height:16px;background:#efecf0"></div>
<div class="a" style="left:436px;top:136px;width:1px;height:16px;background:#efecf0"></div>
<div class="a" style="left:481px;top:136px;width:1px;height:16px;background:#efecf0"></div>
<div class="a" style="left:526px;top:136px;width:1px;height:16px;background:#efecf0"></div>
<div class="a" style="left:571px;top:136px;width:1px;height:16px;background:#efecf0"></div>
<div class="a" style="left:616px;top:136px;width:1px;height:16px;background:#efecf0"></div>
<div class="a" style="left:661px;top:136px;width:1px;height:16px;background:#efecf0"></div>
<div class="a" style="left:706px;top:136px;width:1px;height:16px;background:#efecf0"></div>
<div class="a" style="left:751px;top:136px;width:1px;height:16px;background:#efecf0"></div>
<div class="a" style="left:796px;top:136px;width:1px;height:16px;background:#efecf0"></div>
<div class="a" style="left:841px;top:136px;width:1px;height:16px;background:#efecf0"></div>
<div class="a" style="left:886px;top:136px;width:1px;height:16px;background:#efecf0"></div>
<div class="a" style="left:931px;top:136px;width:1px;height:16px;background:#efecf0"></div>
<div class="a" style="left:5px;top:138px;width:13px;height:13px"><svg width="13" height="13" viewBox="0 0 13 13"><rect x="0.5" y="0.5" width="12" height="12" rx="2.5" fill="#f9f9f9" stroke="#5a5a5a" stroke-width="1"/></svg></div>
<div class="t" style="left:23px;top:139px;font-size:11px;color:#111">9</div>
<div class="t" style="left:46px;top:139px;font-size:11px;color:#111">G+W @1</div>
<div class="t" style="left:203.5px;top:139px;width:60px;text-align:center;font-size:11px;color:#111">1</div>
<div class="t" style="left:788.5px;top:139px;width:60px;text-align:center;font-size:11px;color:#111">1</div>
<div class="a" style="left:931px;top:136px;width:221px;height:17px;overflow:hidden"><div class="t" style="left:5px;top:3px;font-size:11px;color:#111;letter-spacing:0px">ΣGkj + W</div></div>
<div class="a" style="left:0px;top:153px;width:21px;height:17px;background:#fff"></div>
<div class="a" style="left:21px;top:153px;width:20px;height:17px;background:#efeff4"></div>
<div class="a" style="left:41px;top:153px;width:170px;height:17px;background:#f8f8fc"></div>
<div class="a" style="left:211px;top:153px;width:45px;height:17px;background:#fdfdc6"></div>
<div class="a" style="left:256px;top:153px;width:45px;height:17px;background:#f8f8fc"></div>
<div class="a" style="left:301px;top:153px;width:45px;height:17px;background:#c2fdc2"></div>
<div class="a" style="left:346px;top:153px;width:45px;height:17px;background:#f8f8fc"></div>
<div class="a" style="left:391px;top:153px;width:45px;height:17px;background:#f0f0f4"></div>
<div class="a" style="left:436px;top:153px;width:45px;height:17px;background:#f8f8fc"></div>
<div class="a" style="left:481px;top:153px;width:45px;height:17px;background:#c2fdc2"></div>
<div class="a" style="left:526px;top:153px;width:45px;height:17px;background:#f8f8fc"></div>
<div class="a" style="left:571px;top:153px;width:45px;height:17px;background:#f0f0f4"></div>
<div class="a" style="left:616px;top:153px;width:45px;height:17px;background:#f8f8fc"></div>
<div class="a" style="left:661px;top:153px;width:45px;height:17px;background:#f0f0f4"></div>
<div class="a" style="left:706px;top:153px;width:45px;height:17px;background:#c2fdc2"></div>
<div class="a" style="left:751px;top:153px;width:45px;height:17px;background:#f8f8fc"></div>
<div class="a" style="left:796px;top:153px;width:45px;height:17px;background:#f0f0f4"></div>
<div class="a" style="left:841px;top:153px;width:45px;height:17px;background:#fbe7c6"></div>
<div class="a" style="left:886px;top:153px;width:45px;height:17px;background:#f8f8fc"></div>
<div class="a" style="left:931px;top:153px;width:221px;height:17px;background:#bffcbf"></div>
<div class="a" style="left:21px;top:169px;width:1131px;height:1px;background:#ebebeb"></div>
<div class="a" style="left:21px;top:153px;width:1px;height:16px;background:#efecf0"></div>
<div class="a" style="left:41px;top:153px;width:1px;height:16px;background:#efecf0"></div>
<div class="a" style="left:211px;top:153px;width:1px;height:16px;background:#efecf0"></div>
<div class="a" style="left:256px;top:153px;width:1px;height:16px;background:#efecf0"></div>
<div class="a" style="left:301px;top:153px;width:1px;height:16px;background:#efecf0"></div>
<div class="a" style="left:346px;top:153px;width:1px;height:16px;background:#efecf0"></div>
<div class="a" style="left:391px;top:153px;width:1px;height:16px;background:#efecf0"></div>
<div class="a" style="left:436px;top:153px;width:1px;height:16px;background:#efecf0"></div>
<div class="a" style="left:481px;top:153px;width:1px;height:16px;background:#efecf0"></div>
<div class="a" style="left:526px;top:153px;width:1px;height:16px;background:#efecf0"></div>
<div class="a" style="left:571px;top:153px;width:1px;height:16px;background:#efecf0"></div>
<div class="a" style="left:616px;top:153px;width:1px;height:16px;background:#efecf0"></div>
<div class="a" style="left:661px;top:153px;width:1px;height:16px;background:#efecf0"></div>
<div class="a" style="left:706px;top:153px;width:1px;height:16px;background:#efecf0"></div>
<div class="a" style="left:751px;top:153px;width:1px;height:16px;background:#efecf0"></div>
<div class="a" style="left:796px;top:153px;width:1px;height:16px;background:#efecf0"></div>
<div class="a" style="left:841px;top:153px;width:1px;height:16px;background:#efecf0"></div>
<div class="a" style="left:886px;top:153px;width:1px;height:16px;background:#efecf0"></div>
<div class="a" style="left:931px;top:153px;width:1px;height:16px;background:#efecf0"></div>
<div class="a" style="left:5px;top:155px;width:13px;height:13px"><svg width="13" height="13" viewBox="0 0 13 13"><rect x="0.5" y="0.5" width="12" height="12" rx="2.5" fill="#f9f9f9" stroke="#5a5a5a" stroke-width="1"/></svg></div>
<div class="t" style="left:23px;top:156px;font-size:11px;color:#111">10</div>
<div class="t" style="left:46px;top:156px;font-size:11px;color:#111">G+Sn @1</div>
<div class="t" style="left:203.5px;top:156px;width:60px;text-align:center;font-size:11px;color:#111">1</div>
<div class="t" style="left:698.5px;top:156px;width:60px;text-align:center;font-size:11px;color:#111">1</div>
<div class="t" style="left:743.5px;top:156px;width:60px;text-align:center;font-size:11px;color:#111">1</div>
<div class="a" style="left:931px;top:153px;width:221px;height:17px;overflow:hidden"><div class="t" style="left:5px;top:3px;font-size:11px;color:#111;letter-spacing:0px">ΣGkj + Sn</div></div>
</div>
<div class="a" style="left:1565px;top:732px;width:18px;height:188px;background:#f0f0f0"></div>
<div class="a" style="left:1573px;top:750px;width:2px;height:137px;background:#707070;border-radius:1px"></div>
<div class="a" style="left:413px;top:920px;width:1170px;height:18px;background:#f0f0f0"></div>
<div class="a" style="left:430px;top:928px;width:939px;height:2px;background:#707070;border-radius:1px"></div>
<div class="a" style="left:413px;top:942px;width:72px;height:25px;background:#fdfdfd;border:1px solid #d4d4d4;border-bottom:1px solid #b0b0b0;border-radius:4px"></div>
<div class="t" style="left:249.0px;top:948px;width:400px;text-align:center;font-size:11px;color:#111">OK</div>
<div class="a" style="left:494px;top:942px;width:72px;height:25px;background:#fdfdfd;border:1px solid #d4d4d4;border-bottom:1px solid #b0b0b0;border-radius:4px"></div>
<div class="t" style="left:330.0px;top:948px;width:400px;text-align:center;font-size:11px;color:#111">Скасування</div>
<div class="a" style="left:755px;top:942px;width:31px;height:25px;background:linear-gradient(#f6f6f6,#ebebeb);border:1px solid #d4d4d4;border-right:1px solid #a8a8a8;border-bottom:1px solid #a8a8a8"></div>
<div class="a" style="left:794px;top:942px;width:31px;height:25px;background:linear-gradient(#f6f6f6,#ebebeb);border:1px solid #d4d4d4;border-right:1px solid #a8a8a8;border-bottom:1px solid #a8a8a8"></div>
<svg class="a" style="left:761px;top:946px;" width="20" height="18" viewBox="0 0 20 18"><path d="M5 1 V10 M0.5 5.5 H9.5" stroke="#8c8c9c" stroke-width="2.4"/><path d="M13 7 V17 M8 12 H18" stroke="#0a64f0" stroke-width="2.6"/></svg>
<svg class="a" style="left:800px;top:946px;" width="19" height="18" viewBox="0 0 19 18"><path d="M1 2 C7 6 11 10 17 17 M17 1 C11 8 8 12 1 15" stroke="#0a64f0" stroke-width="2" fill="none"/></svg>
<div class="a" style="left:834px;top:942px;width:219px;height:25px;background:#fdfdfd;border:1px solid #d4d4d4;border-bottom:1px solid #b0b0b0;border-radius:4px"></div>
<div class="t" style="left:743.5px;top:948px;width:400px;text-align:center;font-size:11px;color:#111">Встановити стандартні правила</div>
<div class="a" style="left:1062px;top:942px;width:218px;height:25px;background:#fdfdfd;border:1px solid #d4d4d4;border-bottom:1px solid #b0b0b0;border-radius:4px"></div>
<div class="t" style="left:966.0px;top:948px;width:400px;text-align:center;font-size:11px;color:#111">Підрахувати коефіцієнти</div>
<div class="a" style="left:1186px;top:306px;width:28px;height:422px;background:linear-gradient(90deg,rgba(0,0,0,0),rgba(0,0,0,0.04) 50%,rgba(0,0,0,0.14))"></div>
<div class="a" style="left:1586px;top:300px;width:9px;height:430px;background:linear-gradient(90deg,rgba(0,0,0,0.14),rgba(0,0,0,0.06))"></div>
<div class="a" style="left:1190px;top:728px;width:405px;height:60px;background:linear-gradient(rgba(0,0,0,0.17),rgba(0,0,0,0.09) 35%,rgba(0,0,0,0.03) 75%,rgba(0,0,0,0));-webkit-mask-image:linear-gradient(90deg,transparent,#000 50px)"></div>
<div class="a" style="left:1213px;top:305px;width:374px;height:424px;background:#f0f0f0;border:1px solid #9c9c9c;border-radius:8px;box-shadow:0 0 4px rgba(0,0,0,0.2)"></div>
<div class="a" style="left:1214px;top:306px;width:372px;height:30px;background:#f6f0f0;border-radius:8px 8px 0 0"></div>
<div class="t" style="left:1222px;top:315px;font-size:12px;color:#111">Вибір нормативного документу</div>
<svg class="a" style="left:1565px;top:315px;" width="11" height="11" viewBox="0 0 11 11"><path d="M0.5 0.5 L10.5 10.5 M10.5 0.5 L0.5 10.5" stroke="#111" stroke-width="1.1"/></svg>
<div class="a" style="left:1225px;top:353px;width:348px;height:279px;border:1px solid #dcdcdc;border-radius:2px"></div>
<div class="a" style="left:1230px;top:347px;width:110px;height:13px;background:#f0f0f0"></div>
<div class="t" style="left:1233px;top:348px;font-size:11px;color:#111">Нормативні документи</div>
<div class="a" style="left:1250px;top:374px;width:13px;height:13px"><svg width="13" height="13" viewBox="0 0 13 13"><circle cx="6.5" cy="6.5" r="6" fill="#f6f6f6" stroke="#4a4a4a" stroke-width="1"/></svg></div>
<div class="t" style="left:1266px;top:375px;font-size:11px;color:#111;letter-spacing:-0.35px">СНиП 2.01.07-85 &quot;НАВАНТАЖЕННЯ І ВПЛИВИ&quot;</div>
<div class="a" style="left:1250px;top:400px;width:13px;height:13px"><svg width="13" height="13" viewBox="0 0 13 13"><circle cx="6.5" cy="6.5" r="6" fill="#f6f6f6" stroke="#4a4a4a" stroke-width="1"/></svg></div>
<div class="t" style="left:1266px;top:401px;font-size:11px;color:#111;letter-spacing:-0.35px">ДБН В.1.2 - 2:2006 &quot;НАВАНТАЖЕННЯ І ВПЛИВИ&quot;</div>
<div class="a" style="left:1250px;top:426px;width:13px;height:13px"><svg width="13" height="13" viewBox="0 0 13 13"><circle cx="6.5" cy="6.5" r="6" fill="#f6f6f6" stroke="#4a4a4a" stroke-width="1"/></svg></div>
<div class="t" style="left:1266px;top:427px;font-size:11px;color:#111;letter-spacing:-0.35px">СП 20.13330.2016 &quot;НАВАНТАЖЕННЯ І ВПЛИВИ&quot;</div>
<div class="a" style="left:1250px;top:452px;width:13px;height:13px"><svg width="13" height="13" viewBox="0 0 13 13"><circle cx="6.5" cy="6.5" r="6" fill="#f6f6f6" stroke="#4a4a4a" stroke-width="1"/></svg></div>
<div class="t" style="left:1266px;top:453px;font-size:11px;color:#111;letter-spacing:-0.35px">СП 35.13330.2011 &quot;МОСТИ І ТРУБИ&quot;</div>
<div class="a" style="left:1250px;top:478px;width:13px;height:13px"><svg width="13" height="13" viewBox="0 0 13 13"><circle cx="6.5" cy="6.5" r="6" fill="#f6f6f6" stroke="#4a4a4a" stroke-width="1"/></svg></div>
<div class="t" style="left:1266px;top:479px;font-size:11px;color:#111;letter-spacing:-0.35px">EN 1990-2011</div>
<div class="a" style="left:1250px;top:504px;width:13px;height:13px"><svg width="13" height="13" viewBox="0 0 13 13"><circle cx="6.5" cy="6.5" r="6.5" fill="#0b5cc2"/><circle cx="6.5" cy="6.5" r="3" fill="#fff"/></svg></div>
<div class="t" style="left:1266px;top:505px;font-size:11px;color:#111;letter-spacing:-0.35px">СП РК EN 1990:2002+A1:2005/2011</div>
<div class="a" style="left:1274px;top:530px;width:13px;height:13px"><svg width="13" height="13" viewBox="0 0 13 13"><rect x="0.5" y="0.5" width="12" height="12" rx="2.5" fill="#f6f6f6" stroke="#5a5a5a" stroke-width="1"/></svg></div>
<div class="t" style="left:1290px;top:531px;font-size:11px;color:#111;letter-spacing:-0.3px">зі змінами до НП 2.2.3.2 від 30.12.21</div>
<div class="a" style="left:1296px;top:582px;width:114px;height:20px;background:#f48f8f"></div>
<div class="a" style="left:1300px;top:557px;width:13px;height:13px"><svg width="13" height="13" viewBox="0 0 13 13"><circle cx="6.5" cy="6.5" r="6" fill="#f6f6f6" stroke="#4a4a4a" stroke-width="1"/></svg></div>
<div class="t" style="left:1316px;top:558px;font-size:11px;color:#111;letter-spacing:-0.25px">група A (EQU)</div>
<div class="a" style="left:1300px;top:583px;width:13px;height:13px"><svg width="13" height="13" viewBox="0 0 13 13"><circle cx="6.5" cy="6.5" r="6.5" fill="#5c3a6a"/><circle cx="6.5" cy="6.5" r="3" fill="#f7a6a6"/></svg></div>
<div class="t" style="left:1316px;top:584px;font-size:11px;color:#3a0a0a;letter-spacing:-0.25px">група B (STR/GEO)</div>
<div class="a" style="left:1300px;top:609px;width:13px;height:13px"><svg width="13" height="13" viewBox="0 0 13 13"><circle cx="6.5" cy="6.5" r="6" fill="#f6f6f6" stroke="#4a4a4a" stroke-width="1"/></svg></div>
<div class="t" style="left:1316px;top:610px;font-size:11px;color:#111;letter-spacing:-0.25px">група C (SRT/GEO)</div>
<div class="a" style="left:1226px;top:639px;width:347px;height:48px;background:#f0f0f0;border:1px solid #e6e6e6;border-bottom:1px solid #7a7a7a"></div>
<div class="a" style="left:1226px;top:695px;width:73px;height:22px;background:#fdfdfd;border:1.5px solid #0b5cc2;border-radius:4px"></div>
<div class="t" style="left:1062.5px;top:700px;width:400px;text-align:center;font-size:11px;color:#111">OK</div>
<div class="a" style="left:1308px;top:695px;width:73px;height:22px;background:#fdfdfd;border:1px solid #d6d6d6;border-radius:4px"></div>
<div class="t" style="left:1144.5px;top:700px;width:400px;text-align:center;font-size:11px;color:#111">Скасування</div>
<svg class="a" style="left:0;top:0" width="1595" height="1026" viewBox="0 0 1595 1026"><path d="M1056.17 160.85 L1031.41 138.98 L1062.77 149.34 A29.5 29.5 0 1 1 1056.17 160.85 Z" fill="#fce6da" stroke="#c00000" stroke-width="4.2" stroke-linejoin="miter" stroke-miterlimit="10"/><path d="M1083.8 155.0 H1090.0 V183.0 H1083.8 V164.4 C1081.9 166.2 1079.4 167.6 1076.8 168.4 V162.6 C1080.4 161.2 1082.9 158.4 1083.8 155.0 Z" fill="#c00000"/></svg>
<svg class="a" style="left:0;top:0" width="1595" height="1026" viewBox="0 0 1595 1026"><path d="M195.17 622.02 L162.64 641.94 L186.38 612.08 A29.5 29.5 0 1 1 195.17 622.02 Z" fill="#fce6da" stroke="#c00000" stroke-width="4.2" stroke-linejoin="miter" stroke-miterlimit="10"/><text x="212.3" y="612.0" text-anchor="middle" font-family="Liberation Sans" font-weight="bold" font-size="39" fill="#c00000">2</text></svg>
<svg class="a" style="left:0;top:0" width="1595" height="1026" viewBox="0 0 1595 1026"><path d="M668.66 344.23 L650.78 300.95 L680.09 337.48 A29.5 29.5 0 1 1 668.66 344.23 Z" fill="#fce6da" stroke="#c00000" stroke-width="4.2" stroke-linejoin="miter" stroke-miterlimit="10"/><text x="689.0" y="379.6" text-anchor="middle" font-family="Liberation Sans" font-weight="bold" font-size="39" fill="#c00000">3</text></svg>
<svg class="a" style="left:0;top:0" width="1595" height="1026" viewBox="0 0 1595 1026"><path d="M1442.11 591.25 L1416.84 596.55 L1436.14 579.40 A29.5 29.5 0 1 1 1442.11 591.25 Z" fill="#fce6da" stroke="#c00000" stroke-width="4.2" stroke-linejoin="miter" stroke-miterlimit="10"/><text x="1464.8" y="586.4" text-anchor="middle" font-family="Liberation Sans" font-weight="bold" font-size="39" fill="#c00000">4</text></svg>
</body></html>
